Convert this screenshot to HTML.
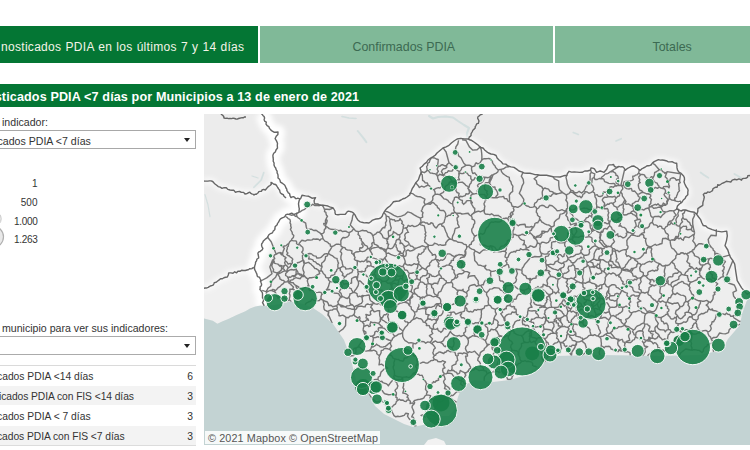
<!DOCTYPE html>
<html><head><meta charset="utf-8">
<style>
*{margin:0;padding:0;box-sizing:border-box}
html,body{width:750px;height:450px;overflow:hidden;background:#fff;font-family:"Liberation Sans",sans-serif}
.abs{position:absolute}
.t{position:absolute;white-space:pre;line-height:1}
.lb{font-size:10.6px;color:#333}
.row{position:absolute;left:0;width:196px;height:20px}
.rt{position:absolute;left:-3px;top:7px;font-size:10.3px;color:#333;white-space:pre;line-height:1}
.rn{position:absolute;right:3px;top:7px;font-size:10.3px;color:#333;line-height:1}
</style></head><body>
<div class="abs" style="left:0;top:26px;width:258px;height:37px;background:#047634"></div>
<div class="abs" style="left:260px;top:26px;width:293px;height:37px;background:#80b998"></div>
<div class="abs" style="left:555px;top:26px;width:195px;height:37px;background:#80b998"></div>
<div class="t" style="left:1px;top:40.7px;font-size:12px;letter-spacing:.3px;word-spacing:.5px;color:#f4f4e8">nosticados PDIA en los últimos 7 y 14 días</div>
<div class="t" style="left:352.5px;top:41px;font-size:12.4px;color:#3c6a52">Confirmados PDIA</div>
<div class="t" style="left:652.5px;top:41px;font-size:12.4px;color:#3c6a52">Totales</div>

<div class="abs" style="left:0;top:84px;width:750px;height:23px;background:#047634"></div>
<div class="t" style="left:-5.3px;top:90.7px;font-size:12.6px;letter-spacing:.12px;font-weight:bold;color:#fff">sticados PDIA &lt;7 días por Municipios a 13 de enero de 2021</div>

<div class="t lb" style="left:2px;top:117px">indicador:</div>
<div class="abs" style="left:-2px;top:130px;width:198px;height:19px;border:1px solid #a8a8a8;background:#fff"></div>
<div class="t lb" style="left:-2.5px;top:136px">cados PDIA &lt;7 días</div>
<svg class="abs" style="left:184px;top:138.2px" width="6" height="5"><path d="M0 0H6L3 4Z" fill="#222"/></svg>

<svg class="abs" style="left:0;top:170px" width="40" height="90">
<circle cx="-6.1" cy="48.8" r="7.3" fill="#efefef" stroke="#c8c8c8" stroke-width="1"/>
<circle cx="-7.4" cy="66.8" r="10.9" fill="#e9e9e9" stroke="#b0b0b0" stroke-width="1.2"/>
</svg>
<div class="t lb" style="right:712.5px;top:179px;font-size:10px">1</div>
<div class="t lb" style="right:712.5px;top:198px;font-size:10px">500</div>
<div class="t lb" style="right:712.5px;top:216.5px;font-size:10px;letter-spacing:-.3px">1.000</div>
<div class="t lb" style="right:712.5px;top:235px;font-size:10px;letter-spacing:-.3px">1.263</div>

<div class="t lb" style="left:2px;top:323px">municipio para ver sus indicadores:</div>
<div class="abs" style="left:-2px;top:336px;width:198px;height:19px;border:1px solid #ababab;background:#fff"></div>
<svg class="abs" style="left:184.2px;top:343.7px" width="6" height="5"><path d="M0 0H6L3 4Z" fill="#222"/></svg>

<div class="row" style="top:365px;background:#fff"><div class="rt">cados PDIA &lt;14 días</div><div class="rn">6</div></div>
<div class="row" style="top:386px;height:19px;background:#f3f3f3"><div class="rt" style="left:-1px;top:6px;letter-spacing:-.08px">icados PDIA con FIS &lt;14 días</div><div class="rn" style="top:6px">3</div></div>
<div class="row" style="top:405px;background:#fff"><div class="rt">cados PDIA &lt; 7 días</div><div class="rn">3</div></div>
<div class="row" style="top:426px;height:19px;background:#f3f3f3"><div class="rt" style="top:6px;letter-spacing:-.06px">cados PDIA con FIS &lt;7 días</div><div class="rn" style="top:6px">3</div></div>
<div class="abs" style="left:0;top:364.6px;width:196px;height:1px;background:#dadada"></div>
<div class="abs" style="left:0;top:445px;width:196px;height:1px;background:#dcdcdc"></div>

<svg class="abs" style="left:204px;top:114px" width="546" height="331" viewBox="204 114 546 331">
<defs><filter id="blur" x="-5%" y="-5%" width="110%" height="110%"><feGaussianBlur stdDeviation="2.8"/></filter></defs>
<rect x="204" y="114" width="546" height="331" fill="#eaeaea"/>
<path d="M203.0 113.0 L261.0 113.0 L266.0 124.0 L278.0 132.0 L276.0 150.0 L274.0 165.0 L278.0 178.0 L286.0 188.0 L291.0 197.6 L300.0 199.0 L299.0 212.0 L289.0 214.4 L279.6 220.0 L274.8 229.6 L268.7 235.0 L261.6 245.7 L258.1 254.5 L254.5 267.0 L257.2 275.9 L261.6 284.7 L262.5 293.6 L263.5 299.0 L264.2 305.9 L260.7 305.5 L255.3 306.4 L250.0 308.6 L245.4 311.3 L236.1 315.2 L228.3 319.1 L222.1 321.4 L217.4 323.8 L212.8 320.7 L203.0 318.3Z" fill="#ececec"/>
<path d="M203.0 289.0 L211.2 285.7 L214.3 282.6 L220.6 278.7 L233.0 273.2 L247.0 270.0 L254.5 267.0 L257.2 275.9 L261.6 284.7 L262.5 293.6 L263.5 299.0 L264.2 305.9 L260.7 305.5 L255.3 306.4 L250.0 308.6 L245.4 311.3 L236.1 315.2 L228.3 319.1 L222.1 321.4 L217.4 323.8 L212.8 320.7 L203.0 318.3Z" fill="#f0f0f0"/>
<path d="M300.0 199.0 L302.0 195.2 L315.6 197.6 L314.8 204.0 L326.0 205.6 L333.2 208.0 L335.6 214.4 L345.2 214.4 L348.4 211.2 L353.2 212.8 L359.6 221.6 L369.0 223.0 L376.0 219.0 L383.0 214.0 L390.0 206.0 L399.0 201.0 L407.0 197.0 L414.0 186.0 L421.0 173.0 L420.0 168.0 L428.0 160.0 L437.0 153.0 L443.0 148.0 L454.0 141.0 L468.0 139.0 L474.0 142.0 L483.0 148.0 L491.0 154.0 L499.0 160.0 L508.0 166.0 L519.0 171.0 L530.0 173.3 L540.0 175.2 L553.0 176.7 L567.0 175.2 L569.0 171.3 L579.5 172.4 L590.0 170.3 L591.0 168.0 L594.4 168.8 L596.5 172.4 L604.0 172.4 L608.3 165.4 L613.6 164.5 L615.7 167.1 L622.0 166.6 L625.3 170.3 L634.0 166.0 L640.3 170.3 L646.7 166.0 L651.0 165.0 L658.4 159.6 L666.0 160.7 L674.4 162.8 L676.7 163.3 L678.9 172.2 L684.4 177.8 L685.6 185.6 L687.8 192.2 L683.3 200.0 L676.7 208.9 L685.6 210.0 L696.7 214.4 L703.3 225.6 L707.8 227.8 L726.7 231.1 L727.8 250.0 L734.7 264.0 L747.2 294.3 L751.0 292.0 L751.0 289.0 L742.0 314.0 L740.0 325.0 L728.0 339.0 L722.0 350.0 L700.0 355.0 L660.0 356.0 L600.0 355.0 L555.0 356.0 L547.0 361.0 L523.0 376.0 L510.0 380.0 L493.0 382.0 L474.0 380.0 L462.0 387.0 L458.0 397.0 L455.0 409.0 L449.0 416.0 L436.0 416.0 L423.0 425.0 L413.0 427.0 L404.0 424.0 L384.0 414.0 L375.0 406.0 L368.0 393.0 L357.0 384.0 L352.0 364.0 L350.0 356.0 L344.0 340.0 L333.0 324.0 L322.0 314.0 L313.0 308.0 L303.0 304.0 L294.5 302.3 L290.0 301.5 L285.6 302.8 L275.0 305.0 L264.2 305.9 L263.5 299.0 L262.5 293.6 L261.6 284.7 L257.2 275.9 L254.5 267.0 L258.1 254.5 L261.6 245.7 L268.7 235.0 L274.8 229.6 L279.6 220.0 L289.0 214.4 L299.0 212.0Z" fill="#eeeeee"/>
<path d="M429.0 116.0 L433.0 118.5 L438.0 117.0 L446.0 116.5 L453.0 117.5 L458.0 121.0 L464.0 125.0 L469.0 128.0 L467.0 133.0 L467.0 137.0" fill="none" stroke="#c6d8d8" stroke-opacity=".65" stroke-width="2.08" stroke-linecap="round" stroke-linejoin="round"/><path d="M342.0 116.5 L349.0 118.0 L356.0 118.5" fill="none" stroke="#c6d8d8" stroke-opacity=".65" stroke-width="1.60" stroke-linecap="round" stroke-linejoin="round"/><path d="M357.8 131.0 L362.7 137.2 L366.4 142.1" fill="none" stroke="#c6d8d8" stroke-opacity=".65" stroke-width="2.00" stroke-linecap="round" stroke-linejoin="round"/><path d="M263.7 172.7 L261.2 180.0 L253.9 187.3" fill="none" stroke="#c6d8d8" stroke-opacity=".65" stroke-width="1.76" stroke-linecap="round" stroke-linejoin="round"/><path d="M258.0 178.0 L252.0 176.0" fill="none" stroke="#c6d8d8" stroke-opacity=".65" stroke-width="1.20" stroke-linecap="round" stroke-linejoin="round"/><path d="M205.0 194.7 L208.0 205.0 L210.0 216.7" fill="none" stroke="#c6d8d8" stroke-opacity=".65" stroke-width="1.20" stroke-linecap="round" stroke-linejoin="round"/><path d="M573.2 132.5 L578.4 134.5" fill="none" stroke="#c6d8d8" stroke-opacity=".65" stroke-width="1.60" stroke-linecap="round" stroke-linejoin="round"/><path d="M616.0 141.0 L621.3 138.7" fill="none" stroke="#c6d8d8" stroke-opacity=".65" stroke-width="1.60" stroke-linecap="round" stroke-linejoin="round"/><path d="M700.6 172.5 L704.0 175.0 L708.4 177.7" fill="none" stroke="#c6d8d8" stroke-opacity=".65" stroke-width="1.76" stroke-linecap="round" stroke-linejoin="round"/><path d="M734.4 174.0 L738.0 176.0 L740.9 177.7" fill="none" stroke="#c6d8d8" stroke-opacity=".65" stroke-width="1.76" stroke-linecap="round" stroke-linejoin="round"/>
<g filter="url(#blur)"><path d="M300.0 199.0 L298.9 198.6 L297.8 198.2 L296.7 198.6 L295.5 198.5 L294.7 197.3 L293.5 196.7 L292.2 196.9 L291.0 197.6 L290.3 196.4 L289.8 195.1 L289.6 193.6 L288.3 192.9 L287.6 191.7 L286.9 190.6 L286.8 189.2 L286.0 188.0 L285.4 186.4 L284.6 185.0 L283.3 184.0 L282.0 183.0 L280.4 182.2 L280.1 180.5 L279.3 179.0 L278.0 178.0 L278.1 176.3 L277.9 174.5 L277.1 172.9 L277.1 171.2 L276.1 169.7 L275.7 168.0 L274.6 166.6 L274.0 165.0 L274.1 163.0 L273.2 161.2 L273.3 159.2 L273.0 157.2 L272.9 155.2 L273.7 153.3 L275.3 152.0 L276.0 150.0 L277.5 148.0 L277.3 145.5 L277.5 143.2 L276.5 140.9 L275.1 138.7 L276.2 136.3 L277.9 134.5 L278.0 132.0 L276.0 132.3 L274.0 132.2 L272.3 131.2 L270.7 129.9 L269.5 128.4 L268.8 126.6 L267.1 125.6 L266.0 124.0 L266.3 122.1 L264.6 121.1 L264.1 119.6 L264.6 118.0 L264.1 116.5 L262.9 115.4 L262.0 114.2 L261.0 113.0 M264.2 305.9 L263.4 304.2 L262.5 302.6 L263.5 300.9 L263.5 299.0 L262.5 297.9 L262.5 296.4 L262.5 295.0 L262.5 293.6 L262.2 292.4 L261.4 291.3 L260.6 290.3 L259.8 289.4 L260.3 288.1 L260.1 286.8 L261.2 286.0 L261.6 284.7 L261.4 283.4 L260.9 282.2 L260.6 281.0 L260.7 279.7 L260.0 278.5 L259.5 277.2 L258.2 276.9 L257.2 275.9 L257.0 274.7 L256.7 273.6 L256.2 272.6 L255.7 271.5 L255.1 270.4 L254.6 269.4 L254.5 268.2 L254.5 267.0 L254.9 265.4 L255.4 263.9 L255.6 262.2 L256.5 260.8 L257.0 259.0 L258.7 258.0 L258.5 256.2 L258.1 254.5 L257.9 253.1 L258.8 251.9 L260.1 251.5 L261.1 250.6 L262.3 249.7 L262.9 248.3 L262.1 247.1 L261.6 245.7 L261.6 244.0 L262.6 242.6 L263.3 241.1 L264.5 239.9 L265.7 238.8 L267.1 237.9 L268.0 236.5 L268.7 235.0 L269.5 234.3 L270.3 233.7 L271.3 233.3 L272.3 232.9 L272.8 232.0 L273.2 231.0 L274.1 230.4 L274.8 229.6 L275.0 228.2 L275.1 226.7 L276.1 225.7 L277.2 224.8 L277.5 223.4 L278.4 222.4 L279.0 221.2 L279.6 220.0 L280.5 218.9 L281.7 218.2 L282.9 217.6 L284.2 217.1 L285.2 215.9 L286.0 214.6 L287.5 214.3 L289.0 214.4 L290.3 213.7 L291.7 213.2 L292.9 213.9 L294.3 214.4 L295.4 213.8 L296.7 213.4 L298.0 212.9 L299.0 212.0 L299.1 210.4 L299.3 208.7 L298.9 207.1 L298.7 205.4 L298.5 203.8 L298.8 202.1 L299.2 200.5 L300.0 199.0" fill="none" stroke="#fff" stroke-width="14" stroke-linejoin="round"/>
<path d="M203.0 289.0 L203.9 288.3 L205.0 288.0 L206.1 288.0 L207.2 287.7 L208.3 287.3 L209.2 286.7 L210.2 286.2 L211.2 285.7 L212.4 285.4 L213.4 284.8 L213.9 283.7 L214.3 282.6 L216.2 282.2 L217.7 281.0 L219.2 279.9 L220.6 278.7 L222.4 278.8 L223.9 277.7 L225.6 277.3 L227.3 277.0 L228.3 275.0 L228.7 272.9 L230.8 272.9 L233.0 273.2 L234.7 271.8 L236.6 272.8 L237.9 271.3 L239.9 271.3 L241.6 270.3 L243.4 270.5 L245.3 270.5 L247.0 270.0 L248.0 269.8 L248.9 269.3 L249.8 268.6 L250.9 268.9 L251.9 268.6 L252.7 267.9 L253.7 267.8 L254.5 267.0 M203.0 181.0 L204.6 181.1 L206.2 181.1 L207.8 181.1 L209.4 180.9 L211.1 180.9 L212.7 181.5 L213.8 182.8 L215.0 184.0 L216.7 185.2 L218.2 186.6 L220.2 187.2 L222.0 188.3 L224.1 187.7 L226.3 187.7 L227.8 189.4 L230.0 190.0 L231.9 190.3 L233.9 190.3 L235.3 192.2 L237.6 191.6 L239.6 191.5 L241.4 192.4 L243.6 192.4 L245.0 194.0 L246.3 193.8 L247.5 193.4 L248.5 192.6 L249.8 192.2 L250.6 193.2 L251.7 193.8 L253.0 194.2 L254.0 195.0 L255.0 194.2 L256.3 194.3 L257.2 193.5 L258.2 192.8 L258.8 191.6 L260.1 191.4 L261.5 191.3 L262.0 190.0 L263.7 189.4 L265.3 190.0 L266.4 188.7 L267.5 187.4 L268.6 186.3 L270.0 185.5 L271.3 184.3 L271.0 182.5 L272.5 183.2 L273.9 184.2 L275.7 184.5 L276.8 186.0 L277.7 187.5 L278.6 188.9 L279.7 190.3 L280.0 192.0 L280.5 193.0 L281.4 193.7 L282.3 194.3 L283.4 194.6 L283.6 195.8 L284.4 196.6 L285.2 197.2 L286.0 198.0 M300.0 199.0 L300.8 198.2 L301.2 197.2 L301.6 196.2 L302.0 195.2 L305.4 195.9 L308.8 196.3 L312.0 198.2 L315.6 197.6 L314.7 199.1 L314.1 200.7 L314.3 202.4 L314.8 204.0 L317.7 204.0 L320.3 205.3 L323.2 205.2 L326.0 205.6 L327.9 206.0 L329.6 206.9 L331.4 207.4 L333.2 208.0 L334.1 209.5 L335.0 211.0 L335.0 212.7 L335.6 214.4 L338.0 214.7 L340.4 214.4 L342.8 214.4 L345.2 214.4 L345.9 213.5 L346.6 212.6 L347.3 211.6 L348.4 211.2 L349.7 211.4 L350.9 211.7 L352.1 212.1 L353.2 212.8 L355.0 214.9 L356.2 217.4 L357.6 219.7 L359.6 221.6 L361.9 222.3 L364.2 222.9 L366.6 222.7 L369.0 223.0 L370.7 221.8 L372.1 220.4 L374.0 219.6 L376.0 219.0 L378.3 218.8 L380.6 218.0 L382.2 216.3 L383.0 214.0 L384.4 211.7 L385.9 209.5 L387.8 207.6 L390.0 206.0 L391.8 203.9 L393.5 201.8 L396.2 201.2 L399.0 201.0 L401.0 200.0 L402.9 198.8 L405.1 198.2 L407.0 197.0 L409.7 194.9 L411.0 191.8 L412.2 188.7 L414.0 186.0 L415.8 182.7 L418.3 179.9 L419.5 176.4 L421.0 173.0 L421.1 171.7 L420.9 170.4 L420.5 169.2 L420.0 168.0 L422.3 166.3 L424.1 164.1 L426.5 162.4 L428.0 160.0 L430.3 158.3 L432.8 156.9 L435.2 155.2 L437.0 153.0 L438.5 151.8 L440.0 150.5 L441.5 149.3 L443.0 148.0 L446.1 146.8 L449.0 145.3 L451.4 143.0 L454.0 141.0 L457.1 139.0 L460.8 138.4 L464.4 138.9 L468.0 139.0 L469.5 139.8 L471.2 140.2 L472.6 141.1 L474.0 142.0 L476.2 143.6 L478.4 145.2 L480.1 147.5 L483.0 148.0 L484.6 149.9 L486.5 151.6 L488.6 153.0 L491.0 154.0 L493.7 154.4 L496.1 155.5 L497.1 158.0 L499.0 160.0 L501.2 161.7 L502.9 163.9 L505.8 164.1 L508.0 166.0 L511.0 166.9 L514.0 167.4 L516.6 169.1 L519.0 171.0 L521.7 171.9 L524.3 173.1 L527.1 173.3 L530.0 173.3 L532.5 173.9 L534.9 174.6 L537.5 174.7 L540.0 175.2 L543.3 175.1 L546.6 175.3 L549.8 176.0 L553.0 176.7 L556.6 176.9 L560.1 177.0 L563.5 175.8 L567.0 175.2 L567.2 174.1 L567.7 173.1 L568.4 172.2 L569.0 171.3 L571.6 172.1 L574.2 171.9 L576.9 172.1 L579.5 172.4 L582.2 172.3 L584.7 171.0 L587.4 171.0 L590.0 170.3 L590.7 169.2 L591.0 168.0 L592.8 168.1 L594.4 168.8 L594.9 169.7 L595.5 170.6 L596.0 171.5 L596.5 172.4 L598.4 171.7 L600.2 171.0 L602.1 171.7 L604.0 172.4 L605.3 170.8 L606.7 169.3 L607.5 167.3 L608.3 165.4 L609.6 164.9 L610.9 164.9 L612.3 164.8 L613.6 164.5 L614.3 166.1 L615.7 167.1 L617.3 167.1 L618.8 166.4 L620.4 166.9 L622.0 166.6 L623.2 167.1 L624.1 168.1 L624.8 169.1 L625.3 170.3 L627.1 168.7 L629.3 167.5 L631.5 166.3 L634.0 166.0 L635.6 167.1 L637.3 168.0 L638.6 169.3 L640.3 170.3 L641.7 168.9 L643.4 168.0 L645.1 167.2 L646.7 166.0 L647.8 165.7 L648.9 165.7 L650.0 165.4 L651.0 165.0 L652.4 163.1 L654.2 161.6 L656.3 160.6 L658.4 159.6 L660.3 160.1 L662.2 160.0 L664.1 160.3 L666.0 160.7 L668.0 161.7 L670.2 161.9 L672.4 161.8 L674.4 162.8 L675.5 163.2 L676.7 163.3 L676.9 165.6 L677.0 167.9 L677.6 170.2 L678.9 172.2 L680.7 173.1 L682.2 174.5 L683.6 175.9 L684.4 177.8 L684.5 179.9 L684.0 181.8 L684.7 183.8 L685.6 185.6 L686.4 187.2 L687.6 188.6 L688.1 190.4 L687.8 192.2 L687.8 194.7 L686.0 196.4 L685.1 198.5 L683.3 200.0 L681.8 202.4 L679.4 204.0 L677.4 206.1 L676.7 208.9 L678.9 209.9 L681.0 211.0 L683.2 210.0 L685.6 210.0 L688.4 211.0 L691.3 211.8 L694.4 212.2 L696.7 214.4 L698.6 217.0 L700.6 219.6 L701.8 222.7 L703.3 225.6 L704.6 225.8 L705.9 226.0 L706.8 226.9 L707.8 227.8 L712.3 229.6 L717.0 231.1 L721.8 231.9 L726.7 231.1 L727.3 235.9 L726.5 240.6 L725.0 245.6 L727.8 250.0 L729.0 253.7 L730.5 257.4 L732.8 260.5 L734.7 264.0 L735.9 272.4 L737.2 280.7 L741.6 287.9 L747.2 294.3 L748.2 293.7 L749.1 293.2 L749.9 292.4 L751.0 292.0" fill="none" stroke="#fff" stroke-width="6" stroke-opacity=".7" stroke-linejoin="round"/></g>
<path d="M713.6 351.9 L712.2 343.7 M712.2 343.7 L712.6 341.3 L711.3 339.2 M711.3 339.2 L713.6 337.4 L716.5 337.5 L718.1 335.3 L719.6 333.0 L722.5 333.6 L725.4 333.9 L728.5 332.7 L729.3 329.5 L731.4 327.9 L733.5 326.5 L735.9 325.3 L738.5 325.0 L740.2 324.0 M722.2 257.2 L720.8 255.5 L719.0 254.3 L716.9 253.5 L714.7 253.5 M714.7 253.5 L714.9 251.5 L713.3 250.3 L712.9 248.5 L711.4 247.5 M730.2 254.9 L722.2 257.2 M716.3 229.3 L716.4 232.1 L716.2 235.7 L711.1 235.2 L708.2 239.3 L708.9 243.8 L711.4 247.5 M732.9 260.4 L725.9 277.6 M740.7 321.3 L739.7 321.5 L737.9 320.3 L736.0 319.2 L734.1 318.0 L732.9 316.0 M725.9 277.6 L726.1 280.9 L728.5 283.1 L731.4 284.0 L734.3 285.0 L735.6 287.8 L736.5 290.7 L733.0 292.3 L733.6 296.1 L735.3 298.3 L736.4 300.8 L736.2 303.7 L737.7 306.2 L737.2 309.2 L737.4 312.2 L735.7 314.7 L732.9 316.0 M722.2 257.2 L723.0 258.4 L723.3 259.8 L724.5 260.6 L725.4 261.7 L724.4 262.8 L723.7 264.2 L722.8 266.0 L724.4 267.1 L724.0 268.4 L723.8 269.6 L722.4 270.8 L723.6 272.2 L723.3 273.6 L722.8 275.0 L723.5 276.2 L724.6 277.2 M725.9 277.6 L724.6 277.2 M711.3 339.2 L710.6 337.1 L709.0 335.7 L708.1 333.8 L707.8 331.7 M707.8 331.7 L709.4 331.4 L710.5 330.2 L711.2 328.7 L710.9 327.2 L710.1 325.5 L711.6 324.5 L711.8 323.2 L712.1 321.8 L713.7 321.7 L714.3 320.2 L715.3 319.1 L715.6 317.7 L716.0 316.2 L716.3 314.7 L717.9 314.2 L719.4 314.0 M732.9 316.0 L730.8 316.4 L729.7 314.5 L727.8 314.3 L726.4 313.1 L725.0 314.7 L723.0 313.8 L721.2 313.9 L719.4 314.0 M431.5 419.1 L428.2 417.8 L421.0 415.4 L428.4 413.2 L435.1 416.6 M435.2 416.6 L434.7 409.3 L438.0 402.7 M416.6 426.3 L414.4 425.8 L412.9 421.5 M412.9 421.5 L413.8 420.3 L413.9 418.8 L413.3 417.2 L411.7 416.9 L412.6 414.7 L414.0 412.8 L413.5 410.6 L412.5 408.5 L412.0 407.2 L412.3 405.9 L413.0 404.8 L414.2 404.1 M414.2 404.1 L414.6 402.6 L413.5 401.5 L414.6 400.5 L415.9 400.1 L418.0 399.5 L420.2 399.2 L422.2 398.8 L423.9 397.8 L424.9 396.0 L426.6 394.9 M438.0 402.7 L437.7 400.5 L435.7 399.3 L433.6 398.9 L431.7 399.6 L429.8 398.0 L430.6 395.7 L428.6 395.1 L426.6 394.9 M715.0 310.7 L716.4 311.2 L717.7 311.7 L718.9 312.5 L719.4 314.0 M708.6 301.7 L708.0 303.8 L706.2 305.1 L708.0 306.4 L708.8 308.4 L710.1 309.5 L711.8 309.8 L713.3 310.5 L715.0 310.7 M708.6 301.7 L710.4 302.5 L711.7 301.1 L712.6 299.7 L713.1 298.2 L713.2 296.8 L713.2 295.3 L714.9 294.3 L714.1 292.5 L715.7 291.9 L716.0 290.2 L716.8 288.8 L716.1 287.2 L716.5 285.2 L717.7 283.7 L716.1 282.5 L714.2 281.9 M724.6 277.2 L722.8 276.6 L721.0 277.3 L719.7 278.5 L718.2 279.5 M714.2 281.9 L714.8 280.7 L715.5 279.6 L716.8 279.2 L718.2 279.5 M689.4 285.1 L689.0 286.2 M692.9 298.2 L693.7 296.6 L693.4 294.8 L691.7 293.9 L691.1 292.2 L690.4 290.7 L689.4 289.4 L690.0 287.7 L689.0 286.2 M700.2 300.6 L702.2 301.2 L704.3 301.2 L706.6 300.4 L708.6 301.7 M700.2 300.6 L698.2 300.7 L696.4 299.9 L694.7 298.9 L692.9 298.2 M689.4 285.1 L689.9 283.1 L691.5 282.0 L693.4 281.4 L695.1 280.5 L697.0 279.8 L697.7 277.9 L699.5 277.4 L701.2 276.5 M714.2 281.9 L712.3 281.3 L711.3 279.5 L709.4 278.9 L707.6 279.7 L705.9 278.7 L704.0 278.9 L702.4 278.0 L701.2 276.5 M684.0 275.1 L685.8 275.4 L687.6 275.7 L687.6 277.5 L688.4 279.2 L688.4 281.2 L690.4 281.9 L689.8 283.5 L689.4 285.1 M691.6 266.9 L692.8 267.9 L693.7 269.1 L695.5 269.2 L696.5 267.7 L698.1 269.5 L700.1 268.3 L699.6 270.0 L699.5 271.8 M691.6 266.9 L690.9 268.2 L689.4 268.6 L688.2 269.5 L687.7 270.9 L686.5 271.6 L685.5 272.7 L685.0 274.0 L684.0 275.1 M701.2 276.5 L700.4 275.4 L699.4 274.6 L699.8 273.2 L699.5 271.8 M680.4 173.7 L666.9 171.6 M680.6 174.0 L679.7 179.8 M679.7 179.8 L677.9 179.8 L676.2 180.2 L675.3 178.6 L673.7 177.8 L671.9 178.0 L670.4 178.8 L669.8 180.4 L668.6 181.6 M666.9 171.6 L666.7 173.0 L666.1 174.3 L665.6 175.6 L665.2 177.0 L666.5 177.8 L667.3 179.1 L667.9 180.4 L668.6 181.6 M693.9 213.3 L694.6 215.4 L692.7 219.4 L692.7 224.0 L693.5 228.3 L694.6 232.6 M711.4 247.5 L709.7 245.8 L707.4 246.1 L705.5 245.3 L703.6 244.4 L701.3 243.8 L698.9 243.7 L697.2 245.2 L695.5 246.9 M695.5 246.9 L695.5 245.2 L694.9 243.6 L693.9 242.2 L692.7 240.9 L693.5 239.5 L694.0 237.9 L693.6 236.2 L694.2 234.5 M694.6 232.6 L694.2 234.5 M712.2 343.7 L710.5 343.4 L709.4 344.7 L707.5 344.5 L706.8 346.3 L705.3 346.9 L704.2 348.1 L703.4 349.5 L703.3 351.1 L702.0 352.6 L700.4 351.3 L699.2 350.4 L697.6 350.3 L696.2 349.9 L694.7 349.6 L693.2 349.8 L691.8 350.3 M707.8 331.7 L705.9 330.4 L703.6 330.6 L701.7 331.5 L699.9 332.7 M691.8 350.3 L692.0 347.9 L691.0 345.8 L691.6 343.4 L690.7 341.2 M699.9 332.7 L697.7 333.0 L695.9 334.1 L693.6 334.2 L691.7 333.0 L690.9 334.2 L689.9 335.1 L690.8 336.1 L691.8 337.2 L691.6 339.3 L690.7 341.2 M267.4 237.0 L271.2 241.7 L276.2 254.3 M260.2 281.9 L260.7 281.0 L266.7 277.9 L272.0 273.7 L269.8 266.9 L272.5 260.3 M276.2 254.3 L274.4 254.9 L273.8 256.6 L274.7 258.6 L272.9 259.8 M272.5 260.3 L272.9 259.8 M698.9 257.8 L699.8 260.1 L699.3 262.5 L699.7 263.7 L700.5 264.9 L701.8 265.0 L703.2 264.9 M698.9 257.8 L699.9 259.7 L702.0 259.2 L703.7 259.7 L704.8 261.1 L705.7 259.5 L707.5 259.0 L709.2 258.9 L710.8 258.1 M703.2 264.9 L704.7 264.7 L705.8 263.7 L707.3 263.6 L708.4 262.5 M710.8 258.1 L709.4 258.6 L708.9 259.9 L708.1 261.1 L708.4 262.5 M686.7 254.3 L687.7 253.2 L689.2 252.8 L690.2 251.7 L691.7 251.4 M691.7 251.4 L692.9 252.0 L693.4 253.3 L694.3 254.3 L694.4 255.6 L695.5 256.2 L696.7 256.6 L697.9 257.1 L698.9 257.8 M691.6 266.9 L689.4 266.0 L689.7 263.7 L688.1 262.8 L686.8 261.5 L687.6 259.8 L688.1 257.9 L688.2 255.8 L686.7 254.3 M699.5 271.8 L700.8 270.3 L701.4 268.4 L702.3 266.7 L703.2 264.9 M695.5 246.9 L694.6 248.1 L694.0 249.5 L692.5 250.0 L691.7 251.4 M714.7 253.5 L715.1 255.4 L714.4 257.2 L712.9 259.1 L710.8 258.1 M718.2 279.5 L716.7 279.6 L715.2 279.3 L714.1 278.2 L712.6 278.0 L712.0 276.5 L712.5 274.9 L711.2 274.0 L710.2 272.7 L709.7 271.4 L709.6 270.1 L709.0 268.5 L710.4 267.4 L710.3 266.1 L710.0 264.7 L708.7 263.9 L708.4 262.5 M695.9 320.2 L696.4 321.7 L695.5 322.9 M695.9 320.2 L694.6 319.6 L693.3 319.4 L692.4 318.4 L692.0 317.0 M695.5 322.9 L694.1 323.4 L693.5 324.7 L692.6 325.8 L692.8 327.3 L691.8 328.0 L690.9 328.9 L689.9 329.7 L689.1 330.6 L687.7 330.5 L686.7 329.6 L685.4 329.9 L684.1 329.5 L682.8 329.6 L681.7 330.4 L680.4 330.8 L679.1 330.6 M692.0 317.0 L691.9 317.0 M691.9 317.0 L689.5 316.7 L687.9 318.6 L687.5 320.8 L685.9 322.3 L683.7 321.9 L681.9 323.2 L680.0 323.7 L677.9 323.6 M677.9 323.6 L678.2 325.4 L676.8 326.7 L677.5 328.3 L677.8 329.9 M679.1 330.6 L677.8 329.9 M715.0 310.7 L713.1 310.6 L712.3 308.9 L710.7 309.9 L709.0 309.1 L707.8 310.3 L707.4 311.9 L705.7 312.2 L704.4 313.3 L702.9 313.7 L701.4 313.5 L700.2 314.5 L698.8 315.1 L698.1 316.5 L698.2 318.2 L697.5 319.7 L695.9 320.2 M699.9 332.7 L700.0 331.2 L699.0 330.1 L698.0 329.2 L697.7 327.8 L696.8 326.7 L696.9 325.2 L696.6 323.8 L695.5 322.9 M700.2 300.6 L700.5 303.0 L699.3 305.2 L698.8 307.5 L697.3 309.4 L696.9 311.8 L695.6 313.9 L694.5 314.7 L693.1 314.7 L692.4 315.8 L692.0 317.0 M690.7 341.2 L689.3 341.0 L687.9 341.3 L686.6 340.2 L687.1 338.6 L686.1 336.5 L686.5 334.2 L684.7 333.2 L682.7 332.6 L680.8 331.8 L679.1 330.6 M691.8 350.3 L685.6 349.0 L680.6 353.0 L679.5 355.5 M571.6 355.6 L570.4 353.9 L567.9 348.5 M571.5 355.6 L571.9 352.0 L574.9 347.5 L576.5 342.3 M567.9 348.5 L568.7 347.3 L569.6 346.2 L571.2 346.7 L572.2 345.2 L573.9 345.3 L575.7 345.7 L576.5 344.1 L576.5 342.3 M567.9 348.5 L566.2 347.7 L566.9 345.9 L565.5 346.3 L564.3 345.5 L564.2 344.0 L563.1 342.9 L561.7 342.9 L560.3 343.1 M560.3 343.1 L560.8 344.8 L561.1 346.6 L561.5 348.5 L560.7 350.2 L558.7 349.5 L556.7 350.2 L555.6 352.0 L554.2 353.4 L552.8 354.0 L551.4 354.9 L550.1 355.8 L548.6 356.2 L547.0 358.0 L544.7 357.7 L545.3 359.7 L545.6 361.7 M545.5 361.9 L545.6 361.7 M523.4 202.9 L523.8 199.3 L521.8 196.3 L519.3 193.2 L521.0 189.6 L522.0 186.2 L523.7 183.0 L523.2 179.4 L521.3 176.2 L523.2 171.9 M509.1 166.5 L508.6 166.8 L505.9 167.1 L503.7 168.8 L501.0 169.4 M523.4 202.9 L522.3 203.7 L521.6 204.8 L520.6 205.8 L519.4 206.4 L518.2 207.3 L516.8 207.2 L515.5 206.7 L514.1 206.7 M514.1 206.7 L512.2 206.3 L511.6 204.5 L511.1 202.9 L509.6 202.0 M509.6 202.0 L509.5 199.7 L509.5 197.4 L509.3 195.0 L510.6 193.0 L512.7 191.4 L512.6 188.7 L512.9 186.2 L511.5 184.1 L510.9 181.8 L509.5 180.0 L509.3 177.3 L506.9 176.3 L504.9 175.0 L503.0 173.7 L501.5 171.7 L501.0 169.4 M291.3 240.4 L293.6 240.9 L296.0 240.9 L296.7 242.1 L296.5 243.4 L297.3 244.4 L298.7 244.8 M291.3 240.4 L292.0 238.7 L293.4 237.4 L293.8 235.4 L292.3 234.0 L292.2 232.4 L291.4 231.0 L290.4 229.4 L291.3 227.7 L290.7 226.1 L290.8 224.4 L290.0 222.9 L290.4 221.1 L289.8 219.3 L288.1 218.6 L287.0 217.3 L285.5 216.5 M298.7 244.8 L299.4 243.1 L300.5 241.8 L301.9 240.3 L303.9 240.8 L305.7 241.0 L307.1 240.0 L308.8 240.0 L310.4 240.1 L312.1 239.9 L313.4 238.9 L315.0 239.3 L316.7 239.0 L318.5 239.3 L319.9 240.4 L321.1 238.9 L323.0 238.6 M285.5 216.5 L285.7 216.3 M288.7 214.6 L289.7 214.6 L291.2 215.2 L292.7 215.0 L294.3 215.0 L295.3 216.2 L296.9 216.5 M296.9 216.5 L298.4 218.0 L300.2 219.2 L301.6 220.9 L303.6 221.8 L305.7 223.1 L306.0 225.5 L306.4 227.6 L307.2 229.6 L309.5 229.2 L311.7 229.3 L313.7 230.5 L316.1 230.3 L317.9 231.6 L319.9 232.8 L321.3 234.5 L322.5 236.4 M323.0 238.6 L322.5 236.4 M288.8 243.6 L289.7 241.7 L291.3 240.4 M288.8 243.6 L287.3 244.4 L286.2 245.6 L284.5 246.0 L283.0 246.7 L284.4 248.5 L283.4 250.6 L282.9 252.1 L282.7 253.6 L281.3 252.9 L279.9 252.5 M285.5 216.5 L285.5 216.5 M276.2 254.3 L277.9 253.2 L279.9 252.5 M333.2 208.1 L329.4 209.5 L324.3 209.0 M324.3 209.0 L323.3 206.7 L321.8 205.0 M321.4 204.9 L319.3 205.7 L316.9 205.3 L314.6 205.5 L312.7 204.2 L310.9 205.6 L308.7 206.0 L306.7 206.7 L305.6 208.5 L304.0 209.7 L302.1 210.4 L300.0 212.0 L299.0 211.9 M297.2 212.4 L296.6 214.1 L296.9 216.5 M326.2 218.9 L325.5 220.1 L325.4 221.4 L325.7 223.4 L323.7 223.4 L324.0 224.9 L325.4 225.4 L325.5 226.7 L325.9 228.0 L324.3 229.8 L324.1 232.2 L323.0 233.4 L321.4 233.6 L322.0 235.0 L322.5 236.4 M324.3 209.0 L324.7 210.2 L324.5 211.6 L325.9 212.3 L326.0 213.8 L326.5 215.2 L327.5 216.3 L326.7 217.6 L326.2 218.9 M349.2 232.7 L349.1 235.1 L347.6 236.9 L345.4 237.7 L343.1 237.5 L341.7 239.0 L340.8 240.9 L340.9 242.9 L340.8 244.9 M332.0 246.7 L334.1 245.6 L336.1 244.2 L338.5 244.2 L340.8 244.9 M326.2 218.9 L327.2 220.9 L326.6 223.1 L325.3 225.5 L327.5 227.2 L329.2 228.6 L331.2 229.3 L333.4 229.5 L335.5 229.5 L337.1 230.3 L338.8 230.7 L340.8 230.2 L342.3 231.6 L344.1 231.3 L345.9 231.2 L347.5 232.1 L349.2 232.7 M332.0 246.7 L330.3 246.0 L330.2 244.2 L328.7 243.7 L327.8 242.3 L326.4 241.6 L325.0 241.1 L323.9 239.9 L323.0 238.6 M263.3 297.8 L263.6 298.0 L266.4 295.5 L266.4 291.7 L267.8 288.4 L270.7 286.3 L271.2 282.8 L272.9 279.7 L275.6 277.3 L277.0 274.1 M262.2 290.4 L264.5 291.1 L267.3 291.8 L269.8 290.5 M269.8 290.5 L271.4 290.6 L272.5 289.4 L274.3 289.6 L274.7 291.3 L276.5 289.6 L278.1 287.7 L280.0 286.6 L281.4 284.9 L283.3 283.7 L284.5 281.8 M277.0 274.1 L278.3 274.9 L279.0 276.2 L279.8 277.4 L279.8 278.9 L281.0 279.5 L282.1 280.4 L283.7 280.4 L284.5 281.8 M269.8 290.5 L271.4 290.4 L272.9 291.1 L274.4 291.6 L275.6 292.8 L276.2 294.3 L276.2 295.9 L277.7 296.7 L278.0 298.5 L278.9 297.0 L280.7 297.0 L282.2 297.9 L283.8 297.8 L285.5 298.2 L286.2 299.9 L287.8 300.7 L289.3 299.8 M289.3 299.8 L289.4 298.2 L289.8 296.7 L290.0 295.1 L289.3 293.6 L290.0 291.4 L289.8 289.1 L292.0 289.2 L294.2 289.9 L292.6 288.8 L293.5 287.1 L292.4 286.1 L291.3 285.1 L290.5 284.0 L289.2 283.3 L288.5 282.0 L287.1 281.6 M284.5 281.8 L285.8 282.0 L287.1 281.6 M637.4 194.2 L639.4 193.9 L641.1 192.7 L643.1 192.4 L645.0 193.2 M645.0 193.2 L646.0 193.7 M633.1 206.7 L633.1 208.3 L634.0 209.7 M649.2 207.8 L647.3 208.2 L645.4 208.7 L643.7 210.1 L641.6 209.2 L639.9 210.4 L637.9 209.9 L636.0 209.1 L634.0 209.7 M649.2 207.8 L649.3 207.3 M633.1 206.7 L632.7 205.4 L632.1 204.3 L633.0 203.3 L634.2 202.8 L635.9 201.4 L638.1 201.4 L639.1 199.3 L640.7 197.5 L639.5 197.1 L638.4 196.5 L638.0 195.3 L637.4 194.2 M649.3 207.3 L649.2 205.1 L650.8 203.5 L650.8 201.5 L651.5 199.6 L650.6 198.5 L649.6 197.5 L650.7 196.4 L650.7 194.8 L648.4 194.1 L646.0 193.7 M634.0 209.7 L633.3 210.9 M652.8 223.0 L652.4 221.6 L652.8 220.1 L653.2 218.7 L653.3 217.3 M649.2 207.8 L648.9 209.1 L649.5 210.4 L649.8 211.7 L650.3 212.9 L650.5 214.4 L650.8 215.8 L651.8 217.0 L653.3 217.3 M652.8 223.0 L651.4 222.6 L650.2 223.4 L649.5 224.6 L649.4 226.0 L647.7 227.7 L645.3 228.1 M645.3 228.1 L643.4 227.8 L641.5 227.7 L639.5 227.6 L637.9 226.4 L638.9 224.8 L639.1 222.8 L640.7 221.2 L639.9 219.1 L638.0 219.7 L637.1 217.9 L636.8 216.4 L636.6 214.9 L636.7 213.5 L635.6 212.4 L634.5 211.6 L633.3 210.9 M692.3 231.2 L693.6 231.6 L694.6 232.6 M694.2 234.5 L692.6 234.9 L691.4 236.0 L690.1 236.7 L688.9 237.6 L687.0 237.1 L685.1 236.8 L683.9 238.3 L683.3 240.2 L681.7 239.3 L680.7 237.9 L678.9 238.8 L677.2 237.7 L675.8 238.9 L674.7 240.3 L672.9 239.8 L671.1 240.0 M692.3 231.2 L691.4 229.7 L689.6 229.4 L688.0 229.8 L686.3 229.3 L686.7 227.8 L686.3 226.3 L684.8 226.4 L683.3 226.3 L681.6 227.5 L680.1 229.1 M680.1 229.1 L680.1 231.1 L679.1 232.9 L678.7 234.8 L678.3 236.8 L675.8 236.5 L674.8 238.8 L673.1 240.0 L671.1 240.0 M541.9 186.8 L542.3 188.1 L543.5 188.9 L544.7 188.0 L546.2 188.5 L548.5 189.2 L549.8 191.2 L552.1 191.6 L554.1 192.9 L556.3 193.7 L558.6 193.6 M541.9 186.8 L542.7 188.2 L543.2 189.7 L542.4 191.1 L542.2 192.7 L542.3 194.2 L542.6 195.7 L542.5 197.2 L542.9 198.6 M558.6 193.6 L557.3 193.8 L556.2 194.4 L555.0 193.9 L554.0 193.1 L552.2 194.5 L550.8 196.4 L548.7 195.8 L546.5 196.3 L544.4 197.0 L542.9 198.6 M523.4 202.9 L524.5 203.9 L525.5 205.1 L526.8 206.0 L528.4 206.2 L529.7 207.3 L531.4 207.4 L533.0 207.1 L534.5 206.4 M541.9 186.8 L539.3 185.5 L536.9 183.9 L536.4 180.8 L534.1 178.8 L536.6 176.9 L538.7 174.9 M542.9 198.6 L541.1 197.9 L540.0 199.4 L538.2 199.4 L537.3 200.9 L536.3 202.3 L534.8 203.1 L534.3 204.7 L534.5 206.4 M567.9 207.7 L566.5 209.8 L564.4 211.0 L562.0 209.7 L559.5 210.6 L557.0 210.7 L555.5 208.7 L553.9 207.2 L552.1 205.8 L549.5 205.2 L548.1 207.5 L545.8 207.2 L544.0 205.7 L541.8 205.3 L539.7 206.1 L538.6 208.0 L536.7 209.2 M567.9 207.7 L567.4 206.2 L567.4 204.6 L567.6 203.0 L566.9 201.5 L565.8 200.0 L566.7 198.4 L566.6 196.8 L566.4 195.3 M534.5 206.4 L536.2 207.3 L536.7 209.2 M558.6 193.6 L560.6 193.0 L562.7 192.6 M566.4 195.3 L564.6 193.8 L562.7 192.6 M562.7 192.6 L559.5 189.8 L558.8 185.6 L558.7 180.8 L554.4 178.9 L553.1 176.7 M676.3 318.2 L676.5 319.9 L675.6 321.3 L676.0 323.2 L677.9 323.6 M676.3 318.2 L676.5 316.7 L677.7 315.8 M691.9 317.0 L692.3 315.3 L691.4 313.7 L690.0 312.8 L688.4 312.4 M688.4 312.4 L686.6 312.1 L684.9 312.9 L685.3 314.9 L683.7 316.2 L682.4 317.8 L680.5 318.8 L678.6 317.7 L677.7 315.8 M692.9 298.2 L690.8 298.9 L689.3 300.6 M688.4 312.4 L688.5 310.8 L689.1 309.5 L689.6 308.0 L689.1 306.5 L688.0 305.1 L688.6 303.5 L687.6 301.7 L689.3 300.6 M601.2 345.8 L602.8 346.6 L604.1 347.9 L605.4 346.4 L607.4 346.5 L609.1 346.3 L610.5 347.4 L611.1 349.0 L612.8 349.5 L614.2 350.8 L615.9 351.4 L618.2 351.6 L619.1 349.5 L620.2 350.7 L621.9 351.0 L623.8 350.7 L624.6 352.4 M601.2 345.8 L600.2 349.1 L599.1 352.4 L599.8 355.0 M630.4 355.5 L630.3 355.3 L629.9 352.7 L627.3 351.7 L624.6 352.4 M538.5 317.4 L540.5 317.9 L542.4 318.2 L543.6 317.1 L545.2 317.7 L545.6 319.0 L545.8 320.4 M530.5 321.6 L531.3 320.5 L531.4 319.1 L532.8 319.2 L534.1 318.8 L536.1 317.5 L538.5 317.4 M530.5 321.6 L531.9 322.4 L533.5 322.4 L533.8 324.0 L533.7 325.5 M533.7 325.5 L534.9 326.2 L535.9 327.2 L537.2 326.8 L538.5 326.6 L539.8 326.4 L541.1 326.4 L541.5 324.9 L543.1 324.8 M543.1 324.8 L544.2 324.0 L545.0 322.9 L545.2 321.6 L545.8 320.4 M349.2 232.7 L350.5 231.8 L351.9 231.2 L352.7 229.9 L353.8 228.8 M353.8 228.8 L350.2 225.1 L352.0 220.3 L352.7 215.9 L353.8 213.7 M405.2 228.0 L403.3 228.1 M390.0 219.0 L391.4 219.2 L392.7 219.9 L394.3 219.7 L395.1 221.2 L396.6 220.9 L398.0 220.8 L399.4 220.1 L400.1 218.6 L400.6 219.8 L401.6 220.7 L402.4 222.0 L401.7 223.4 L402.8 224.3 L403.8 225.3 L403.2 226.6 L403.3 228.1 M390.0 219.0 L389.3 217.8 L388.7 216.7 L387.5 216.4 L386.2 215.9 M386.2 215.9 L385.7 214.5 L384.6 213.4 L384.3 212.6 M385.2 211.4 L387.3 211.7 L390.7 213.3 L393.9 215.3 L397.5 216.9 L401.4 216.1 L405.0 214.6 L407.7 211.9 L411.1 212.9 L414.1 214.9 L417.2 216.7 L420.4 218.2 M419.5 223.9 L419.9 223.2 M419.5 223.9 L418.0 225.3 L416.2 226.2 L414.0 226.6 L412.2 225.4 L410.1 226.3 L408.2 225.3 L407.3 227.3 L405.2 228.0 M420.4 218.2 L420.6 219.5 L421.0 220.8 L420.8 222.2 L419.9 223.2 M420.4 218.2 L422.7 217.2 L422.4 214.7 L423.0 212.5 L421.3 210.9 L422.2 209.3 L422.7 207.5 L423.8 206.0 L425.2 204.8 M409.2 193.6 L410.8 193.1 L413.2 193.9 L415.1 195.6 L417.4 196.5 L419.9 196.7 L422.5 197.8 L424.9 199.2 L424.0 202.1 L425.2 204.8 M442.1 223.7 L440.2 224.0 L438.4 224.8 L437.4 226.5 L436.1 228.0 L434.7 226.9 L433.6 225.4 L432.9 223.5 L431.0 222.7 L430.0 224.0 L428.3 224.4 L427.3 222.9 L425.5 223.0 L424.2 222.1 L422.6 221.9 L421.4 223.0 L419.9 223.2 M442.1 223.7 L444.0 222.5 L444.5 220.4 L445.1 218.4 L445.5 216.4 M445.5 216.4 L445.8 214.7 L445.5 213.0 L444.6 211.5 L443.3 210.4 L441.6 210.5 L439.9 210.3 L439.1 208.7 L437.6 207.7 L437.1 205.9 L435.6 204.9 L434.4 203.6 L433.1 202.4 L431.5 203.2 L430.1 204.4 L428.3 203.9 L426.4 204.1 M425.2 204.8 L426.4 204.1 M466.0 165.3 L463.8 163.2 L462.4 160.5 L461.0 157.8 L458.6 155.9 L457.9 152.5 L455.4 150.1 L455.9 146.8 L457.8 144.0 L458.5 140.6 L458.4 140.4 M462.1 139.8 L465.8 140.2 L467.5 143.4 L469.5 147.1 L472.6 150.1 L477.1 149.8 L480.4 146.8 L481.3 150.0 L481.7 153.4 L481.9 156.7 L481.7 160.1 M466.0 165.3 L467.6 165.1 L469.1 165.2 L470.8 165.6 L471.7 167.0 M471.7 167.0 L473.3 166.4 L474.8 165.8 L475.1 164.2 L476.2 162.8 L477.9 163.9 L479.8 163.2 L480.8 161.6 L481.7 160.1 M414.2 404.1 L412.3 402.9 L410.1 403.6 L410.4 401.3 L408.7 399.7 M426.6 394.9 L426.6 393.2 L427.5 391.8 L426.4 390.7 L425.5 389.4 L425.7 387.9 L425.7 386.5 L426.1 385.2 L426.7 383.9 M426.7 383.9 L425.6 381.6 L423.9 379.8 L423.1 377.5 L422.1 375.3 L420.8 375.4 L419.6 375.4 L418.7 374.3 L417.3 374.2 L415.9 374.4 L414.9 373.5 L413.7 374.0 L412.4 374.2 M412.4 374.2 L411.8 375.5 L410.7 376.4 L409.6 377.5 L408.1 377.5 L406.8 376.8 L405.4 377.0 L404.0 377.1 L402.6 377.4 M408.7 399.7 L408.3 398.1 L407.0 397.2 L408.1 395.6 L406.6 394.2 L404.8 393.3 L402.8 393.0 L403.4 391.0 L403.9 389.0 L402.9 387.7 L403.5 386.1 L403.6 384.6 L403.7 383.2 L403.2 381.8 L402.8 380.4 L402.7 378.9 L402.6 377.4 M412.9 421.5 L410.7 420.3 L408.9 418.5 L407.5 416.2 L408.4 413.6 L405.8 413.2 L404.2 415.3 L402.0 416.0 L399.8 416.6 L397.8 416.3 L395.8 416.8 L394.0 415.6 L393.1 413.7 L392.0 412.1 L391.8 410.2 L390.2 409.2 L389.1 407.6 M408.7 399.7 L407.0 400.1 L406.2 401.5 L404.4 401.4 L403.3 400.2 L401.9 400.0 L400.6 400.2 L399.1 399.2 L397.8 400.5 M389.1 407.6 L390.5 407.1 L392.0 407.0 L393.0 405.9 L394.1 404.8 L395.4 404.1 L396.0 402.7 L396.5 401.3 L397.8 400.5 M402.6 377.4 L402.3 377.4 M402.3 377.4 L401.5 379.4 L399.3 379.5 L397.4 379.8 L395.6 379.4 L395.3 381.4 L396.9 382.6 L397.1 384.4 L397.9 385.9 L397.4 387.2 L397.0 388.5 L395.9 389.3 L395.0 390.4 L395.6 391.6 L396.4 392.7 L396.4 394.1 L396.2 395.5 M397.8 400.5 L396.9 399.4 L397.2 397.9 L395.8 397.1 L396.2 395.5 M412.4 374.2 L413.3 373.3 L414.3 372.5 L416.1 372.4 L416.1 370.7 L416.7 369.4 L416.8 368.0 L415.9 367.0 L415.6 365.6 M394.4 375.0 L396.2 376.1 L398.2 376.8 L400.2 376.9 L402.3 377.4 M415.6 365.6 L416.9 364.1 L417.5 362.1 L416.8 360.1 L417.2 358.0 L416.0 356.2 L413.9 355.9 L413.0 354.0 L411.8 352.5 M394.4 375.0 L394.4 372.9 L394.3 370.8 L393.5 368.9 L393.1 366.8 L394.1 364.9 L393.8 362.8 L394.6 360.8 L394.8 358.8 M411.8 352.5 L410.0 354.1 L408.7 356.2 L407.6 356.9 L406.8 357.9 L405.5 358.0 L404.2 358.0 L404.0 359.8 L402.9 361.2 L401.3 360.8 L399.6 360.5 L398.6 359.5 L397.2 359.6 L396.0 359.1 L394.8 358.8 M438.0 402.7 L438.2 402.6 M438.2 402.6 L442.5 401.2 L445.6 398.0 L450.2 398.1 L454.0 400.6 L456.7 402.3 M426.7 383.9 L427.9 384.5 L429.2 384.0 L430.4 383.6 L431.6 383.4 L432.9 382.8 L433.5 381.6 L435.0 382.3 L436.0 381.0 L437.3 380.5 L438.7 380.1 L438.3 378.6 L439.4 377.4 L439.9 376.2 L441.0 375.4 L442.4 375.6 L443.5 374.7 M443.5 374.7 L444.4 373.6 M415.6 365.6 L417.0 365.6 L417.8 364.5 L418.9 363.8 L420.0 363.2 L421.3 362.9 L422.4 362.3 L423.8 362.1 L425.0 362.7 L426.3 363.0 L427.6 363.1 L428.7 362.2 L429.9 361.7 L430.7 360.6 L432.1 360.5 L433.5 360.4 L434.2 359.1 M444.4 373.6 L443.1 372.3 L442.6 370.5 L443.1 368.5 L445.0 367.8 L444.1 366.3 L443.3 364.7 L444.3 363.3 L445.5 362.0 L444.0 361.3 L442.5 360.7 L441.2 361.8 L439.5 361.8 L437.9 361.5 L437.0 360.1 L435.5 359.8 L434.2 359.1 M403.3 228.1 L402.7 230.0 L402.5 232.0 L401.3 233.5 L399.7 234.7 M390.0 219.0 L389.7 221.3 L390.2 223.5 L390.5 225.8 L391.3 228.0 L390.7 229.2 L390.5 230.5 L388.9 230.5 L388.2 231.9 L388.5 234.3 L388.7 236.8 M388.7 236.8 L390.3 235.7 L392.0 234.9 L393.1 233.3 L393.4 231.4 L394.7 232.7 L396.4 233.4 L397.8 234.8 L399.7 234.7 M468.8 246.3 L469.6 244.7 L471.3 244.3 L471.4 242.6 L472.4 241.3 L473.9 240.3 L473.8 238.5 L474.3 236.9 L475.5 235.9 M475.4 251.0 L473.8 249.6 L471.8 249.1 L470.0 248.0 L468.8 246.3 M505.8 243.9 L504.0 245.9 L501.3 246.1 L499.7 248.1 L498.7 250.4 L496.2 249.5 L494.9 247.3 L492.7 246.2 L490.2 245.8 L487.7 246.6 L485.2 245.5 L482.8 245.0 L480.3 244.8 L480.3 242.3 L479.9 239.9 L479.9 237.3 L478.8 235.0 M505.8 243.9 L507.0 245.7 L506.2 247.6 L506.3 249.7 L504.8 251.2 M504.8 251.2 L502.7 251.2 L500.7 251.8 L498.6 251.7 L496.5 251.3 L493.8 252.1 L492.3 249.7 L491.9 247.4 L490.1 245.8 L489.5 248.1 L487.9 249.9 L485.6 249.9 L483.3 250.0 L481.4 251.5 L479.7 253.3 L477.5 252.1 L475.4 251.0 M478.8 235.0 L477.1 235.2 L475.5 235.9 M524.0 290.1 L524.2 291.5 L524.2 292.9 L523.1 293.9 L521.7 294.4 L520.3 294.4 L519.0 294.1 L517.9 295.0 L517.2 296.2 L516.5 297.4 L516.4 298.8 L515.1 299.3 L513.7 299.3 L513.1 300.4 L512.9 301.7 L511.5 301.5 L510.4 302.4 M524.0 290.1 L522.1 290.2 L520.3 289.5 L518.5 289.1 L516.9 288.2 L515.4 286.8 L513.9 285.5 L511.9 285.3 L509.9 285.6 M510.4 302.4 L509.3 301.6 L508.0 301.3 L506.8 300.8 L505.6 300.5 L505.1 299.1 L505.4 297.6 L506.8 297.0 L507.8 295.8 L506.9 294.3 L505.7 293.0 L503.8 292.5 L502.9 290.8 M509.9 285.6 L507.5 285.7 L505.1 286.3 M502.9 290.8 L504.0 289.9 L505.1 289.1 L505.8 287.7 L505.1 286.3 M499.2 269.7 L499.2 272.1 L498.1 274.3 L499.4 276.4 L499.6 278.8 L499.7 280.2 L500.8 281.1 L502.2 281.0 L503.3 281.9 L504.2 282.8 L505.2 283.6 L504.5 284.9 L505.1 286.3 M491.0 271.2 L493.1 271.4 L495.2 270.8 L497.3 270.6 L499.2 269.7 M480.9 285.5 L482.1 287.6 L483.1 289.7 L484.6 291.5 L486.7 292.7 M480.9 285.5 L482.0 284.7 L483.4 284.9 L483.6 283.6 L484.1 282.4 L485.4 280.4 L487.6 279.6 L488.6 278.7 L489.9 278.4 L490.4 277.2 L490.9 276.0 L490.5 273.6 L491.0 271.2 M486.7 292.7 L488.4 291.1 L489.8 289.1 L492.2 288.9 L494.3 287.7 L496.6 287.9 L499.0 288.1 L500.5 290.0 L502.9 290.8 M509.6 202.0 L507.7 200.8 L506.9 198.8 L504.5 198.6 L503.5 196.4 L501.5 196.9 L499.4 196.9 L497.5 197.7 L495.4 197.6 M498.4 170.2 L497.7 171.9 L496.4 173.1 L494.7 173.8 L493.2 174.7 M501.0 169.4 L499.6 169.5 L498.4 170.2 M495.4 197.6 L496.4 195.9 L497.8 194.4 L497.5 192.4 L496.7 190.6 L495.2 189.1 L494.9 186.9 L492.8 187.2 L490.8 186.5 L490.6 184.8 L489.6 183.4 L490.0 181.8 L490.7 180.3 L491.4 179.0 L492.0 177.6 L492.5 176.1 L493.2 174.7 M272.5 260.3 L272.9 262.1 L272.4 263.9 L271.8 265.7 L272.4 267.5 L273.6 269.5 L273.1 271.7 L275.1 272.3 L277.1 272.9 M277.0 274.1 L277.2 273.4 M277.1 272.9 L277.2 273.4 M302.0 275.2 L301.1 274.2 L299.7 274.0 L298.5 273.4 L297.2 273.9 L296.0 274.8 L295.4 276.2 L293.7 276.7 L292.5 275.6 M302.0 275.2 L299.8 275.0 L298.2 273.4 L297.6 271.4 L296.3 269.7 M296.3 269.7 L296.1 271.7 L296.1 273.8 L294.8 275.6 L292.5 275.6 M302.0 275.2 L303.7 276.2 M287.4 281.3 L288.8 280.1 L288.1 278.3 M287.4 281.3 L289.6 281.9 M289.6 281.9 L290.8 280.1 L292.8 279.7 L294.3 278.4 L296.1 277.7 L298.1 278.3 L300.3 278.7 L301.5 276.7 L303.7 276.2 M292.5 275.6 L291.6 276.5 L290.6 277.3 L289.0 277.0 L288.1 278.3 M673.0 293.5 L671.4 295.5 L670.5 297.8 L668.8 297.6 L668.3 299.2 L667.6 300.4 L667.6 301.7 M673.0 293.5 L675.3 294.5 L677.2 292.9 L678.9 294.2 L680.8 295.1 L683.3 295.4 L685.4 296.6 L685.9 299.0 L685.6 301.4 M667.6 301.7 L668.9 302.8 L670.6 303.2 L672.3 304.0 L673.9 303.3 L675.9 303.2 L677.9 302.8 L678.9 304.5 L679.7 306.3 M685.6 301.4 L684.1 302.9 L683.6 305.0 L682.0 306.6 L679.7 306.3 M689.3 300.6 L687.6 301.9 L685.6 301.4 M689.0 286.2 L687.5 284.3 L685.1 283.6 L683.8 283.1 L683.2 281.8 L681.9 281.4 L680.7 282.2 L678.5 283.0 L676.8 284.6 L674.5 285.5 L673.0 287.4 M673.0 287.4 L672.9 289.0 L672.3 290.5 L672.7 292.0 L673.0 293.5 M666.0 302.6 L667.6 301.7 M668.1 314.1 L667.2 312.3 L668.8 311.0 L668.8 309.3 L667.4 308.3 L667.6 306.3 L665.7 305.7 L666.1 304.1 L666.0 302.6 M668.1 314.1 L668.2 315.7 L669.7 316.3 L670.1 317.6 L670.9 318.7 L672.2 319.0 L673.6 318.9 L674.7 317.3 L676.3 318.2 M677.7 315.8 L676.6 314.6 L675.4 313.6 L675.7 312.0 L676.2 310.5 L677.5 309.9 L678.6 308.9 L679.8 307.9 L679.7 306.3 M621.7 214.8 L622.7 214.5 M630.3 213.2 L628.3 213.7 L626.6 214.8 L624.6 215.0 L622.7 214.5 M630.3 213.2 L632.0 213.4 L633.3 214.7 L634.9 215.2 L636.2 216.4 L637.3 217.9 L637.1 219.8 L634.8 220.7 L635.7 223.1 L636.1 224.6 L636.2 226.2 L635.1 227.3 L634.1 228.5 L633.8 230.2 L634.8 231.6 L634.0 233.1 L632.5 233.9 M617.5 219.9 L619.5 221.1 L620.4 223.1 L620.0 224.8 L618.9 226.1 L620.8 225.7 L622.1 227.1 L624.4 227.4 L626.0 229.1 L626.8 231.3 L628.9 232.4 M617.5 219.9 L618.3 218.2 L620.0 217.6 L621.7 216.8 L621.7 214.8 M628.9 232.4 L630.8 233.0 L632.5 233.9 M645.3 228.1 L644.1 230.1 L644.5 232.5 L642.3 233.1 L640.5 234.5 M640.5 234.5 L639.4 236.0 L637.5 236.2 L635.8 235.9 L634.2 235.4 M630.3 213.2 L631.5 211.6 L633.3 210.9 M632.5 233.9 L634.2 235.4 M502.0 219.3 L501.1 221.3 L499.2 222.0 L497.2 222.0 L495.3 221.6 L493.3 222.3 L491.3 221.9 L489.8 223.3 L489.0 225.1 L488.1 226.8 L486.6 227.9 L485.6 229.5 L485.1 231.3 L484.3 233.2 L482.6 234.3 L480.4 233.4 L478.8 235.0 M505.8 243.9 L507.2 242.6 L507.4 240.6 L509.1 240.0 L510.9 239.8 L511.4 237.8 L513.3 237.1 L512.9 235.3 L512.8 233.5 M502.0 219.3 L503.3 218.5 L504.8 218.5 L506.3 218.0 L507.7 218.8 M512.8 233.5 L513.0 231.1 L513.9 228.9 L514.1 227.4 L513.2 226.2 L514.6 225.7 L515.3 224.4 L514.0 224.0 L512.6 224.2 L511.9 223.0 L511.3 221.9 L510.2 220.6 L508.6 221.3 L508.5 219.9 L507.7 218.8 M481.7 160.1 L482.9 159.2 L484.3 158.7 L485.8 158.7 L487.3 158.6 L488.8 158.5 L490.3 159.0 L491.4 160.1 L492.4 161.3 L492.5 162.7 L493.3 163.9 L494.1 165.0 L495.1 165.9 L495.5 167.3 L496.4 168.3 L497.4 169.3 L498.4 170.2 M639.3 169.6 L638.7 173.1 M653.0 163.6 L654.5 164.3 L659.0 169.5 M659.0 169.5 L658.3 170.7 L657.0 171.2 L656.0 172.0 L654.7 172.4 L654.5 173.7 L654.4 175.0 L653.8 176.2 L653.4 177.4 M653.4 177.4 L651.3 176.7 L650.0 178.4 L648.3 178.4 L646.6 178.0 L645.2 176.6 L644.4 174.9 L642.6 174.5 L640.7 174.5 M640.7 174.5 L638.7 173.1 M666.9 171.6 L666.0 172.6 L664.8 173.2 L663.9 172.1 L662.7 171.6 L661.3 169.7 L659.0 169.5 M668.6 181.6 L668.6 183.2 L668.7 184.7 L669.5 186.2 L669.0 187.8 L667.7 186.5 L665.8 186.5 L663.7 186.6 L662.9 188.5 M662.9 188.5 L661.0 188.0 L659.2 187.2 M659.2 187.2 L658.8 185.8 L657.7 184.8 L657.2 183.2 L655.7 182.7 L654.5 181.7 L653.5 180.5 L652.3 179.0 L653.4 177.4 M646.0 193.7 L648.0 193.6 L649.8 192.7 L651.1 192.7 L652.3 192.2 L652.0 190.9 L652.2 189.7 L653.9 188.7 L655.4 187.4 L657.4 188.4 L659.2 187.2 M645.0 193.2 L643.7 192.7 L642.6 191.8 L641.6 190.7 L640.1 190.3 L639.4 189.1 L638.7 187.8 L638.5 186.4 L638.3 184.9 L638.8 183.3 L640.3 182.7 L639.1 181.4 L639.8 179.8 L639.1 178.4 L638.7 176.9 L639.7 175.8 L640.7 174.5 M637.4 194.2 L636.0 192.6 L634.6 191.0 L633.3 191.3 L632.0 190.9 L631.8 189.6 L631.3 188.4 L629.0 189.0 L626.6 188.6 L624.8 187.1 L623.5 185.1 M623.5 185.1 L623.6 183.5 L624.0 182.0 L625.5 181.4 L627.0 181.2 L628.4 181.0 L629.7 181.5 L630.8 180.7 L632.1 180.3 L633.4 179.4 L632.9 177.9 L632.8 176.1 L634.6 176.0 L635.6 175.1 L636.9 174.9 L637.8 174.0 L638.7 173.1 M669.3 196.9 L669.2 198.8 L668.1 200.3 L667.3 202.1 L667.3 203.9 L665.1 204.4 L663.3 203.1 L662.5 205.3 L660.1 205.6 M669.3 196.9 L669.6 194.9 L668.0 193.9 L666.5 193.3 L665.0 192.7 M665.0 192.7 L664.0 194.7 L665.3 196.6 L666.7 197.9 L667.9 199.5 L666.7 201.4 L667.1 203.6 L665.6 205.4 L663.3 205.3 L662.1 206.6 L660.5 207.3 L658.8 207.2 L657.1 207.7 L655.4 208.0 L653.6 208.4 L652.4 206.9 L650.6 206.6 M660.1 205.6 L658.9 204.9 L658.0 203.8 L656.7 205.0 L655.2 204.3 L654.0 204.8 L652.8 205.4 L651.6 205.9 L650.6 206.6 M679.7 179.8 L679.6 181.3 L680.3 182.7 L678.7 183.5 L678.8 185.3 L678.9 186.6 L679.1 188.0 L679.0 189.4 L679.5 190.8 L678.5 191.8 L677.7 192.9 L677.4 194.3 L676.7 195.6 L676.3 197.3 L674.8 198.1 L674.7 199.8 L675.9 201.1 M675.9 201.1 L673.9 200.3 L671.9 200.1 L670.0 199.0 L669.3 196.9 M662.9 188.5 L664.3 188.7 L665.2 189.9 L665.6 191.3 L665.0 192.7 M649.3 207.3 L650.6 206.6 M653.3 217.3 L655.0 216.4 L657.0 216.5 L659.0 216.3 L660.6 217.5 L661.7 216.0 L662.9 214.6 L664.4 213.5 L665.4 212.0 M665.4 212.0 L663.1 211.5 L661.9 209.5 L660.9 207.6 L660.1 205.6 M692.3 231.2 L691.3 229.0 L692.1 226.6 L690.5 224.9 L689.7 222.7 L687.8 221.4 L686.6 219.5 L685.4 219.2 L684.1 219.2 L683.3 218.1 L682.9 216.9 M680.1 229.1 L680.0 227.4 L679.7 225.8 M679.7 225.8 L680.8 223.5 L682.6 221.8 L681.8 220.7 L681.7 219.3 L682.6 218.3 L682.9 216.9 M682.9 216.9 L683.0 215.3 L682.5 213.8 L684.1 213.0 L684.7 211.4 L685.4 210.0 M675.9 201.1 L678.2 201.6 L680.5 201.1 L681.0 203.1 M621.1 289.6 L621.8 291.0 L620.8 292.3 L620.3 293.7 L618.8 294.1 M621.7 289.3 L621.1 289.6 M628.8 308.7 L629.8 307.7 L629.8 306.3 L629.6 305.0 L628.9 303.9 L629.6 302.8 L630.7 301.9 L630.1 300.7 L630.4 299.3 M628.8 308.7 L627.6 307.2 L626.1 306.0 L624.5 307.0 L622.6 307.5 M630.4 299.3 L630.0 297.3 L628.0 296.7 L626.8 295.1 L627.4 293.2 L625.7 292.7 L624.1 291.9 L622.8 290.7 L621.7 289.3 M622.6 307.5 L620.8 306.8 L618.9 307.2 L618.2 305.5 L616.9 304.2 M616.9 304.2 L616.9 302.2 L616.9 300.2 M616.9 300.2 L617.4 298.7 L618.5 297.4 L619.2 295.8 L618.8 294.1 M622.6 307.5 L622.7 309.2 L622.5 310.8 L621.5 312.0 L620.2 313.0 L618.8 313.6 L617.8 314.7 L616.1 315.2 L615.8 316.9 M616.9 304.2 L616.6 306.5 L614.4 307.4 L612.3 307.2 L610.3 307.4 M610.3 307.4 L608.8 309.4 L609.3 311.8 M615.8 316.9 L614.6 316.3 L613.6 315.5 L612.3 315.8 L611.0 315.9 M611.0 315.9 L609.9 313.9 L609.3 311.8 M578.5 311.7 L578.3 313.3 L578.5 314.9 L578.9 316.6 L578.0 318.1 L579.1 319.3 L580.2 320.6 L581.9 320.7 L583.5 321.2 M578.5 311.7 L579.7 310.5 L580.9 309.3 L583.3 309.9 L583.9 307.5 M587.2 317.3 L588.3 315.6 L588.6 313.6 L587.9 311.7 L588.2 309.7 M583.5 321.2 L582.8 319.4 L584.4 318.3 L585.7 317.5 L587.2 317.3 M583.9 307.5 L585.3 307.5 M588.2 309.7 L586.9 308.5 L585.3 307.5 M599.3 308.7 L597.9 309.4 L596.5 308.6 L595.0 308.5 L593.7 309.1 M599.3 308.7 L599.8 310.0 L601.1 310.6 L601.7 311.7 L602.0 313.0 M601.7 313.3 L602.0 313.0 M601.7 313.3 L600.4 314.0 L598.8 314.0 L597.4 314.7 L595.9 314.8 M595.9 314.8 L595.7 313.2 L594.8 311.9 L594.6 310.3 L593.7 309.1 M604.9 302.6 L606.9 302.7 L608.2 304.3 L609.0 306.0 L610.3 307.4 M604.9 302.6 L603.0 303.7 L600.9 304.2 L600.6 306.3 L599.6 308.2 M609.3 311.8 L607.5 312.2 L605.8 313.0 L603.9 312.3 L602.0 313.0 M599.6 308.2 L599.3 308.7 M588.2 309.7 L590.3 308.4 L592.7 308.5 M592.7 308.5 L593.7 309.1 M594.8 317.8 L595.6 316.4 L595.9 314.8 M594.8 317.8 L593.2 316.2 L591.1 315.5 L589.4 316.9 L587.2 317.3 M546.3 341.6 L545.8 343.1 L546.2 344.7 L546.8 346.4 L548.6 346.8 L549.4 348.0 L550.2 349.1 L551.0 350.4 L551.2 351.8 L550.6 353.2 L549.4 354.1 L548.5 355.3 L547.3 356.2 L546.2 357.2 L545.9 358.8 L545.3 360.2 L545.6 361.7 M560.3 343.1 L560.1 342.4 M546.3 341.6 L548.1 342.9 L548.8 345.1 L550.4 346.7 L552.7 346.7 L553.2 344.5 L555.0 343.1 L557.2 342.6 L558.8 341.1 M558.8 341.1 L560.1 342.4 M531.1 293.8 L531.4 296.0 L531.0 298.1 L531.2 300.2 L531.2 302.3 L530.4 303.5 L530.8 304.9 L531.5 306.0 L532.1 307.2 L530.6 307.1 L529.4 307.8 L528.2 308.8 L528.2 310.3 M531.1 293.8 L531.7 295.2 L532.3 296.6 L533.3 297.8 L534.8 298.1 L533.7 299.6 L534.8 301.0 L533.7 302.3 L534.4 303.8 L535.6 304.5 L536.9 305.0 L538.2 305.2 L539.5 305.1 L541.0 305.5 L541.9 306.6 L543.2 305.7 L544.7 306.1 M544.7 306.1 L545.4 307.4 M545.4 307.4 L544.0 307.3 L542.7 306.8 L541.3 307.3 L539.9 307.1 L539.5 308.6 L538.9 310.0 L537.7 311.4 L536.0 311.0 M528.2 310.3 L530.1 310.9 L532.1 311.0 L534.0 310.6 L536.0 311.0 M545.8 320.4 L545.9 320.3 M547.3 308.4 L546.0 309.5 L544.9 310.8 L545.0 312.5 L544.3 314.1 L545.5 315.3 L545.8 317.0 L547.0 318.6 L545.9 320.3 M538.5 317.4 L538.4 315.6 L537.3 314.1 L535.8 312.9 L536.0 311.0 M547.3 308.4 L545.4 307.4 M563.6 298.8 L564.4 300.1 L565.3 301.4 L565.6 303.0 L566.7 304.3 L567.8 305.6 L568.2 307.3 L569.5 308.4 L571.2 308.7 M563.6 298.8 L562.8 301.0 L561.5 302.9 M561.5 302.9 L562.9 304.6 L564.5 306.2 L566.4 305.1 L568.5 304.3 L567.2 305.8 L566.4 307.7 L567.4 309.5 L567.7 311.5 M567.7 311.5 L569.0 311.0 L570.1 310.4 M570.1 310.4 L571.2 308.7 M575.8 312.6 L574.4 312.0 L573.1 311.2 L571.3 312.0 L570.1 310.4 M571.5 322.1 L571.2 320.7 L571.9 319.4 L572.9 318.5 L573.9 317.5 L575.0 316.0 L576.8 315.8 L576.4 314.1 L575.8 312.6 M571.5 322.1 L570.2 322.4 L568.8 322.4 L568.4 321.0 L567.3 320.1 L567.2 317.8 L566.6 315.5 M566.6 315.5 L567.4 313.5 L567.7 311.5 M554.2 307.4 L555.1 309.2 M554.2 307.4 L556.5 307.5 L558.8 306.8 L559.7 304.6 L561.5 302.9 M566.6 315.5 L564.2 315.8 M555.1 309.2 L556.6 309.7 L558.0 309.7 L559.5 310.2 L560.8 310.9 L562.0 311.9 L562.7 313.2 L563.8 314.3 L564.2 315.8 M583.5 321.2 L582.8 323.3 M578.4 311.7 L577.3 312.7 L575.8 312.6 M571.5 322.1 L572.0 323.6 M578.5 311.7 L578.4 311.7 M572.0 323.6 L573.7 323.9 M582.8 323.3 L581.6 322.4 L580.1 322.6 L578.6 323.3 L578.3 324.9 L576.0 324.3 L573.7 323.9 M533.3 328.3 L534.3 329.6 L534.9 331.1 L536.0 332.4 L537.8 332.6 L538.3 334.1 L539.7 335.0 L541.0 335.9 L541.8 337.3 M533.3 328.3 L532.1 330.0 M532.1 330.0 L531.3 331.5 L531.3 333.2 L531.6 334.9 L531.0 336.6 L532.5 337.5 L534.3 337.7 L536.2 338.2 L536.6 340.2 M541.8 337.3 L540.2 337.8 L538.5 337.6 L537.1 338.5 L536.6 340.2 M533.7 325.5 L533.9 326.9 L533.3 328.3 M543.1 324.8 L543.6 327.1 L544.1 329.3 M544.1 329.3 L542.8 331.1 L542.9 333.3 L543.0 335.4 L541.9 337.2 M541.9 337.2 L541.8 337.3 M544.0 362.9 L543.8 362.2 L543.3 360.4 L542.3 359.0 L541.7 357.2 L542.4 355.5 L541.8 353.6 L540.9 351.8 L540.1 350.0 L540.5 348.0 L541.0 346.1 L539.0 345.7 L537.2 344.8 L535.5 343.6 L535.0 341.5 M546.3 341.6 L545.2 339.5 L543.4 338.1 M543.4 338.1 L541.9 337.2 M535.0 341.5 L536.6 340.2 M535.0 341.5 L533.6 341.2 L532.5 342.1 L531.0 342.5 L530.2 341.2 M532.1 330.0 L530.5 331.3 M530.5 331.3 L530.2 332.6 L529.4 333.7 L530.1 335.0 L529.3 336.2 L530.0 337.4 L529.6 338.7 L529.4 340.1 L530.2 341.2 M536.9 367.3 L536.6 367.1 L535.4 366.3 L533.9 366.2 L532.6 365.5 L532.7 363.6 L531.6 362.1 L529.8 361.6 L528.1 361.2 L526.4 361.5 L525.0 360.5 L523.6 361.3 L521.9 361.2 M521.9 361.2 L520.6 360.4 L519.8 359.1 L519.9 357.5 L519.2 356.1 M519.2 356.1 L517.9 354.2 L518.9 352.0 L519.2 349.9 L520.5 348.2 L521.6 346.1 L521.4 343.7 L523.6 342.9 L525.9 342.4 M525.9 342.4 L528.2 342.5 L530.2 341.2 M471.7 167.0 L471.5 168.7 L471.7 170.3 L472.2 171.9 L472.8 173.5 L474.8 172.8 L476.0 174.6 L477.2 175.7 L478.6 176.7 M490.7 176.0 L491.8 175.0 L493.2 174.7 M490.7 176.0 L489.6 177.1 L488.1 177.7 L486.5 177.5 L485.0 177.3 M485.0 177.3 L483.2 177.3 L481.9 176.2 L480.3 177.2 L478.6 176.7 M389.1 407.6 L385.1 404.6 L381.8 400.7 L376.4 402.1 L372.0 398.5 L368.7 393.8 L368.4 393.7 M396.2 395.5 L394.4 394.8 L392.5 394.2 L390.6 394.6 L388.7 394.7 L386.7 394.2 L384.8 393.8 L383.4 392.4 L382.3 390.6 L380.5 389.8 L378.5 389.9 L377.1 388.5 L375.9 386.9 L374.0 385.7 L372.9 383.6 L370.2 382.9 L368.7 385.2 M366.8 392.0 L367.2 390.7 L368.7 385.2 M291.2 301.7 L291.1 301.5 L289.3 299.8 M394.4 375.0 L393.7 376.7 L394.5 378.4 L392.9 379.2 L392.2 380.8 L391.1 382.0 L390.2 383.2 L389.2 384.5 L388.4 385.8 L387.4 384.5 L386.1 383.6 L384.5 383.2 L383.0 382.7 L381.8 381.3 L380.0 381.7 L378.7 380.6 L377.9 379.3 M377.9 379.3 L376.0 379.5 L374.2 379.8 L374.2 381.6 L374.1 383.4 L373.3 384.9 L371.8 385.6 L370.4 384.6 L368.7 385.2 M441.9 399.1 L443.4 398.5 L445.0 399.1 L446.4 398.3 L447.1 396.8 L448.5 396.4 L449.9 396.4 L451.1 395.2 L452.7 395.7 M441.9 399.1 L443.3 397.5 L444.7 395.9 L446.5 394.5 L447.1 392.3 L447.3 391.0 L446.8 389.8 L445.8 388.9 L444.5 388.6 L445.2 386.3 L444.7 384.1 M444.7 384.1 L445.8 385.5 L447.3 386.5 L448.8 387.6 L449.8 389.1 L449.0 391.0 L449.5 393.1 L450.4 395.2 L452.7 395.7 M438.2 402.6 L439.5 401.6 L439.2 400.0 L440.5 399.4 L441.9 399.1 M443.5 374.7 L444.5 376.9 L445.2 379.3 L444.2 380.2 L443.6 381.5 L443.9 382.9 L444.7 384.1 M444.4 373.6 L446.0 373.9 L447.3 373.1 M463.5 386.1 L462.9 385.8 L460.5 383.9 L461.6 381.0 L459.6 380.3 L458.2 378.8 L456.2 378.2 L454.5 377.0 L452.9 375.4 L451.7 373.6 L449.5 373.3 L447.3 373.1 M460.1 391.7 L459.6 391.6 L457.4 391.3 L455.7 392.8 L454.2 394.3 L452.7 395.7 M440.0 342.3 L441.6 343.0 L442.9 344.1 L443.8 345.7 L445.2 346.7 L446.8 345.0 L448.7 346.4 L450.4 346.9 L452.0 347.5 M440.0 342.3 L437.5 342.4 L435.5 341.0 L433.3 342.0 L431.7 343.8 M431.7 343.8 L433.1 344.8 L434.2 346.1 L435.4 348.0 L433.7 349.5 L433.5 351.2 L432.8 352.7 L433.4 354.3 L434.4 355.6 M434.4 355.6 L435.8 355.0 L436.3 353.6 L437.6 353.2 L438.6 352.1 L440.0 352.0 L441.3 352.5 L442.6 353.0 L443.8 353.6 L444.5 352.2 L446.0 352.2 L446.8 351.0 L448.0 350.4 L449.2 351.1 L450.4 351.8 L451.8 351.3 L453.2 351.6 M452.0 347.5 L452.5 349.6 L453.2 351.6 M413.2 343.1 L412.9 345.5 L413.0 347.9 L412.3 348.9 L411.5 349.9 L412.4 351.1 L411.8 352.5 M430.1 342.4 L431.7 343.8 M430.1 342.4 L427.8 341.9 L425.7 343.2 L424.0 341.7 L421.6 341.5 L419.4 341.6 L417.4 342.4 L415.5 343.9 L413.2 343.1 M434.2 359.1 L433.2 357.3 L434.4 355.6 M414.5 312.3 L413.1 310.6 L411.4 309.2 L411.1 306.8 L409.1 305.5 M414.5 312.3 L415.0 314.7 L414.0 316.9 L413.3 319.3 L411.4 320.8 M408.3 322.9 L407.1 321.9 L405.5 321.8 L404.4 320.5 L404.7 318.8 L404.3 317.1 L404.1 315.4 L402.3 315.2 L400.6 315.2 L398.7 314.7 L398.5 312.8 L397.5 311.5 L396.0 310.8 L396.2 309.2 L396.1 307.6 L397.1 306.3 L397.6 304.7 M408.3 322.9 L410.2 322.3 L411.4 320.8 M409.1 305.5 L408.2 303.4 L406.2 302.5 L404.1 302.2 L402.1 302.9 M397.6 304.7 L399.7 303.3 L402.1 302.9 M495.3 309.4 L495.3 311.9 L496.4 314.1 L495.0 316.0 L494.0 318.2 M495.3 309.4 L493.4 308.6 L491.6 307.8 L490.6 305.8 L488.7 304.8 M488.7 304.8 L486.8 305.8 L484.8 305.9 L484.2 308.1 L482.2 309.0 M494.0 318.2 L493.8 319.9 L493.3 321.6 L493.1 323.5 L491.5 324.5 L490.2 322.7 L488.1 323.2 L486.5 324.4 L484.6 324.5 M484.6 324.5 L483.5 323.6 L482.4 322.7 L481.0 322.1 L479.5 322.1 M479.5 322.1 L480.4 320.6 L480.3 318.9 L481.2 317.4 L481.2 315.7 L481.5 314.0 L481.3 312.3 L481.4 310.6 L482.2 309.0 M386.9 273.6 L388.6 273.7 L390.2 273.1 L391.9 273.2 L393.5 272.7 M386.9 273.6 L385.5 271.9 L383.5 270.8 L382.9 268.5 L384.1 266.4 M384.1 266.4 L385.8 267.5 L387.7 267.6 L389.8 267.0 L391.5 268.3 M391.5 268.3 L393.5 269.5 L394.2 271.6 M394.2 271.6 L393.5 272.7 M374.0 274.4 L375.8 275.1 L375.6 277.0 L376.2 278.5 L377.7 279.3 L379.3 278.9 L380.8 279.8 L382.0 280.8 L383.4 281.5 M375.5 268.7 L375.5 270.2 L375.4 271.7 L374.6 273.0 L374.0 274.4 M383.4 281.5 L384.2 281.2 M384.2 281.2 L385.6 281.1 L386.9 280.7 L387.9 279.7 L388.8 278.6 L388.7 277.3 L388.2 276.0 L387.3 275.0 L386.9 273.6 M375.5 268.7 L377.2 267.3 L379.4 266.9 L380.5 265.0 L382.3 263.7 M382.3 263.7 L383.2 265.0 L384.1 266.4 M370.9 265.6 L371.0 263.5 L369.9 261.7 L368.4 261.3 L367.0 262.2 L366.9 260.7 L366.7 259.2 M370.9 265.6 L369.2 266.1 L367.4 265.7 L367.0 267.5 L365.5 268.5 L365.5 270.5 L364.1 272.0 L362.3 271.3 L360.4 271.8 M366.7 259.2 L365.5 260.0 L364.6 261.1 L363.3 261.7 L361.9 261.2 L360.6 261.8 L359.2 261.5 L358.0 260.8 L356.7 260.4 M356.7 260.4 L357.4 262.5 L357.2 264.7 L356.6 266.8 L355.6 268.7 M355.6 268.7 L357.7 269.3 L358.0 271.4 M360.4 271.8 L358.0 271.4 M371.0 275.9 L369.6 277.2 L367.7 276.9 L366.4 275.9 L365.5 274.4 L364.2 273.8 L363.0 273.0 L361.9 271.9 L360.4 271.8 M374.0 274.4 L372.5 275.1 L371.0 275.9 M375.5 268.7 L374.3 267.9 L373.5 266.7 L372.0 266.5 L370.9 265.6 M354.3 256.2 L355.1 257.6 L354.3 259.0 L355.2 260.2 L356.7 260.4 M342.8 247.2 L344.9 247.6 L345.9 249.4 L347.8 250.1 L349.8 250.1 L352.0 251.0 L351.7 253.3 L353.3 254.5 L354.3 256.2 M342.8 247.2 L342.2 248.4 L341.3 249.3 L340.8 250.5 L340.2 251.6 L341.4 252.5 L341.7 254.0 L341.2 255.3 L340.9 256.7 L340.9 259.1 L342.0 261.3 L342.4 263.7 L343.0 266.1 M343.0 266.1 L344.1 266.9 L345.4 267.3 L345.8 269.0 L347.5 268.9 L348.9 268.7 L350.3 268.4 L351.7 268.9 L352.8 269.8 M352.8 269.8 L354.3 269.5 L355.6 268.7 M303.2 259.9 L303.6 262.1 L304.2 264.2 L303.4 266.2 L302.8 268.3 L303.2 270.4 L304.1 272.4 L303.5 274.6 L305.0 276.5 M303.2 259.9 L303.2 259.9 M305.0 276.5 L306.3 278.0 L308.1 278.9 M303.2 259.9 L304.0 261.2 L304.2 262.7 L305.7 263.3 L307.2 262.7 L308.6 262.3 L309.6 263.3 L310.8 263.8 L311.6 264.9 L313.4 266.5 L314.9 268.5 L316.2 268.6 L317.2 269.4 L318.4 270.1 L318.9 271.3 M318.9 271.3 L319.7 273.6 L317.6 274.7 L316.1 275.7 L314.9 277.2 L313.2 277.4 L311.4 277.7 L309.5 277.8 L308.1 278.9 M371.0 275.9 L372.2 277.5 L370.7 278.8 L370.5 280.3 L370.4 281.7 L369.6 283.0 L369.4 284.5 L368.1 285.4 L367.5 286.8 M358.1 281.3 L357.5 280.0 L356.8 278.9 L357.6 277.8 L357.7 276.3 L357.9 275.0 L358.6 273.9 L357.9 272.8 L358.0 271.4 M358.1 281.3 L358.4 281.8 M358.4 281.8 L359.8 280.8 L361.2 281.9 L362.1 283.0 L363.2 283.8 L364.0 284.9 L365.2 285.6 L366.5 285.8 L367.5 286.8 M379.1 289.5 L379.3 287.0 L381.2 285.4 L381.4 284.2 L381.2 282.9 L381.9 281.5 L383.4 281.5 M379.1 289.5 L377.6 288.7 L376.0 289.3 L375.2 290.7 L375.1 292.3 L373.9 292.6 L372.6 292.7 L371.7 293.6 L370.5 294.0 M367.5 286.8 L367.2 289.2 L366.5 291.4 L368.8 292.3 L370.5 294.0 M445.5 216.4 L446.9 216.6 L448.0 215.7 L449.2 215.2 L450.5 215.2 L451.1 214.0 L452.0 213.0 L453.6 213.2 L454.6 212.0 M426.4 204.1 L428.0 203.4 L429.6 202.6 L431.1 201.8 L432.4 200.6 L432.9 198.8 L432.7 197.0 L433.7 195.5 L435.2 194.4 M439.6 194.6 L437.4 194.3 L435.2 194.4 M439.6 194.6 L441.3 195.7 L442.6 197.3 L444.0 198.9 L446.1 199.3 L447.9 200.3 L449.0 202.0 L450.7 203.3 L452.6 203.9 M452.6 203.9 L453.1 206.0 L454.1 207.9 L453.7 210.0 L454.6 212.0 M296.7 302.7 L296.4 301.3 L295.9 299.1 L295.4 296.8 L294.9 294.6 L295.6 293.2 L297.1 292.7 L297.9 291.6 L298.7 290.4 L298.7 288.5 L296.8 288.2 L296.1 286.9 L295.9 285.5 M297.0 302.8 L297.1 302.0 L297.7 300.6 L298.5 299.2 L299.5 298.0 L298.8 296.6 L298.5 295.0 L297.6 293.3 L299.0 291.9 L300.8 292.2 L301.7 290.6 L302.7 289.4 L303.6 288.2 L304.9 287.3 L306.5 287.2 L308.1 286.4 L308.4 284.7 M295.9 285.5 L297.7 286.3 L299.3 287.6 L301.1 288.2 L303.0 288.8 L304.7 287.0 L307.1 287.0 L308.5 285.0 L307.8 282.6 M308.4 284.7 L307.8 282.6 M287.1 281.6 L287.4 281.3 M289.6 281.9 L291.4 282.5 L293.3 282.8 L294.3 284.4 L295.9 285.5 M308.1 278.9 L307.3 280.7 L307.8 282.6 M305.0 276.5 L303.7 276.2 M272.9 259.8 L274.2 261.2 L274.2 263.1 L275.9 263.6 L277.7 263.9 M277.1 272.9 L278.7 272.2 L280.1 271.1 L281.5 269.9 L281.6 268.1 M277.7 263.9 L278.7 264.9 L279.6 266.0 L281.4 266.3 L281.6 268.1 M288.1 278.3 L287.3 276.5 L285.6 275.5 L285.7 273.5 L287.2 272.1 M277.2 273.4 L279.2 273.5 L281.1 272.6 L282.8 271.7 L284.6 270.9 M287.2 272.1 L286.1 271.0 L284.6 270.9 M279.9 252.5 L280.6 253.5 L281.3 254.7 L282.8 254.8 L283.5 256.1 L284.9 256.9 L286.1 257.8 L284.8 259.1 L285.4 260.9 M285.4 260.9 L284.6 262.8 L285.5 264.7 M277.7 263.9 L279.0 265.1 L280.8 265.4 L282.5 266.1 L284.3 265.7 M285.5 264.7 L284.3 265.7 M281.6 268.1 L282.7 268.6 M284.3 265.7 L283.6 267.2 L282.7 268.6 M284.6 270.9 L284.2 269.3 L282.7 268.6 M617.5 219.9 L615.7 220.5 L613.7 220.5 L612.5 219.2 L610.9 218.7 L610.5 220.3 L610.0 221.9 M610.0 221.9 L610.0 222.1 M610.0 222.1 L609.4 223.9 L609.8 225.8 M628.9 232.4 L627.4 232.5 L626.2 233.3 L626.7 234.7 L626.1 236.1 L625.1 237.0 L624.0 237.8 L622.6 237.8 L621.5 236.8 L620.1 236.1 L618.6 236.6 L617.7 235.3 L617.8 233.8 L616.7 234.5 L615.7 235.3 L614.3 235.6 L613.1 234.8 M609.8 225.8 L611.5 227.6 L612.4 229.9 L614.1 230.5 L614.9 232.0 L613.8 233.3 L613.1 234.8 M563.0 262.9 L564.3 264.2 L564.1 265.9 L563.2 267.3 L561.6 267.8 M557.7 260.8 L558.5 262.2 L560.0 262.8 L561.5 263.7 L563.0 262.9 M557.7 260.8 L556.2 261.3 L554.9 262.1 L554.6 263.7 L553.2 264.6 L551.7 264.4 L550.2 264.2 L548.9 264.8 L547.3 264.8 M561.6 267.8 L559.6 268.9 L558.1 270.7 L556.1 269.6 L553.9 269.1 L552.0 268.5 L550.4 267.3 L548.6 266.4 L547.3 264.8 M592.5 209.7 L591.7 211.2 L591.0 212.8 L592.3 214.5 L591.3 216.3 M592.5 209.7 L591.1 209.9 L589.6 209.6 L588.2 209.3 L587.0 208.3 L585.5 208.4 L584.1 208.0 L582.7 208.4 L581.3 208.9 L579.4 208.8 L578.5 207.2 L576.5 206.7 L575.6 208.6 L574.3 209.4 L572.8 209.9 L571.2 209.7 L570.0 208.6 M591.3 216.3 L589.3 215.5 L588.1 217.3 L586.3 217.9 L585.5 219.5 L584.2 220.6 L583.2 222.0 L581.5 222.5 L580.0 223.1 M580.0 223.1 L578.8 221.1 L577.2 219.4 L575.0 218.5 L573.2 217.1 L572.4 214.8 L570.5 213.3 L570.2 211.0 L570.0 208.6 M557.7 260.8 L558.6 259.7 L558.7 258.2 L557.5 257.3 L557.5 255.8 M547.3 264.8 L546.2 264.9 M546.2 264.7 L546.2 264.9 M546.2 264.7 L545.6 262.6 L546.0 260.5 L545.1 258.5 L545.7 256.4 L548.1 256.1 L549.3 254.0 L551.4 253.7 L553.5 253.7 M557.5 255.8 L557.2 254.4 L556.2 253.4 L555.0 254.4 L553.5 253.7 M552.8 249.1 L552.8 251.5 L553.5 253.7 M557.5 255.8 L558.7 254.5 L560.4 254.6 L561.5 255.7 L562.6 256.8 L564.0 256.2 L564.0 254.6 L564.9 253.6 L566.2 253.2 M557.3 238.2 L556.9 240.2 L555.5 241.6 L553.6 241.7 L551.7 242.3 L551.6 244.0 L551.6 245.8 L551.3 247.7 L552.8 249.1 M557.3 238.2 L557.6 240.1 L557.8 242.0 L559.6 242.9 L561.5 242.7 L563.3 242.8 L564.4 241.4 L565.5 239.7 L567.4 240.6 M566.2 253.2 L565.6 251.6 L565.6 250.0 L566.4 248.3 L565.4 246.7 L564.6 245.0 L564.8 243.2 L565.5 241.3 L567.4 240.6 M600.7 259.9 L602.9 259.7 L604.7 260.9 L606.6 262.1 L608.7 261.9 M600.7 259.9 L598.7 258.5 L599.6 256.1 L601.6 255.6 L602.9 254.0 L601.8 252.6 L602.5 250.9 L601.9 249.4 L601.3 248.0 M606.3 246.8 L604.9 247.3 L604.0 248.5 L602.5 248.9 L601.3 248.0 M606.3 246.8 L608.0 246.3 L609.7 246.6 M608.7 261.9 L609.5 260.9 L610.2 259.8 L611.0 258.8 L610.9 257.4 M610.9 257.4 L610.6 255.4 L612.1 254.1 L612.4 252.3 L612.3 250.5 M609.7 246.6 L610.0 246.6 M610.0 246.6 L611.6 247.0 L612.5 248.5 M612.5 248.5 L612.3 250.5 M603.2 231.4 L601.3 231.2 L600.7 233.0 L600.0 234.3 L600.1 235.9 L599.5 237.4 L600.0 238.9 L600.9 240.2 L602.5 240.7 L603.6 242.9 L605.2 244.8 L606.5 245.7 L606.9 247.2 L608.1 246.1 L609.7 246.6 M603.2 231.4 L602.0 232.4 L600.5 232.7 M600.5 232.7 L601.0 234.9 L600.3 237.1 L600.4 239.4 L599.3 241.4 L600.8 243.0 L602.3 244.7 L603.9 246.6 L606.3 246.8 M608.8 264.4 L608.6 263.1 L608.7 261.9 M608.8 264.4 L610.1 265.1 L611.7 265.3 L611.3 267.5 L613.6 267.6 L615.0 267.4 L616.5 267.3 L618.0 267.8 L619.4 267.3 M619.4 267.3 L617.7 267.0 L616.1 266.1 L614.9 264.8 L613.4 263.9 L612.7 261.8 L610.6 261.3 L610.8 259.4 L610.9 257.4 M620.6 268.0 L619.4 267.3 M620.6 268.0 L619.6 265.8 L618.6 263.5 L617.7 262.1 L616.0 261.9 L616.1 260.2 L617.1 258.9 L616.7 257.7 L616.4 256.5 L616.4 255.2 L616.0 254.0 L615.6 252.6 L615.2 251.1 L613.7 251.1 L612.3 250.5 M603.2 231.4 L603.2 229.9 L604.1 228.6 L605.7 228.4 L607.0 229.2 L608.2 227.3 L609.8 225.8 M613.1 234.8 L613.2 236.6 L612.8 238.3 L613.5 239.9 L614.5 241.5 L613.5 242.9 L612.2 244.0 L611.4 245.6 L610.0 246.6 M634.2 235.4 L632.9 235.2 L631.5 234.9 L630.5 235.8 L629.7 236.9 L628.0 238.6 L626.8 240.7 L627.0 242.9 L627.0 245.2 L628.0 246.2 L627.9 247.7 L627.4 248.9 L626.2 249.7 M626.2 249.7 L624.3 249.7 L622.5 250.2 L620.7 250.8 L619.1 251.9 L617.6 250.5 L615.7 250.5 L614.4 248.9 L612.5 248.5 M652.8 223.0 L653.7 224.7 L655.6 224.9 L657.2 225.6 L657.8 227.3 L659.5 226.0 L661.5 226.4 L662.2 228.4 L664.1 229.2 M640.5 234.5 L641.9 234.4 L643.2 234.6 L643.9 235.8 L643.7 237.2 L644.6 238.2 L646.0 238.4 L645.7 239.6 L645.5 240.9 L646.1 243.1 L646.8 245.2 L648.7 246.5 L651.0 246.8 M664.1 229.2 L664.9 230.5 L665.4 232.0 L666.3 233.3 L667.7 234.0 L668.5 235.4 L668.0 237.0 L668.4 238.5 L668.8 239.9 M651.0 246.8 L653.0 245.5 L655.2 244.3 L656.3 245.2 L657.7 244.9 L658.9 244.5 L660.1 244.0 L662.0 243.5 L662.2 241.6 L662.4 240.0 L662.8 238.4 L664.4 238.5 L666.0 238.3 L667.3 239.2 L668.8 239.9 M671.1 240.0 L670.2 240.7 M686.7 254.3 L685.5 253.4 L684.2 254.0 L683.3 253.0 L682.0 252.7 L680.7 253.0 L679.9 254.2 L678.6 254.2 L677.3 254.1 M670.2 240.7 L670.3 242.6 L670.6 244.6 L671.1 246.5 L672.0 248.3 L673.8 249.1 L675.0 250.8 L676.3 252.3 L677.3 254.1 M681.8 274.3 L680.3 275.4 L678.9 276.8 L678.8 279.1 L676.8 280.1 L675.0 280.9 L673.1 281.6 L671.4 282.9 L670.8 284.9 M681.8 274.3 L680.8 272.4 L679.0 271.3 M679.0 271.3 L677.6 273.2 L675.3 273.2 L673.1 274.2 L672.7 276.6 L671.5 276.9 L670.2 276.7 L668.9 277.1 L667.9 278.1 L667.3 279.4 L668.1 280.6 L668.1 281.8 L667.8 283.1 M670.8 284.9 L668.9 284.6 L667.8 283.1 M684.0 275.1 L681.8 274.3 M673.0 287.4 L671.6 286.5 L670.8 284.9 M677.3 254.1 L675.9 255.9 L675.7 258.2 L674.0 259.7 L672.3 261.1 M672.3 261.1 L672.5 262.8 L674.0 263.7 L674.5 265.1 L675.1 266.6 L675.2 268.3 L676.8 269.1 L677.8 270.3 L679.0 271.3 M640.1 293.6 L641.4 292.5 M639.5 295.2 L640.1 293.6 M656.2 301.7 L655.3 300.2 L653.7 299.8 L652.7 298.5 L651.4 297.5 L650.7 295.9 L649.1 295.2 L647.8 293.8 L648.2 292.0 M656.2 301.7 L657.3 302.5 L658.2 303.4 L657.8 304.7 L657.3 306.0 L656.6 308.1 L655.6 310.0 L653.9 311.6 L651.6 311.7 L649.5 310.9 L647.4 311.7 M647.4 311.7 L646.4 310.6 L645.5 309.4 L644.6 308.3 L643.3 307.6 L641.6 307.4 L640.1 308.4 L639.1 307.1 L637.7 306.2 L637.8 304.3 L637.4 302.5 L639.1 301.7 L640.9 301.1 L639.2 300.0 L637.8 298.7 L638.7 297.0 L639.5 295.2 M648.2 292.0 L646.4 292.4 L644.9 293.2 L643.2 292.5 L641.4 292.5 M640.1 293.6 L638.4 292.3 L636.3 292.1 L634.2 291.6 L633.0 289.8 L632.6 287.6 L630.6 286.4 L628.9 285.3 L627.2 284.1 M621.7 289.3 L622.7 288.2 L623.6 287.1 L624.6 286.0 L624.8 284.5 M630.4 299.3 L630.1 297.6 L630.8 296.1 L632.2 295.1 L633.9 294.9 L635.0 296.1 L636.6 296.0 L638.2 295.9 L639.5 295.2 M624.8 284.5 L627.2 284.1 M621.1 289.6 L619.5 289.0 L618.1 287.9 L616.3 287.3 L615.7 285.4 L614.0 284.7 L612.1 284.7 L610.6 285.7 L609.1 286.7 M609.1 286.7 L607.5 287.0 L606.1 286.1 L605.6 284.7 L604.6 283.4 M606.3 275.9 L605.1 277.6 L605.4 279.6 L604.9 281.5 L604.6 283.4 M606.3 275.9 L607.6 274.4 L609.0 273.0 L611.0 274.1 L612.9 272.9 L615.0 273.9 L616.4 275.7 L618.5 274.9 L620.2 273.4 M624.8 284.5 L622.6 283.9 L623.2 281.8 L621.9 280.9 L621.1 279.5 L620.6 277.5 L618.7 276.7 L619.2 274.9 L620.2 273.4 M651.0 246.8 L650.9 247.6 M650.9 247.6 L651.8 249.0 L651.2 250.7 L651.1 252.2 L651.7 253.7 L651.7 255.3 L652.0 257.0 L653.0 258.3 L654.4 259.2 M665.0 265.3 L667.3 265.5 L669.5 264.7 L670.8 262.9 L672.3 261.1 M665.0 265.3 L663.9 266.0 L662.5 266.0 L661.4 265.3 L660.7 264.2 M670.2 240.7 L668.8 239.9 M654.4 259.2 L654.8 261.5 L656.9 262.6 L658.8 263.4 L660.7 264.2 M604.0 272.0 L604.5 270.5 L604.6 268.9 L606.2 268.3 L607.8 269.1 L608.9 268.3 L609.1 266.9 L609.4 265.6 L608.8 264.4 M620.2 273.4 L621.4 271.8 L621.6 269.8 M621.6 269.8 L621.6 269.1 M606.3 275.9 L606.0 273.5 L604.0 272.0 M620.6 268.0 L621.6 268.6 M621.6 268.6 L621.6 269.1 M626.2 249.7 L626.3 251.9 L625.7 254.1 L626.5 255.2 L627.0 256.4 L628.3 255.7 L629.6 256.3 M621.6 268.6 L623.5 268.0 L625.1 266.9 L625.7 264.9 L627.1 263.4 L628.1 261.8 L629.2 260.2 L630.4 259.5 L631.2 258.4 L630.6 257.2 L629.6 256.3 M650.9 247.6 L649.3 247.8 L647.8 247.4 L647.2 248.8 L646.3 250.0 L646.3 251.5 L646.2 253.1 L644.5 252.8 L643.4 254.2 L642.8 255.5 L641.7 256.4 L640.8 257.3 L639.6 258.1 L638.4 258.6 L637.0 258.9 L635.5 259.1 L634.3 258.3 M629.6 256.3 L630.5 257.3 L631.9 257.5 L633.0 258.2 L634.3 258.3 M667.6 225.0 L670.0 224.5 L671.1 222.4 L672.6 224.0 L674.8 224.6 M667.6 225.0 L668.3 222.9 L669.7 221.2 L671.9 220.7 L673.5 219.1 L674.0 217.9 L674.2 216.6 L675.3 216.0 L676.2 215.0 L674.6 213.1 L673.5 210.9 M674.8 224.6 L675.0 223.1 L676.4 222.5 L676.3 221.2 L675.8 220.0 L676.7 217.7 L678.3 215.9 L677.8 213.5 L678.8 211.3 L678.4 209.4 L677.4 209.0 M676.8 208.8 L676.6 208.7 L677.0 208.5 M673.5 210.9 L675.1 210.1 L676.7 209.2 L677.1 208.9 M664.1 229.2 L665.0 228.1 L665.7 226.9 L667.2 226.4 L667.6 225.0 M679.7 225.8 L678.4 226.1 L677.1 225.7 L676.3 224.3 L674.8 224.6 M665.4 212.0 L667.4 211.6 L669.4 210.8 L671.4 210.8 L673.5 210.9 M536.7 209.2 L536.4 210.8 L536.3 212.3 L537.4 213.6 L537.5 215.2 L538.7 216.3 L540.0 217.2 L539.4 219.1 L540.9 220.3 M567.9 207.7 L567.9 207.9 M566.6 210.5 L566.5 208.8 L567.9 207.9 M566.6 210.5 L565.5 211.5 L564.6 212.6 L563.3 213.3 L562.0 213.9 L560.2 214.1 L559.7 215.8 L559.4 217.3 L558.8 218.7 L557.5 219.2 L556.3 220.0 L555.3 221.0 L554.3 222.1 L554.2 223.9 L554.2 225.7 L552.7 226.7 L550.8 226.6 M550.8 226.6 L549.7 225.5 L548.3 224.9 L546.8 224.7 L545.4 224.1 L544.1 223.4 L542.9 222.5 L541.5 221.8 L540.9 220.3 M511.6 212.0 L510.1 214.2 L511.3 216.5 L510.3 218.6 L510.5 221.0 L512.7 222.3 L515.2 221.9 L516.2 224.2 L518.2 225.8 L520.1 224.7 L522.2 224.5 L525.0 224.3 L525.7 227.0 L527.6 226.9 L529.5 227.1 L531.5 226.5 L533.4 227.3 M514.1 206.7 L513.3 208.3 L514.0 209.9 L513.4 211.6 L511.6 212.0 M540.9 220.3 L539.4 220.3 L538.5 221.4 L537.7 222.8 L536.2 222.8 L534.9 223.5 L534.7 225.0 L534.1 226.2 L533.4 227.3 M511.6 212.0 L512.6 213.0 L513.0 214.3 L511.8 215.0 L511.3 216.3 L508.9 216.5 L507.7 218.8 M512.8 233.5 L514.0 234.5 L515.6 234.5 L516.8 235.5 L518.4 235.4 M518.4 235.4 L520.0 235.3 L521.4 234.5 L523.0 234.3 L524.4 235.2 L525.9 235.0 L527.1 234.0 L528.7 233.8 L529.7 232.5 M533.4 227.3 L531.9 228.3 L531.6 230.0 L530.0 230.7 L529.7 232.5 M566.9 175.2 L566.0 177.3 L566.8 180.7 L567.4 184.1 L568.8 187.3 L570.9 190.1 M590.3 169.7 L590.5 169.8 L591.4 172.3 M591.4 172.3 L590.1 174.0 L590.2 176.1 L590.1 178.1 L590.1 180.1 L588.5 181.4 L586.9 182.8 L587.6 185.0 L586.0 186.8 L585.1 189.0 L583.9 191.1 L581.6 193.0 L579.1 191.3 L577.1 192.7 L574.7 192.8 L573.2 190.8 L570.9 190.1 M566.4 195.3 L567.3 194.2 L568.7 193.9 M568.7 193.9 L570.2 192.2 L570.9 190.1 M618.4 166.9 L610.6 171.5 M601.1 178.7 L601.6 177.2 L602.9 176.2 L604.1 175.2 L605.1 174.1 L606.6 173.8 L608.1 173.3 L609.4 172.4 L610.6 171.5 M594.1 177.4 L594.4 175.6 L594.8 173.8 L593.1 173.1 L591.4 172.3 M594.1 177.4 L595.0 179.5 L597.3 179.5 L599.1 178.5 L601.1 178.7 M592.6 191.6 L593.8 189.7 L593.4 187.5 L592.5 185.5 L590.7 184.2 L591.8 182.6 L592.0 180.6 L592.2 178.5 L594.1 177.4 M592.6 191.6 L590.8 192.6 L588.9 193.3 L587.2 192.0 L585.2 191.6 L584.6 193.5 L582.9 194.4 L582.4 196.3 L581.1 197.7 L579.8 196.3 L578.0 196.6 L576.6 195.7 L575.3 194.6 L573.7 193.4 L572.2 192.2 L570.1 192.3 L568.7 193.9 M603.9 300.3 L605.3 299.8 L606.7 299.3 L607.5 297.8 L609.2 297.5 M603.9 300.3 L603.8 300.3 M603.8 300.3 L604.8 299.2 L605.5 297.9 L606.1 296.5 L607.2 295.5 L606.6 294.0 L607.0 292.4 L607.8 291.1 L608.7 289.9 M609.2 297.5 L610.0 295.7 M608.7 289.9 L608.8 291.4 L608.5 293.0 L609.8 294.1 L610.0 295.7 M616.9 300.2 L614.8 301.1 L612.6 300.1 L611.4 300.2 L610.1 299.9 L609.3 298.8 L609.2 297.5 M604.9 302.6 L603.9 300.3 M618.8 294.1 L617.6 293.4 L616.2 293.5 L614.9 294.2 L614.5 295.6 L612.3 295.7 L610.0 295.7 M609.1 286.7 L608.8 288.3 L608.7 289.9 M597.8 322.0 L597.6 320.4 L599.0 319.7 L599.9 318.4 L601.4 318.4 M597.8 322.0 L596.5 323.9 L597.9 325.6 L598.5 327.3 L599.0 329.0 L600.1 330.8 L600.6 332.8 L599.1 334.3 L598.1 336.1 M601.4 318.4 L603.4 317.5 L605.5 317.5 L607.1 318.9 L609.0 319.8 M609.0 319.8 L608.6 321.4 L608.2 323.0 L608.2 324.7 L608.2 326.4 L606.9 327.7 L606.4 329.6 L607.0 331.3 L607.7 333.0 M598.1 336.1 L599.8 337.1 M599.8 337.1 L601.4 336.5 L603.0 336.1 L604.3 335.1 L605.7 334.1 M605.7 334.1 L607.7 333.0 M594.8 317.8 L595.3 319.0 L596.0 320.1 L596.0 321.8 L597.8 322.0 M601.7 313.3 L601.4 314.6 L601.4 315.9 L600.4 317.2 L601.4 318.4 M582.8 323.3 L583.7 325.1 L585.7 325.6 L587.2 326.8 L588.8 327.8 L589.9 329.4 L590.0 331.4 L590.5 333.2 L591.1 335.0 M591.1 335.0 L593.0 335.5 L594.7 334.7 L596.3 335.7 L598.1 336.1 M611.0 315.9 L610.2 317.9 L609.0 319.8 M624.6 352.4 L624.6 352.1 M624.6 352.1 L623.2 350.7 L621.2 350.1 L620.5 348.3 L619.5 346.7 L618.1 345.1 L617.7 343.1 L618.1 341.1 L618.8 339.2 L617.1 338.9 L615.3 338.4 L613.5 338.0 L611.7 338.1 L610.3 337.0 L608.7 336.2 L607.0 335.4 L605.7 334.1 M601.2 345.8 L601.4 343.5 L601.1 341.3 L601.0 339.0 L599.8 337.1 M642.6 355.7 L644.0 354.0 L645.2 351.8 L644.8 348.5 L647.7 346.7 L644.4 346.0 L643.5 342.8 M624.6 352.1 L625.3 350.0 L625.6 347.9 L624.5 345.8 L624.9 343.6 M643.5 342.8 L642.6 341.8 L642.2 340.6 L641.3 339.6 L640.6 338.6 L639.3 338.2 L638.0 338.1 L636.7 337.7 L635.7 336.7 M635.7 336.7 L634.9 338.1 L634.4 339.6 L632.8 340.1 L631.8 341.5 L630.6 342.6 L628.9 342.6 L627.3 342.3 L625.7 342.3 M624.9 343.6 L625.7 342.3 M607.7 333.0 L609.1 333.4 L610.3 332.8 M624.9 343.6 L624.3 342.2 L622.9 341.8 L622.8 340.5 L622.1 339.3 L620.6 339.8 L619.4 340.8 L618.1 340.1 L616.9 339.2 L614.8 338.1 L613.4 336.2 L611.9 334.5 L610.3 332.8 M615.8 316.9 L616.8 318.1 L618.4 318.4 L619.4 319.7 L621.1 319.7 L621.0 321.4 L621.9 322.8 L623.1 323.8 L624.6 324.5 M610.3 332.8 L612.2 331.4 L612.9 329.2 L615.0 328.5 L617.2 328.4 L618.7 326.7 L621.0 326.9 L622.9 326.2 L624.6 325.0 M624.6 324.5 L624.6 325.0 M628.8 308.7 L629.1 310.1 L629.3 311.5 L630.4 312.5 L631.8 312.8 M624.6 324.5 L625.3 322.9 L626.4 321.6 L625.7 319.3 L627.9 318.5 L629.3 317.3 L630.2 315.9 L631.3 314.5 L631.8 312.8 M625.7 342.3 L626.6 341.3 L627.9 340.8 L629.7 340.5 L629.4 338.6 L628.8 337.3 L628.6 335.8 L629.2 334.5 L630.3 333.5 L630.4 332.1 L630.0 330.8 L628.7 329.8 L629.0 328.3 L628.0 327.3 L626.6 327.1 L625.5 326.3 L624.7 325.2 M624.6 325.0 L624.7 325.2 M647.4 311.7 L646.9 313.2 M646.9 313.2 L645.7 313.9 M631.8 312.8 L633.5 311.9 L635.5 311.8 L637.2 311.1 L639.0 310.3 L640.9 310.9 L642.1 312.5 L643.9 313.2 L645.7 313.9 M581.7 305.8 L581.2 304.6 L580.9 303.4 L579.7 303.0 L578.6 302.5 M581.7 305.8 L580.4 306.3 L579.1 307.2 L577.6 307.1 L576.2 307.5 M578.6 302.5 L578.2 303.8 L578.0 305.2 L576.4 305.6 L576.0 307.2 M576.2 307.5 L576.0 307.2 M585.3 307.5 L585.4 305.0 L583.9 303.1 L585.9 301.9 L586.8 299.7 M586.8 299.7 L584.6 299.5 L583.6 297.6 L583.2 295.7 L583.5 293.8 M576.9 296.8 L577.0 298.4 L576.3 300.0 L577.4 301.3 L578.6 302.5 M576.9 296.8 L578.2 295.7 L579.5 294.7 L581.5 294.5 L581.9 292.5 M581.9 292.5 L583.5 293.8 M583.9 307.5 L582.9 306.5 L581.7 305.8 M578.4 311.7 L577.5 310.8 L576.4 310.1 L576.6 308.8 L576.2 307.5 M570.7 298.1 L572.2 297.3 L573.6 296.3 L575.3 296.2 L576.9 296.8 M572.5 306.6 L571.7 305.6 L570.5 305.1 L570.0 304.0 L569.7 302.7 L569.6 301.3 L568.9 300.1 L569.7 299.0 L570.7 298.1 M572.5 306.6 L574.6 305.1 L576.0 307.2 M572.5 306.6 L571.2 308.7 M553.6 322.1 L554.8 321.1 L556.4 320.7 L556.2 322.8 L558.3 323.1 L558.2 324.5 L558.4 326.0 L559.9 326.0 L561.2 326.9 M553.6 322.1 L552.6 322.3 M552.6 322.3 L553.9 324.3 L554.0 326.7 L552.8 328.6 L552.0 330.8 M561.2 326.9 L561.2 326.9 M561.2 326.9 L559.2 328.2 L557.3 329.6 L556.6 330.7 L555.9 331.8 L557.1 332.8 L556.6 334.3 M552.0 330.8 L552.7 332.1 L553.8 333.1 M556.6 334.3 L555.4 333.2 L553.8 333.1 M551.9 307.2 L549.5 307.4 L547.3 308.4 M545.9 320.3 L547.8 321.0 L548.9 322.6 L550.7 322.3 L552.6 322.3 M551.9 307.2 L554.2 307.4 M556.4 318.2 L556.4 315.9 L555.8 313.7 L555.9 311.3 L555.1 309.2 M556.4 318.2 L555.5 319.1 L554.3 319.7 L554.4 321.0 L553.6 322.1 M544.1 329.3 L546.1 329.3 L548.2 329.5 L550.2 329.8 L552.0 330.8 M558.8 341.1 L558.2 339.3 L556.6 338.1 L557.2 336.2 L556.6 334.3 M560.1 342.4 L561.7 342.4 L563.2 341.9 L564.3 340.7 L565.7 339.8 L566.3 338.4 L566.7 336.9 L566.7 335.0 L568.4 334.3 M567.8 327.2 L569.0 329.0 L567.8 330.8 L567.0 332.7 L568.4 334.3 M567.8 327.2 L566.1 327.1 L564.6 326.3 L562.9 326.6 L561.2 326.9 M543.4 338.1 L545.1 338.6 L546.7 337.7 L547.5 336.2 L548.2 334.7 L549.6 334.4 L550.8 333.4 L552.3 333.4 L553.8 333.1 M561.4 322.8 L560.3 321.8 L559.7 320.4 L558.3 319.7 L558.1 318.1 M561.4 322.8 L560.6 321.4 L560.6 319.8 L560.8 318.0 L562.4 317.2 M562.4 317.2 L560.4 318.3 L558.1 318.1 M561.2 326.9 L562.6 324.9 L561.4 322.8 M556.4 318.2 L558.1 318.1 M572.0 323.6 L570.7 324.2 L569.9 325.3 L569.1 326.5 L567.8 327.2 M564.2 315.8 L562.4 317.2 M570.2 335.3 L571.9 335.4 L573.7 335.3 L575.1 334.2 L575.8 332.5 M570.2 335.3 L569.6 336.8 L570.8 337.8 L571.8 338.7 L572.2 340.0 L573.3 340.6 L574.6 340.7 L575.8 341.3 L576.9 342.0 M575.8 332.5 L575.9 334.2 L575.6 335.8 L577.1 336.4 L578.7 336.8 L580.0 337.0 L581.0 337.9 L582.5 338.3 L582.8 339.8 M576.9 342.0 L579.4 341.9 L581.7 340.9 M581.7 340.9 L582.8 339.8 M568.4 334.3 L570.2 335.3 M573.7 323.9 L573.1 326.3 L572.6 328.7 L573.6 329.9 L573.4 331.3 L574.6 331.9 L575.8 332.5 M576.5 342.3 L576.9 342.0 M591.1 335.0 L588.7 335.7 L587.0 337.6 L584.9 338.6 L582.8 339.8 M582.6 355.4 L581.7 355.1 L585.7 352.6 L586.4 348.0 L585.1 343.7 L581.7 340.9 M417.5 309.1 L418.1 307.6 L418.9 306.3 L419.0 304.4 L420.9 303.8 L421.2 302.2 L421.7 300.6 L420.1 299.5 L420.5 297.6 M417.5 309.1 L419.7 309.2 L421.8 308.6 L423.0 308.3 L424.3 308.5 L425.8 309.0 L425.6 310.6 M425.6 310.6 L426.5 308.8 L427.8 307.5 M427.8 307.5 L425.8 307.5 L424.0 306.4 L424.5 304.5 L424.5 302.6 L424.1 300.9 L422.6 300.2 L422.4 298.6 L421.4 297.4 M420.5 297.6 L421.4 297.4 M421.4 297.4 L423.0 296.9 L424.4 297.7 L425.3 296.4 L426.7 295.9 M427.8 307.5 L429.5 307.1 L431.2 307.4 L432.7 306.7 L434.3 306.2 L435.4 304.7 L436.9 303.7 L438.6 303.8 L440.4 303.4 M440.4 303.4 L440.8 301.6 L440.5 299.6 L439.4 298.0 L437.5 297.2 M437.5 297.2 L436.4 296.4 L434.9 296.4 L433.5 296.8 L432.1 296.4 L431.0 295.6 L429.5 295.2 L428.0 295.1 L426.7 295.9 M415.4 293.9 L416.8 294.8 L417.7 296.1 L419.2 296.6 L420.5 297.6 M415.4 293.9 L414.2 292.0 L414.2 289.7 L416.0 288.4 L418.2 288.0 L418.0 286.2 L418.9 284.7 L419.3 283.0 L420.8 282.0 M420.8 282.0 L422.4 282.1 L423.8 283.0 L424.8 284.3 L426.5 284.5 M426.7 295.9 L427.0 294.4 L426.5 293.0 L426.5 291.6 L426.5 290.2 L427.1 288.8 L426.4 287.3 L426.9 285.9 L426.5 284.5 M419.5 223.9 L420.9 224.9 L422.5 225.3 L424.3 225.9 L424.7 227.8 L425.0 229.4 L425.2 231.0 L425.9 232.6 L425.0 234.2 L425.9 235.7 L425.0 237.3 L425.3 239.0 L424.5 240.4 L424.8 242.2 L426.3 243.1 L427.4 244.3 L428.7 245.2 M442.1 223.7 L441.6 225.0 L442.1 226.3 L443.6 226.3 L444.3 227.6 L445.1 229.7 L445.9 231.7 L446.9 233.8 L447.5 236.0 L448.8 237.8 L450.6 239.2 M428.7 245.2 L430.3 245.4 L432.0 245.4 L433.6 244.7 L434.4 243.1 L435.9 243.6 L437.3 244.2 L438.7 245.2 L440.3 244.7 L441.9 245.3 L443.6 245.2 L445.7 244.8 L445.8 242.7 L446.8 241.5 L447.7 240.3 L449.0 239.4 L450.6 239.2 M454.6 212.0 L456.1 213.1 M456.1 213.1 L457.4 214.7 L458.5 216.4 L457.0 218.0 L457.2 220.2 L457.8 222.0 L457.6 223.8 L458.6 225.4 L459.3 227.1 L457.4 227.9 L455.3 228.4 L454.7 230.4 L454.3 232.5 L453.6 234.2 L452.7 235.9 L452.3 237.7 L452.3 239.6 M450.6 239.2 L452.3 239.6 M468.8 246.3 L466.8 247.1 M471.4 216.1 L469.5 215.0 L468.2 213.3 L466.0 213.5 L463.9 213.9 L461.9 214.0 L460.1 213.1 L458.1 213.3 L456.1 213.1 M475.5 235.9 L474.1 235.4 L473.3 234.0 L472.4 232.9 L471.9 231.5 L471.7 230.0 L472.0 228.6 L473.0 227.5 L473.4 226.0 L473.7 224.5 L474.7 223.5 L474.8 222.0 L474.5 220.6 L473.4 219.6 L472.0 219.0 L472.1 217.5 L471.4 216.1 M452.3 239.6 L454.1 240.8 L456.2 241.0 L457.9 242.2 L460.0 242.4 L462.1 242.8 L463.8 244.1 L466.2 244.7 L466.8 247.1 M449.0 162.8 L446.1 152.0 L443.1 147.9 M449.0 162.8 L447.6 164.0 M431.5 157.3 L432.8 157.9 L434.7 158.0 L436.3 159.0 L438.2 159.5 L438.1 161.4 L437.9 163.3 L437.5 165.2 L437.9 167.1 M447.6 164.0 L446.7 165.3 L445.3 166.0 L443.9 165.3 L442.5 164.7 L441.2 165.0 L440.2 166.0 L438.9 166.2 L437.9 167.1 M428.1 185.1 L429.7 186.1 L430.9 187.5 L431.8 189.4 L433.9 189.6 M428.1 185.1 L427.4 183.0 L425.2 182.9 L424.2 181.4 L422.6 180.4 L422.5 178.5 L422.4 176.7 L422.2 174.7 L420.8 173.4 M433.9 189.6 L436.0 188.4 L438.4 187.6 L439.9 188.1 L440.9 187.0 L441.8 185.9 L442.4 184.8 L441.3 184.0 L440.7 182.8 L440.0 181.7 L438.7 181.2 L438.5 179.9 L437.9 178.8 L437.7 177.5 L437.5 176.3 M420.9 173.2 L422.3 171.8 L424.3 172.7 L425.9 171.7 L427.1 170.3 M427.1 170.3 L428.6 170.6 L429.3 171.9 L430.3 173.1 L431.9 173.1 L433.2 173.5 L434.6 173.6 L435.9 174.2 L436.9 175.2 M437.5 176.3 L436.9 175.2 M415.5 183.2 L416.3 183.6 L418.0 185.4 L419.4 187.5 L421.6 186.2 L424.0 187.1 L426.0 186.0 L428.1 185.1 M435.2 194.4 L435.0 191.9 L433.9 189.6 M430.9 157.7 L430.8 158.9 L429.8 160.5 L429.3 162.4 L427.5 163.3 L427.7 165.2 L426.6 166.7 L427.0 168.5 L427.1 170.3 M437.9 167.1 L437.2 169.3 L438.4 171.3 L437.0 173.0 L436.9 175.2 M455.5 181.2 L457.4 179.9 L459.6 179.7 L458.5 177.6 L459.0 175.4 M455.5 181.2 L453.5 181.3 L451.5 180.8 L450.8 178.9 L449.3 177.6 L447.8 176.4 L445.9 176.3 L444.1 176.2 L442.5 175.2 M442.7 175.0 L442.5 175.2 M442.7 175.0 L444.3 174.3 L445.4 172.8 L447.2 172.4 L448.2 170.8 L450.1 171.1 L452.0 171.1 L453.1 169.5 L454.8 168.6 M459.0 175.4 L458.8 173.7 L459.1 171.9 M454.8 168.6 L456.3 168.9 L456.9 170.3 L458.3 170.8 L459.1 171.9 M437.5 176.3 L438.7 175.4 L439.7 174.2 L441.0 174.8 L442.5 175.2 M439.6 194.6 L440.6 193.8 L441.8 193.1 L443.0 192.6 L443.9 191.5 L444.0 190.1 L445.0 189.1 L444.9 187.7 L445.4 186.4 L446.6 185.6 L447.8 184.8 L449.0 183.9 L449.3 182.4 L450.7 181.7 L452.2 182.1 L453.4 183.1 L454.9 183.1 M454.9 183.1 L455.3 182.5 M455.3 182.5 L455.5 181.2 M447.6 164.0 L446.5 165.5 L446.8 167.4 L445.3 168.5 L443.5 168.7 L442.2 170.0 L441.4 171.6 L442.4 173.2 L442.7 175.0 M449.0 162.8 L450.6 164.0 L452.1 165.5 L453.6 165.9 L455.1 165.7 L455.1 167.2 L454.8 168.6 M478.6 176.7 L477.6 177.7 L477.3 179.0 L476.1 178.3 L474.9 177.7 L474.1 179.6 L472.2 180.5 M472.2 180.5 L470.8 178.6 L470.8 176.2 L468.7 175.3 L467.3 173.4 L466.3 172.5 L465.1 172.1 L464.1 173.0 L462.9 173.5 L461.6 173.6 L460.4 173.2 L459.2 174.0 L459.0 175.4 M466.0 165.3 L463.9 166.6 L461.7 167.8 L461.5 169.0 L460.8 170.1 L460.0 171.0 L459.1 171.9 M389.4 349.3 L390.5 347.7 L391.6 346.1 L390.5 344.4 L390.5 342.4 M389.4 349.3 L387.8 348.8 L386.1 348.5 L384.2 348.6 L383.0 350.1 L381.2 350.7 L381.1 352.7 L380.4 354.1 L379.6 355.5 M390.5 342.4 L389.4 343.1 L388.4 343.8 L387.5 344.8 L386.4 345.4 L385.5 346.5 L384.1 346.6 L382.9 347.1 L381.6 347.0 L380.1 346.8 L379.0 345.7 L377.6 345.2 L376.6 344.1 L375.6 345.2 L374.4 346.2 L373.1 347.0 L371.5 346.9 M379.6 355.5 L378.1 354.8 L376.8 353.8 L376.8 352.0 L375.4 350.9 L373.8 350.1 L372.3 350.7 L370.7 350.7 L369.1 350.5 M369.1 350.5 L370.8 349.1 L371.5 346.9 M377.9 379.3 L378.3 377.2 L380.1 376.0 L380.5 374.0 L381.0 372.1 L382.5 370.8 L383.9 369.3 L385.6 367.9 L387.7 368.1 L385.8 366.7 L383.7 365.6 L381.5 364.1 L379.0 364.8 L379.4 362.5 L379.6 360.2 L378.9 357.9 L379.6 355.5 M394.8 358.8 L393.2 358.3 L392.4 356.9 L391.5 355.5 L389.8 355.3 L390.7 353.9 L391.1 352.2 L390.9 350.4 L389.4 349.3 M349.3 354.0 L350.9 353.1 L353.0 351.2 L354.0 348.5 L356.6 347.7 L359.3 346.8 L361.4 348.7 L363.5 350.6 L366.3 351.1 L369.1 350.5 M371.5 346.9 L372.5 344.8 L372.6 342.4 L373.2 340.1 L373.3 337.8 M390.5 342.4 L391.2 340.7 M391.2 340.7 L388.8 340.0 L386.5 339.0 L385.4 338.4 L384.3 337.8 L383.7 336.7 L382.8 335.8 L382.0 337.1 L380.7 337.9 L379.2 337.5 L378.0 336.6 L375.7 337.5 L373.3 337.8 M495.2 369.4 L497.2 368.6 L499.4 368.8 M495.2 369.4 L495.4 370.8 L496.7 371.5 L498.2 371.5 L499.0 372.8 L500.2 371.9 L501.6 372.1 L502.6 373.2 L504.1 373.4 L505.2 374.1 L506.0 375.1 L506.4 376.3 L507.1 377.4 L507.4 379.0 L508.9 379.6 L510.3 379.2 L511.5 379.5 M499.4 368.8 L500.1 371.0 L502.4 371.4 L502.1 372.8 L502.3 374.1 L503.6 374.6 L505.0 374.4 L506.0 373.1 L507.6 373.4 L508.3 372.3 L509.5 371.5 L510.7 372.5 L510.5 374.1 L511.0 375.9 L512.8 375.7 M511.7 379.5 L511.9 377.5 L512.8 375.7 M517.5 365.1 L516.2 365.2 L515.0 364.8 L513.8 365.2 L512.6 365.7 L511.0 365.8 L509.7 367.0 L509.1 365.5 L507.9 364.4 L506.1 366.0 L503.9 367.2 L503.2 368.3 L502.0 368.9 L500.7 368.7 L499.4 368.8 M517.5 365.1 L516.0 365.7 L515.4 367.2 L514.4 368.6 L514.6 370.2 L513.8 371.4 L513.3 372.8 L513.2 374.3 L512.8 375.7 M521.9 361.2 L520.9 362.3 L520.0 363.4 L518.2 363.5 L517.5 365.1 M495.1 369.4 L495.2 369.4 M495.1 369.4 L493.9 371.6 L491.7 372.6 L489.2 372.6 L487.1 373.8 M483.9 381.0 L484.1 380.9 L484.4 376.9 L487.1 373.8 M457.0 356.3 L457.3 358.3 L457.8 360.3 L456.2 361.8 L455.9 364.0 L453.8 364.9 L451.9 366.0 L452.1 368.3 L451.4 370.5 M457.0 356.3 L458.3 355.2 L458.1 353.5 L459.5 353.1 L461.0 353.2 L462.4 353.9 L463.6 352.9 L464.9 353.0 L466.1 353.7 M466.1 353.7 L467.4 354.5 L467.5 356.0 L465.5 356.2 L466.0 358.2 L466.3 360.5 L467.2 362.6 L468.3 363.4 L469.4 364.4 L469.7 365.8 L470.6 366.9 L470.4 368.4 L469.2 369.2 L468.4 370.4 L467.6 371.5 M451.4 370.5 L453.3 370.3 L454.8 371.6 L456.6 372.4 L457.4 374.1 L458.6 373.7 L459.7 373.0 L459.9 371.7 L460.3 370.5 L462.3 371.7 L464.4 372.7 M464.4 372.7 L466.3 372.8 L467.6 371.5 M453.2 351.6 L454.8 352.1 L455.4 353.7 L455.7 355.3 L457.0 356.3 M447.3 373.1 L447.6 371.6 L448.3 370.1 L449.7 370.9 L451.4 370.5 M479.6 356.1 L478.3 355.0 L477.0 353.7 L475.8 352.5 L474.6 351.2 L473.0 351.8 L471.3 352.3 L469.4 351.7 L467.8 352.8 M479.6 356.1 L478.2 358.0 L477.7 360.2 L479.3 361.7 L480.4 363.7 L480.1 366.1 L482.4 366.9 L483.4 368.5 L483.7 370.5 M483.7 370.5 L481.4 370.1 L479.2 370.6 L477.2 369.5 L475.5 368.0 L474.0 369.7 L471.8 370.3 L469.9 371.5 L467.6 371.5 M467.8 352.8 L466.1 353.7 M466.6 384.3 L466.5 384.1 L464.1 383.8 L463.3 381.2 L460.6 380.9 L462.2 379.0 L464.3 377.6 L465.8 375.2 L464.4 372.7 M487.1 373.8 L486.6 372.6 L486.4 371.2 L485.1 370.8 L483.7 370.5 M394.1 274.3 L393.5 272.7 M402.9 275.5 L400.6 276.2 L398.3 276.3 L397.1 275.6 L396.7 274.3 L395.4 273.7 L394.1 274.3 M402.9 275.5 L403.5 274.5 L403.9 273.2 L403.8 271.9 L404.2 270.7 M404.2 270.7 L404.3 268.4 L403.1 266.3 M394.2 271.6 L395.8 270.2 L397.6 269.0 L398.8 266.8 L401.3 266.7 M401.3 266.7 L403.1 266.3 M391.5 268.3 L392.5 266.3 L393.5 264.3 M401.3 266.7 L399.4 265.7 L397.2 266.0 L395.4 265.0 L393.5 264.3 M402.9 275.5 L402.7 277.3 L402.4 279.1 M404.2 281.0 L405.8 280.0 L407.6 279.7 L409.4 279.2 L411.3 279.6 M402.4 279.1 L403.1 280.3 L404.2 281.0 M404.2 270.7 L405.8 269.9 L407.4 270.7 L408.2 272.1 L409.2 273.4 M409.2 273.4 L408.7 275.2 L408.6 277.0 L410.0 278.2 L411.3 279.6 M372.7 304.5 L371.5 305.7 L370.7 307.3 L372.0 308.4 L372.8 310.0 M372.7 304.5 L371.4 304.1 L370.1 304.6 L368.9 304.4 L367.7 304.0 L366.5 304.5 L365.5 305.3 L365.2 306.9 L363.5 306.8 L362.3 306.3 L360.9 306.1 L359.6 306.3 L358.3 306.5 L357.0 307.1 L356.7 308.5 L355.7 309.4 L354.6 310.1 M372.8 310.0 L371.5 310.6 L370.3 311.5 L370.4 312.9 L370.8 314.4 L369.7 315.3 L368.3 315.3 L367.1 314.7 L365.9 314.4 L366.5 316.1 L366.0 317.9 L367.7 318.6 L368.6 320.3 L366.8 319.7 L365.5 321.1 L363.9 321.4 L362.3 321.8 M362.3 321.8 L360.7 321.2 L359.6 319.9 L360.0 318.3 L359.5 316.6 L357.9 318.3 L356.2 316.8 L354.7 315.9 L354.0 314.4 M354.6 310.1 L354.7 312.3 L354.0 314.4 M486.7 292.7 L486.5 294.3 L487.0 295.9 L488.0 297.1 L488.5 298.7 L488.4 300.2 L488.1 301.8 L488.4 303.3 L488.7 304.8 M482.2 309.0 L479.9 309.6 L477.5 309.5 L476.3 310.3 L475.0 309.7 L473.8 310.4 L473.3 311.6 L471.9 312.0 L470.7 311.3 L469.5 311.8 L468.2 311.5 L466.9 310.7 L467.0 309.1 L466.2 308.0 L465.0 307.5 M479.3 285.5 L477.9 285.7 L476.7 286.4 L475.6 285.5 L474.7 284.5 L472.4 285.0 L470.1 285.6 L468.7 287.6 L468.9 290.0 L467.8 290.7 L466.9 291.7 L466.5 293.1 L467.3 294.3 M480.9 285.5 L479.3 285.5 M465.0 307.5 L465.7 305.3 L467.8 304.0 L465.6 303.0 L464.9 300.7 L465.7 299.1 L465.6 297.3 L467.0 296.1 L467.3 294.3 M394.1 274.3 L395.1 275.7 L396.3 276.9 L395.5 278.4 L395.1 280.1 M402.4 279.1 L400.1 278.0 L398.9 280.1 M395.1 280.1 L397.0 279.9 L398.9 280.1 M366.7 259.2 L367.3 257.5 L369.0 257.0 M382.3 263.7 L381.8 262.6 L381.6 261.3 L382.7 260.6 L383.4 259.6 M369.0 257.0 L370.9 256.9 L372.6 257.8 L374.4 258.3 L376.1 258.8 L377.8 260.7 L379.8 259.2 L381.6 259.3 L383.4 259.6 M393.5 264.3 L392.0 264.3 L390.5 264.0 L388.7 264.5 L387.8 262.8 L387.1 261.5 L386.2 260.4 L385.5 259.1 L384.8 257.8 M383.4 259.6 L384.8 257.8 M386.2 215.9 L386.2 218.3 L386.6 220.7 L385.5 222.9 L385.8 225.4 L385.0 226.5 L384.8 227.8 L383.3 227.5 L382.2 228.5 L380.9 230.5 L379.3 232.2 M388.7 236.8 L388.0 237.9 L387.9 239.3 L386.8 238.5 L385.3 238.6 M379.3 232.2 L381.0 233.6 L382.3 235.4 L383.2 237.7 L385.3 238.6 M353.8 228.8 L354.7 229.8 L355.5 230.9 L356.8 231.2 L358.1 231.6 M379.3 232.2 L377.3 232.3 L375.9 233.8 L374.3 234.7 L372.8 235.9 M358.1 231.6 L360.2 231.1 L362.1 230.3 L364.2 230.8 L366.4 230.7 L368.0 232.2 L370.1 232.6 L371.8 233.9 L372.8 235.9 M303.8 254.9 L302.4 255.7 L302.6 257.3 L302.5 258.7 L303.2 259.9 M303.8 254.9 L305.1 255.0 M318.9 271.3 L321.2 270.7 M305.1 255.0 L306.6 256.2 L308.4 255.6 L309.1 257.3 L308.6 259.0 L310.1 258.9 L311.5 259.3 L312.9 259.9 L313.5 261.3 L314.8 261.7 L316.0 262.3 L316.7 263.5 L318.0 264.0 L319.2 264.6 L320.0 265.7 L321.2 266.2 L322.3 267.0 M321.2 270.7 L321.1 268.6 L322.3 267.0 M305.1 255.0 L307.0 255.2 L308.2 253.8 L309.9 253.5 L311.6 253.9 L312.7 255.1 L314.2 255.9 L316.1 256.1 L316.7 258.0 L318.3 258.0 L319.8 257.9 L321.3 257.2 L322.4 256.0 L323.5 254.9 L324.8 253.9 L326.4 253.6 L328.0 253.9 M322.3 267.0 L321.5 265.1 L321.8 263.0 L323.5 261.8 L324.8 260.3 L325.4 258.5 L325.5 256.7 L327.4 255.9 L328.0 253.9 M332.0 246.7 L331.1 248.3 L330.1 250.0 L329.0 251.5 L328.4 253.4 M298.7 244.8 L300.3 244.9 L301.3 246.3 L302.7 247.3 L303.1 248.9 L302.9 250.7 L301.7 252.1 L302.8 253.4 L303.8 254.9 M328.4 253.4 L328.0 253.9 M358.4 281.8 L358.6 283.3 L358.3 284.7 L357.9 286.2 L357.1 287.4 L356.4 288.7 L355.4 289.8 L354.6 291.0 L354.0 292.4 M370.4 294.2 L370.5 294.0 M370.4 294.2 L368.9 295.0 L367.2 295.2 L365.6 295.6 L363.9 295.6 M354.0 292.4 L355.6 292.9 L357.0 293.6 L357.2 295.3 L358.0 296.8 L359.5 296.1 L361.0 296.7 L362.2 295.5 L363.9 295.6 M502.0 219.3 L501.2 218.2 L500.6 216.9 L499.4 216.3 L498.3 215.4 L497.0 215.5 L495.6 215.4 L494.1 215.8 L493.0 214.8 L491.6 213.8 L490.1 214.7 L488.7 214.4 L487.3 214.2 L485.4 214.0 L484.3 212.6 L484.3 210.9 L484.5 209.2 M471.4 216.1 L471.7 214.6 L473.0 213.7 M484.5 209.2 L483.5 210.5 L481.9 211.1 L480.3 211.9 L478.7 211.2 L477.1 211.5 L475.7 212.1 L474.3 212.8 L473.0 213.7 M495.4 197.6 L493.3 197.7 L491.3 197.5 L489.1 197.4 L487.5 198.9 M484.5 209.2 L484.5 207.7 L484.9 206.3 L484.2 204.9 L484.0 203.5 L484.8 202.2 L485.1 200.7 L486.3 199.8 L487.5 198.9 M490.7 176.0 L490.8 177.6 L489.9 178.9 L489.3 180.3 L489.3 181.9 L487.8 182.8 L486.0 182.6 L484.7 183.8 L484.5 185.6 L484.5 187.3 L484.5 189.0 L485.7 190.3 L487.3 191.1 L486.6 192.8 L487.7 194.3 L486.8 195.7 L485.8 197.0 M485.8 197.0 L486.8 197.8 L487.5 198.9 M485.0 177.3 L484.1 179.6 L482.7 181.7 L480.8 183.2 L478.5 184.2 L477.5 185.4 L478.0 186.8 L479.1 187.7 L479.3 189.1 L477.9 189.5 L477.2 190.8 L477.5 192.2 L477.5 193.6 M485.8 197.0 L485.0 195.8 L484.8 194.4 L483.4 194.6 L482.0 194.4 L479.6 194.8 L477.5 193.6 M519.2 356.1 L518.6 354.6 L518.9 353.0 L517.8 351.9 L516.8 350.8 L515.2 350.7 L513.8 350.4 L512.1 350.3 L510.9 351.4 M495.1 369.4 L496.3 368.5 L497.2 367.4 L497.4 365.9 L497.2 364.5 L497.6 363.2 L497.7 361.8 L498.7 360.8 L499.1 359.5 M510.9 351.4 L509.1 353.0 L506.8 352.4 M499.1 359.5 L500.6 359.8 L502.0 359.2 L503.1 358.1 L503.7 356.8 L504.0 355.4 L505.2 354.5 L505.7 353.2 L506.8 352.4 M479.6 356.1 L480.0 354.6 L480.2 353.0 L481.2 351.8 L482.6 350.9 L484.0 350.1 L484.4 348.5 L485.6 347.5 L486.6 346.4 M499.1 359.5 L497.9 358.7 L497.2 357.5 L496.1 356.3 L494.5 356.6 L493.6 355.4 L493.3 353.9 L494.4 352.8 L494.6 351.2 L493.4 350.2 L492.2 349.0 L492.0 347.4 L492.4 345.8 L491.4 343.9 L489.3 344.4 L487.8 345.2 L486.6 346.4 M495.6 329.4 L493.4 329.7 L491.2 329.2 L489.9 331.2 L487.7 331.9 M495.6 329.4 L496.0 330.6 L497.1 331.4 L497.6 332.5 L498.1 333.7 L498.8 334.9 L499.5 336.1 L500.9 336.3 L502.3 336.4 M502.3 336.4 L500.4 335.7 L498.7 336.9 L497.1 337.8 L495.3 338.2 L494.0 339.7 L494.0 341.7 L492.3 342.6 L491.1 344.2 M487.7 331.9 L488.2 334.3 L487.2 336.4 L486.6 338.6 L485.3 340.5 M485.3 340.5 L486.2 342.6 L487.3 344.6 M487.3 344.6 L489.2 344.3 L491.1 344.2 M497.6 324.1 L497.9 325.6 L497.5 327.1 L496.3 328.0 L495.6 329.4 M497.6 324.1 L498.3 322.1 L497.0 320.4 L495.2 319.6 L494.0 318.2 M484.6 324.5 L485.7 326.4 L487.5 327.7 L487.8 329.8 L487.7 331.9 M497.6 324.1 L499.3 325.4 L501.5 325.5 L503.4 324.8 L505.5 324.6 M505.5 324.6 L506.9 324.2 L508.0 325.2 L508.2 326.5 L509.0 327.6 L510.1 328.9 L509.5 330.4 L511.0 330.0 L512.4 330.8 M508.4 336.2 L509.5 334.9 L509.9 333.2 L510.4 331.2 L512.4 330.8 M508.4 336.2 L506.8 335.6 L505.4 336.3 L503.9 337.5 L502.3 336.4 M508.4 336.2 L508.3 338.5 L509.7 340.3 L511.6 341.4 L512.7 343.3 L511.1 344.9 L510.6 347.1 L511.8 349.2 L510.9 351.4 M506.8 352.4 L504.6 352.1 L502.4 351.3 L500.7 349.8 L498.8 348.6 L497.8 349.8 L496.2 349.8 L494.7 349.3 L494.1 347.9 L492.5 346.2 L491.1 344.2 M478.8 322.3 L478.6 324.3 L477.4 325.9 L476.3 327.6 L474.8 328.8 L474.5 330.7 L473.9 332.6 L474.5 334.5 L475.0 336.4 M475.0 336.4 L476.4 336.3 L477.8 336.7 L479.1 337.5 L480.7 337.2 L481.5 338.5 L483.0 338.9 L484.0 339.8 L485.3 340.5 M479.5 322.1 L478.8 322.3 M467.8 352.8 L466.4 350.9 L465.4 348.8 L465.9 346.5 L467.7 344.9 L468.3 342.8 L468.4 340.7 L467.7 338.8 L466.5 337.0 M475.0 336.4 L472.7 335.7 L470.8 337.0 L469.5 337.5 L468.6 338.5 L467.4 338.0 L466.5 337.0 M486.6 346.4 L487.3 344.6 M513.2 330.5 L513.0 328.2 L513.0 325.9 L514.2 323.9 L515.1 321.8 L517.2 320.5 L519.6 320.4 L520.4 318.0 L522.2 316.4 M513.2 330.5 L514.1 331.6 L514.1 333.0 L515.4 333.4 L516.3 334.3 L518.7 335.1 L521.1 335.4 M527.1 331.4 L525.5 332.3 L524.3 333.8 L523.0 335.1 L521.1 335.4 M527.1 331.4 L528.6 330.6 L528.8 328.9 L528.8 327.3 L528.5 325.8 L527.0 325.2 L525.5 325.9 L524.6 324.5 L522.9 324.5 L522.4 322.6 L522.4 320.6 L522.8 318.6 L522.4 316.6 M522.4 316.6 L522.2 316.4 M525.9 342.4 L523.7 341.4 L523.3 339.0 L522.6 337.0 L521.1 335.4 M512.4 330.8 L513.2 330.5 M530.5 331.3 L528.8 330.9 L527.1 331.4 M530.5 321.6 L528.7 321.4 L527.7 319.9 L526.6 321.4 L524.8 321.6 L523.8 320.6 L522.8 319.5 L522.5 318.0 L522.4 316.6 M528.2 310.3 L527.8 311.5 L527.6 312.7 L527.7 314.0 L527.1 315.2 L526.7 316.9 L525.2 317.8 L523.5 317.5 L522.2 316.3 M522.2 316.3 L522.2 316.4 M501.7 308.9 L501.9 310.6 L502.6 312.2 L500.7 313.7 L502.1 315.6 L503.1 317.0 L503.9 318.5 L504.2 320.2 L505.4 321.5 M501.7 308.9 L502.8 309.3 L504.0 309.9 L504.9 308.8 L506.4 308.8 L506.1 307.3 L506.9 306.0 L508.3 305.5 L509.7 305.5 M505.4 321.5 L504.8 319.3 L504.9 316.9 L506.4 315.2 L508.6 314.1 L511.0 314.1 L512.1 312.0 L514.2 312.5 L516.2 311.7 M509.7 305.5 L510.9 306.1 L511.9 306.9 L513.3 306.5 L514.6 307.0 L514.3 308.7 L516.0 309.1 L516.2 310.4 L516.2 311.7 M495.3 309.4 L496.8 308.5 L498.4 308.0 L499.9 308.8 L501.7 308.9 M505.5 324.6 L505.4 323.1 L505.4 321.5 M510.4 302.4 L510.3 304.0 L509.7 305.5 M522.2 316.3 L520.1 316.3 L518.3 315.2 L516.3 314.1 L516.2 311.7 M528.7 288.3 L530.2 289.8 M530.2 289.8 L530.7 291.8 L531.1 293.8 M524.0 290.1 L525.3 289.9 L526.5 289.4 L527.5 288.8 L528.7 288.3 M288.2 267.9 L287.1 269.6 L287.5 271.5 M288.2 267.9 L289.5 267.2 L290.5 266.1 L290.9 264.6 L292.3 263.9 M287.5 271.5 L289.3 270.1 L291.5 269.5 L293.9 270.0 L296.0 269.0 M292.5 263.9 L294.4 264.2 L296.3 264.8 M292.5 263.9 L292.3 263.9 M296.3 264.8 L296.3 266.9 L296.0 269.0 M287.2 272.1 L287.5 271.5 M285.5 264.7 L287.1 266.1 L288.2 267.9 M285.4 260.9 L287.1 262.2 L288.1 264.2 L290.2 263.4 L292.3 263.9 M296.3 269.7 L296.0 269.0 M303.2 259.9 L301.5 261.2 L299.6 262.2 L297.3 262.7 L296.3 264.8 M288.8 243.6 L288.5 244.9 L288.2 246.3 L287.2 247.4 L287.3 248.9 L286.7 250.2 L286.7 251.6 L287.9 253.0 L286.8 254.4 L287.9 255.5 L289.4 256.0 L290.3 257.2 L291.7 257.9 L292.8 259.3 L292.0 260.9 L292.3 262.4 L292.5 263.9 M621.7 214.8 L620.2 215.4 L618.6 214.8 L618.0 213.4 L618.0 211.8 L617.4 209.5 L616.7 207.3 M622.7 214.5 L623.0 213.1 L623.4 211.8 L623.4 210.4 L624.0 209.1 L623.1 208.0 L623.3 206.5 L623.3 205.1 L622.8 203.8 M616.7 207.3 L618.5 206.9 L619.7 205.4 L621.4 204.9 L622.8 203.8 M633.1 206.7 L631.9 206.1 L630.7 205.4 L629.6 204.7 L628.4 203.9 L626.5 204.4 L624.7 203.5 L626.0 201.7 L624.9 199.8 M624.9 199.8 L623.8 201.8 L622.8 203.8 M610.0 221.9 L608.9 221.2 L608.0 220.1 L608.0 218.8 L608.5 217.5 L607.9 215.0 L608.8 212.7 L608.1 211.4 L608.2 210.0 L607.4 208.5 L605.7 208.8 L604.3 208.7 L603.3 207.6 L601.9 207.4 L600.7 208.1 M610.0 222.1 L608.8 222.7 L607.9 223.7 L606.6 223.6 L605.5 222.7 L604.1 222.7 L603.0 221.7 L602.5 223.1 L601.0 223.4 L599.0 224.9 L596.6 224.5 L595.3 225.1 L594.0 224.7 L593.0 225.7 L592.7 226.9 M591.3 216.3 L592.1 217.5 L593.1 218.6 L593.9 219.9 L593.9 221.4 L593.6 222.9 L592.6 224.0 L591.9 225.5 L592.7 226.9 M592.5 209.7 L593.6 208.5 L595.1 208.8 L596.6 208.3 L596.7 206.7 M600.7 208.1 L598.8 207.2 L596.7 206.7 M616.7 207.3 L615.5 206.6 L614.2 206.1 L613.6 205.0 L612.8 203.8 M612.8 203.8 L611.7 202.9 L610.2 203.1 L609.0 204.2 L607.5 204.0 L606.5 205.0 L605.2 205.3 L604.6 206.8 L603.1 207.1 M600.7 208.1 L601.8 207.2 L603.1 207.1 M592.6 191.6 L594.5 193.0 L594.9 195.3 M567.9 207.9 L570.0 208.6 M596.7 206.7 L596.7 205.2 L596.3 203.8 L596.4 202.4 L596.6 200.9 L596.4 199.4 L595.9 198.1 L595.0 196.8 L594.9 195.3 M589.1 266.7 L589.9 268.9 L590.4 271.3 L591.2 273.6 L591.2 276.0 M589.1 266.7 L590.8 267.1 L592.4 266.7 L594.2 267.5 L595.6 266.2 L596.8 267.3 L598.1 268.2 L599.9 268.5 L600.9 269.9 M591.2 276.0 L592.8 277.0 L594.3 275.8 L595.5 274.7 L596.3 273.2 L597.9 274.4 L599.7 273.6 L601.7 272.9 L601.6 270.7 M600.9 269.9 L601.6 270.7 M604.0 272.0 L603.0 271.0 L601.6 270.7 M604.6 283.4 L603.4 284.4 L601.9 284.8 M588.1 282.0 L589.7 280.9 L589.9 279.1 L590.2 277.4 L591.2 276.0 M588.1 282.0 L590.2 282.1 L591.9 283.3 L594.0 283.6 L595.8 284.6 M601.9 284.8 L600.1 284.9 L598.8 286.3 L597.1 285.8 L595.8 284.6 M599.5 264.6 L600.1 262.4 L600.5 260.2 M600.5 260.2 L600.7 259.9 M599.5 264.6 L599.8 266.0 L599.7 267.4 L600.8 268.4 L600.9 269.9 M531.8 289.8 L533.7 289.5 M531.8 289.8 L534.0 289.7 L536.2 289.4 L538.3 290.3 L539.8 292.0 L541.1 293.8 L541.9 295.9 L543.8 297.0 L546.1 297.3 M533.7 289.5 L534.9 289.0 L535.7 287.8 L537.0 287.6 L538.0 286.6 L539.0 287.7 L539.6 289.0 L541.1 289.0 L542.4 289.4 L544.3 290.6 L545.9 292.2 L547.5 293.8 L549.5 294.7 M546.1 297.3 L548.2 296.5 L549.5 294.7 M544.7 306.1 L545.2 303.7 L546.8 301.9 L546.4 300.4 L547.7 299.4 L546.7 298.4 L546.1 297.3 M530.2 289.8 L531.8 289.8 M551.9 307.2 L551.2 305.7 L550.9 304.0 L551.2 302.2 L550.2 300.7 L550.4 298.9 L549.7 297.2 L549.8 295.3 L551.2 294.0 M551.2 294.0 L549.5 294.7 M533.7 289.5 L535.5 289.9 L537.1 289.0 L538.5 287.7 L540.4 287.7 L541.4 286.9 L542.8 286.9 L542.9 285.6 L543.2 284.3 L545.3 285.2 L547.2 286.3 M551.2 294.0 L552.5 293.4 L552.8 291.9 M552.8 291.9 L552.5 289.8 L550.7 288.5 L549.4 286.6 L547.2 286.3 M528.7 288.3 L528.8 285.8 L529.4 283.4 L530.2 282.3 L530.1 280.8 L529.5 279.7 L528.6 278.6 M545.1 270.4 L546.4 270.6 L547.7 270.4 L548.9 270.7 L549.9 271.5 L548.5 272.6 L549.5 274.0 L550.1 275.2 L550.8 276.3 M528.6 278.6 L530.4 278.4 L531.1 280.1 L532.1 279.0 L533.4 278.4 L534.8 278.2 L536.1 278.0 L536.0 276.4 L537.4 275.5 L538.6 274.8 L539.1 273.6 L540.4 274.1 L541.7 273.7 L543.2 271.8 L545.1 270.4 M547.2 286.3 L547.2 284.9 L547.6 283.4 L547.1 282.0 L546.9 280.6 L547.4 279.2 L548.4 278.0 L549.3 276.8 L550.8 276.3 M509.9 285.6 L510.4 284.2 L511.7 283.6 L513.1 283.7 L514.3 283.0 L515.5 282.1 L516.2 280.9 L516.5 279.4 L515.7 278.1 L516.6 275.8 L517.4 273.5 L516.6 271.1 L516.4 268.7 M528.6 278.6 L526.9 278.6 L526.3 277.1 L525.6 275.6 L524.1 275.3 L523.1 274.2 L521.9 273.2 L522.1 271.7 L521.9 270.2 M521.9 270.2 L520.5 269.9 L519.1 269.5 L517.6 269.5 L516.4 268.7 M499.2 269.7 L501.4 268.5 L502.7 266.4 L505.0 265.8 L506.9 264.2 M516.4 268.7 L515.0 269.7 L513.5 268.8 L512.0 268.8 L510.6 268.8 L509.1 268.0 L508.8 266.5 L508.4 264.9 L506.9 264.2 M491.0 271.2 L489.0 269.9 L486.7 269.8 L484.7 267.8 L485.9 265.3 L484.1 266.5 L482.0 265.9 L480.1 265.2 L478.2 265.0 L477.2 263.3 L476.1 261.9 L474.7 260.4 L474.6 258.4 L474.5 256.5 L474.1 254.6 L474.1 252.6 L475.4 251.0 M504.8 251.2 L506.3 252.8 L505.4 254.7 L505.0 256.9 L506.8 258.0 M506.8 258.0 L507.1 259.9 L505.7 261.1 L506.8 262.5 L506.9 264.2 M601.3 248.0 L600.6 247.9 M600.5 260.2 L598.6 260.0 L596.7 260.4 L595.0 259.4 L593.1 259.4 M600.6 247.9 L599.0 249.2 L596.8 248.9 L595.7 250.5 L594.8 252.3 L594.1 254.0 L594.2 255.9 L593.8 257.7 L593.1 259.4 M599.5 264.6 L597.6 264.0 L596.8 265.9 L595.2 266.1 L593.7 266.2 L593.2 264.6 L592.8 263.0 L591.3 262.4 L590.0 261.4 M593.1 259.4 L591.5 260.4 L590.0 261.4 M587.1 264.4 L588.2 265.4 L589.1 266.7 M587.1 264.4 L587.0 262.1 M587.0 262.1 L588.6 262.2 L590.0 261.4 M589.1 236.6 L588.5 235.0 L589.9 233.9 L591.0 233.1 L591.5 231.7 M589.1 236.6 L586.9 237.0 L584.7 237.2 L582.7 236.2 L580.5 236.3 L578.5 237.4 L576.2 237.0 L573.8 237.0 L572.3 238.8 M580.0 223.2 L578.4 223.8 L577.7 225.3 L576.1 224.6 L574.6 225.4 L573.9 227.1 L572.2 227.4 L570.7 228.2 L569.1 227.5 L570.6 228.3 L571.6 229.6 L572.0 231.2 L571.8 232.8 L572.7 234.3 L573.9 235.6 L572.4 236.8 L572.3 238.7 M580.0 223.2 L581.9 222.2 L584.1 222.0 L586.2 221.3 L588.3 221.9 L590.0 223.4 L590.1 225.7 L590.4 227.9 L591.6 229.7 M591.6 229.7 L591.5 231.7 M572.3 238.8 L572.3 238.7 M600.6 247.9 L599.1 248.2 L597.8 247.4 L596.6 246.5 L595.3 245.9 M595.3 245.9 L595.0 244.4 L594.7 242.9 L593.2 242.4 L592.0 241.3 L592.0 239.7 L592.0 238.0 L590.6 237.2 L589.1 236.6 M600.5 232.7 L599.2 232.5 L598.0 232.0 L596.8 231.4 L596.2 230.2 L594.7 230.4 L593.4 229.5 L593.0 231.0 L591.5 231.7 M580.0 223.1 L580.0 223.2 M566.6 210.5 L567.0 213.1 L565.8 215.3 L567.5 217.2 L567.8 219.7 L569.9 221.8 L570.6 224.8 L573.4 223.9 L576.3 223.3 L575.4 226.0 L573.0 227.7 L576.1 228.6 L576.8 231.7 L575.6 233.4 L574.5 235.2 L573.7 237.2 L572.3 238.7 M592.7 226.9 L592.6 228.5 L591.6 229.7 M652.9 284.9 L650.9 284.8 L649.4 283.4 L650.7 281.6 L649.7 279.6 M652.9 284.9 L654.1 286.0 L655.5 285.1 L656.8 284.7 L657.4 283.4 L658.8 285.3 L660.5 286.9 M649.7 279.6 L651.1 279.8 L652.4 279.5 L653.6 280.3 L654.0 281.7 L655.2 280.7 L655.6 279.2 L657.2 279.2 L658.5 280.2 L659.5 277.9 L661.9 277.5 L664.0 276.4 L665.0 274.3 M660.5 286.9 L662.4 286.0 L664.4 285.6 L665.5 283.7 L667.5 282.9 M667.5 282.9 L666.3 281.0 L665.0 279.0 L664.3 276.7 L665.0 274.3 M648.2 292.0 L649.0 289.8 L649.1 287.5 L651.1 286.4 L652.9 284.9 M658.6 300.8 L659.2 298.8 L661.1 297.9 L661.5 296.1 L661.8 294.2 L659.9 293.0 L659.9 290.8 L660.2 288.9 L660.5 286.9 M658.6 300.8 L657.5 301.4 L656.2 301.7 M665.0 265.3 L665.2 267.6 L664.5 269.8 L664.3 272.1 L665.0 274.3 M660.7 264.2 L659.3 264.0 L658.4 265.3 L658.0 266.5 L657.3 267.5 L658.1 269.1 L657.1 270.5 L655.5 270.3 L654.2 271.2 L652.9 270.2 L651.3 270.6 L650.0 271.3 L648.6 271.6 L647.7 272.9 L648.0 274.4 L646.9 275.4 L646.3 276.7 M646.3 276.7 L647.8 278.5 L649.7 279.6 M666.0 302.6 L664.2 301.8 L662.5 300.9 L660.5 302.1 L658.6 300.8 M667.8 283.1 L667.5 282.9 M633.3 268.4 L635.0 267.7 L636.7 266.8 L636.9 264.8 L638.1 263.3 M633.3 268.4 L632.3 270.4 L630.7 271.9 M630.7 271.9 L632.4 273.6 L633.1 276.0 L634.4 276.2 L635.7 276.1 L636.3 277.4 L637.5 278.1 M640.9 265.6 L640.1 266.9 L639.7 268.3 L640.0 269.7 L640.2 271.2 L641.7 271.9 L643.2 272.7 L643.4 274.5 L642.8 276.1 M640.9 265.6 L640.2 263.7 L638.1 263.3 M642.8 276.1 L641.3 277.4 M641.3 277.4 L639.4 278.1 L637.5 278.1 M621.6 269.1 L623.2 269.0 L624.5 270.1 L625.8 269.1 L627.5 269.4 L628.9 270.5 L630.6 270.2 L631.4 268.5 L633.3 268.4 M634.3 258.3 L634.6 260.0 L636.1 260.8 L637.5 261.7 L638.1 263.3 M621.6 269.8 L623.8 270.4 L626.1 270.9 L628.4 271.0 L630.7 271.9 M627.2 284.1 L626.5 281.9 L627.5 279.9 L629.7 279.7 L631.7 280.1 L633.5 280.5 L634.7 279.2 L636.5 279.9 L637.5 278.1 M646.3 276.7 L644.7 275.6 L642.8 276.1 M654.4 259.2 L653.1 260.7 L651.6 262.1 L649.5 261.3 L647.5 262.1 L645.8 263.0 L644.3 264.1 L642.2 264.1 L640.9 265.6 M641.4 292.5 L641.1 290.1 L639.0 289.1 L639.3 287.0 L638.7 284.9 L640.1 283.4 L641.2 281.6 L640.5 279.5 L641.3 277.4 M546.2 264.7 L545.8 263.3 L545.1 262.0 L545.2 260.6 L544.8 259.2 L543.3 258.9 L542.4 257.5 L541.1 256.9 L539.7 256.7 M552.8 249.1 L551.6 250.3 L550.0 251.1 L548.2 251.8 L547.8 253.7 L546.0 254.0 L544.3 254.1 L542.6 253.6 L540.9 252.9 M540.9 252.9 L541.7 255.3 L539.7 256.7 M521.9 270.2 L522.2 268.2 L523.5 266.8 L524.3 265.0 L525.4 263.4 L526.8 262.1 L528.0 260.5 L529.3 259.1 L530.0 257.3 M545.1 270.4 L546.4 269.4 L546.7 267.9 L546.3 266.4 L546.2 264.9 M539.7 256.7 L537.3 256.7 L534.8 256.5 L532.5 257.3 L530.0 257.3 M506.8 258.0 L508.1 257.1 L508.6 255.7 L509.1 254.3 L510.0 253.2 L511.2 252.2 L512.7 252.1 L514.1 251.3 L515.6 252.0 L516.4 250.4 L518.1 250.4 L519.7 250.2 L520.4 248.7 L521.7 249.3 L523.1 249.9 L524.5 249.4 L526.0 249.6 M530.0 257.3 L529.3 255.2 L529.2 252.9 L528.9 251.5 L528.7 250.2 L527.4 249.7 L526.0 249.6 M518.4 235.4 L519.1 237.4 L520.4 239.1 L522.2 240.1 L524.2 240.5 L524.3 242.9 L523.0 244.8 L524.5 244.2 L525.6 245.4 L526.2 246.7 L526.1 248.1 M526.1 248.1 L526.0 249.6 M540.9 252.9 L540.1 250.9 L539.8 248.7 L540.2 246.6 L539.9 244.4 M557.3 238.2 L556.4 236.7 L554.9 236.2 M554.9 236.2 L552.8 237.5 L550.4 237.9 L550.0 239.2 L550.2 240.5 L549.1 241.1 L548.5 242.3 L546.2 243.2 L544.0 242.4 L542.7 242.2 L541.4 242.4 L541.0 243.6 L539.9 244.4 M572.1 238.9 L570.9 239.2 L569.8 239.7 L568.6 240.2 L567.4 240.6 M572.1 238.9 L572.3 238.8 M550.8 226.6 L551.3 228.6 M554.9 236.2 L554.6 233.7 L552.3 232.8 L551.4 230.8 L551.3 228.6 M526.1 248.1 L527.6 247.7 L529.0 247.1 L530.3 245.8 L532.1 246.3 L533.9 247.4 L535.9 246.5 L536.6 244.7 L537.4 243.0 M539.9 244.4 L538.9 243.2 L537.4 243.0 M668.1 314.1 L666.2 314.3 L664.8 315.5 L663.3 316.4 L661.7 317.2 M646.9 313.2 L648.2 312.6 L649.7 312.6 L651.1 312.5 L652.5 313.2 L654.1 313.7 L655.6 314.5 L655.2 316.2 L655.4 318.0 M661.7 317.2 L660.1 317.6 L658.5 317.2 L656.7 316.7 L655.4 318.0 M635.7 336.7 L635.6 335.4 M624.7 325.2 L625.9 325.8 L626.9 326.5 L628.2 326.5 L629.3 327.2 L631.3 328.7 L633.5 330.0 M635.6 335.4 L634.1 334.7 L633.6 333.1 L632.5 331.6 L633.5 330.0 M645.7 313.9 L644.7 316.0 L644.6 318.3 L644.4 320.6 L644.0 322.9 M633.5 330.0 L634.9 329.1 L635.7 327.6 L636.8 326.4 L638.2 325.6 L639.7 325.1 L641.1 324.2 L642.5 323.4 L644.0 322.9 M592.7 308.5 L592.9 307.9 M586.8 299.7 L588.9 300.5 L591.2 300.8 M591.2 300.8 L591.4 302.1 L591.4 303.5 L591.2 305.1 L592.7 305.8 M592.9 307.9 L592.7 305.8 M599.6 308.2 L598.7 307.2 L597.9 306.2 L597.7 304.9 L597.3 303.6 M592.9 307.9 L593.5 306.4 L595.0 305.7 L596.2 304.7 L597.3 303.6 M590.7 294.2 L592.0 293.1 L593.6 293.0 M590.7 294.2 L591.5 295.5 L592.8 296.5 L593.3 298.1 L594.6 299.1 M593.6 293.0 L595.4 293.8 L596.8 295.2 L597.5 297.5 L599.9 297.4 M594.6 299.1 L596.0 299.0 L597.4 299.0 M597.4 299.0 L599.5 298.6 M599.5 298.6 L600.1 298.2 M600.1 298.2 L599.9 297.4 M581.9 292.5 L582.5 291.2 L582.8 289.9 L584.4 289.6 L584.9 288.1 L583.5 287.6 L582.9 286.2 L583.0 284.8 L582.3 283.5 M583.5 293.8 L585.0 295.4 L587.0 296.0 L589.0 295.4 L590.7 294.2 M588.1 282.0 L586.7 282.5 L585.4 283.3 L583.8 282.9 L582.3 283.5 M595.8 284.6 L595.8 286.0 L596.8 287.0 L596.5 288.3 L595.3 289.0 L595.4 291.4 L593.6 293.0 M591.2 300.8 L592.7 299.7 L594.6 299.1 M601.9 284.8 L601.8 286.7 L601.6 288.6 L599.4 288.7 L598.6 290.7 L598.8 292.5 L598.8 294.2 L599.8 295.6 L599.9 297.4 M592.7 305.8 L592.8 304.3 L594.0 303.5 L593.6 302.3 L593.2 301.1 L594.4 300.6 L595.6 300.7 L596.5 299.8 L597.4 299.0 M597.3 303.6 L598.3 302.6 L599.3 301.5 L600.0 300.1 L599.5 298.6 M603.8 300.3 L602.3 298.5 L600.1 298.2 M429.9 274.2 L429.5 275.6 L429.4 277.1 L428.0 277.8 L426.7 278.4 L427.9 279.4 L427.7 280.9 L428.1 282.2 L428.3 283.5 M429.9 274.2 L431.1 274.9 L431.9 276.2 L433.3 276.3 L434.6 276.6 L436.0 276.4 L437.1 275.6 L438.3 274.9 L439.7 274.8 M439.7 274.8 L441.1 276.2 L441.7 278.2 M441.7 278.2 L439.6 278.4 L439.0 280.5 L438.1 282.1 L437.7 283.9 L436.0 283.1 L434.2 283.2 L432.6 284.3 L430.7 284.0 M430.7 284.0 L428.3 283.5 M446.4 282.7 L446.2 280.9 L444.5 280.0 L443.5 278.6 L441.7 278.2 M437.9 296.3 L437.9 294.2 L438.8 292.2 L440.9 291.3 L441.7 289.2 L442.6 287.4 L443.3 285.5 L445.0 284.2 L446.4 282.7 M437.9 296.3 L436.5 295.0 L434.8 294.1 L433.8 292.5 L433.7 290.5 L433.3 288.6 L431.7 287.5 L431.6 285.6 L430.7 284.0 M437.5 297.2 L437.9 296.3 M426.5 284.5 L428.3 283.5 M465.3 250.3 L464.9 251.8 L465.4 253.4 L464.7 254.9 L463.3 255.7 L462.1 254.7 L460.5 254.7 L458.9 254.5 L457.5 255.3 M465.3 250.3 L465.8 252.0 L465.8 253.8 L465.3 255.6 L464.2 257.0 L462.3 257.2 L460.7 257.9 L459.9 259.6 L458.4 260.7 L460.0 261.3 L461.4 262.4 L462.6 263.8 L462.3 265.7 L461.3 267.4 L461.4 269.4 L463.1 270.3 L464.5 271.6 M457.5 255.3 L456.1 256.3 L454.7 257.3 L453.4 258.5 L453.4 260.4 L451.3 260.5 L451.0 262.6 L449.6 263.6 L448.9 265.1 M448.9 265.1 L450.8 265.7 L452.5 266.8 L452.2 269.2 L454.2 270.4 L453.9 272.4 L454.8 274.1 L455.7 276.0 L454.7 277.9 M464.5 271.6 L463.5 272.8 L462.1 273.7 L460.5 273.7 L459.0 273.8 L457.1 274.8 L457.8 276.8 L456.5 278.0 L454.7 277.9 M435.5 258.9 L436.1 256.6 L435.1 254.4 L433.6 254.6 L432.3 255.3 L432.1 253.7 L430.9 252.6 L429.7 251.0 L428.5 249.4 L428.0 247.3 L428.6 245.3 M435.5 258.9 L436.2 259.5 M436.2 259.5 L438.0 259.8 L439.3 261.0 L440.9 259.9 L442.7 260.2 L444.1 259.2 L445.3 257.9 L445.6 256.2 L446.3 254.7 L447.7 253.9 L449.3 253.9 L450.8 254.4 L451.9 255.5 L453.3 256.1 L454.7 256.7 L455.9 255.5 L457.5 255.3 M428.7 245.2 L428.6 245.3 M466.8 247.1 L466.4 248.9 L465.3 250.3 M479.3 285.5 L478.5 284.3 L478.1 283.0 L478.3 281.6 L477.7 280.2 L476.8 279.2 L476.0 278.0 L475.1 277.0 L474.7 275.6 L472.9 275.8 L471.0 276.0 L469.2 276.4 L467.9 277.9 L468.5 275.3 L469.7 272.8 L467.2 271.6 L464.5 271.6 M440.6 268.3 L442.3 266.8 L444.6 266.3 L446.6 265.1 L448.9 265.1 M436.2 259.5 L437.5 261.6 L438.9 263.6 L438.3 265.0 L438.2 266.5 L439.6 267.2 L440.6 268.3 M440.6 268.3 L440.2 270.1 L438.9 271.4 L438.8 273.2 L439.7 274.8 M446.4 282.7 L448.3 282.8 L450.3 282.6 M450.3 282.6 L451.4 281.4 L452.1 279.8 L453.8 279.4 L454.7 277.9 M450.3 282.6 L451.9 282.5 L452.8 284.0 L452.7 285.4 L452.5 286.9 L454.6 288.0 L456.4 289.6 M456.4 289.6 L458.1 290.3 L459.8 290.3 L461.7 290.5 L463.1 289.3 L463.1 291.2 L464.9 292.0 L466.4 292.9 L467.3 294.3 M391.2 340.7 L392.2 339.7 L392.6 338.3 L393.8 337.4 L394.7 336.3 M413.2 343.1 L411.0 342.6 L408.8 343.0 L407.0 341.7 L405.1 340.6 L403.8 338.8 L402.8 336.8 L402.6 334.7 L402.6 332.5 M394.7 336.3 L396.8 335.5 L398.5 334.1 L400.8 333.8 L402.6 332.5 M430.1 342.4 L431.5 340.7 L432.5 338.8 L430.9 337.3 L429.4 335.7 L431.1 334.6 L432.8 333.5 L431.7 331.7 L432.1 329.5 M411.4 320.8 L412.9 319.5 L414.9 318.9 L416.7 317.5 L418.8 318.6 L420.8 318.8 L422.4 320.2 L423.3 322.1 L425.4 322.7 M432.1 329.5 L431.4 328.4 L430.1 328.0 L429.6 326.8 L429.3 325.6 L427.8 325.5 L426.3 325.5 L426.6 323.8 L425.4 322.7 M408.3 322.9 L407.4 325.2 L405.5 326.9 L404.2 328.9 L403.0 331.0 M403.0 331.0 L402.6 332.5 M402.1 290.7 L403.7 289.7 L405.6 289.4 M402.1 290.7 L402.0 292.0 L401.7 293.3 L401.3 294.7 L401.8 296.0 L401.3 297.5 L401.2 299.1 L402.0 300.6 L403.7 301.0 M405.6 289.4 L406.9 290.3 L408.1 291.4 L409.6 291.5 L411.2 291.6 M403.7 301.0 L405.1 301.6 L406.6 301.1 L407.8 299.9 L409.4 300.3 L409.8 298.5 L411.5 298.0 L412.8 296.7 L412.0 295.1 M411.2 291.6 L412.1 292.7 L413.3 293.5 M413.3 293.5 L412.0 295.1 M402.1 302.9 L403.7 301.0 M401.3 290.8 L402.1 290.7 M393.3 303.2 L394.6 301.7 L395.8 300.1 L397.3 298.6 L399.4 298.3 L399.5 296.3 L399.2 294.2 L400.1 292.4 L401.3 290.8 M393.3 303.2 L395.5 303.8 L397.6 304.7 M412.8 280.2 L411.3 279.6 M412.8 280.2 L411.5 281.3 L411.1 282.9 L410.6 284.8 L412.2 285.9 L412.3 287.4 L411.9 288.8 L411.4 290.1 L411.2 291.6 M404.2 281.0 L405.0 283.3 L403.7 285.4 L404.2 287.7 L405.6 289.4 M409.1 305.5 L409.8 304.3 L410.1 302.9 L410.0 301.5 L410.1 300.2 L410.2 298.8 L410.4 297.4 L411.7 296.5 L412.0 295.1 M417.5 309.1 L417.1 310.3 L416.9 311.5 L415.7 311.9 L414.5 312.3 M415.4 293.9 L413.3 293.5 M403.1 266.3 L404.0 264.4 L405.1 262.6 M405.1 262.6 L405.1 261.1 L404.6 259.6 L404.1 258.2 L403.6 256.9 M384.8 257.8 L386.5 256.1 L386.2 253.6 M403.6 256.9 L402.1 255.5 L400.3 256.2 L399.7 254.6 L399.5 252.9 L399.0 254.4 L397.8 255.4 L396.3 255.9 L394.8 255.9 L392.7 255.2 L390.6 254.4 L388.6 253.0 L386.2 253.6 M372.8 235.9 L373.3 237.4 L373.5 238.9 L373.8 240.4 L373.9 241.9 M373.9 241.9 L374.3 244.1 L376.4 244.8 L378.0 245.9 L379.1 247.5 L381.0 247.7 L382.8 248.6 L384.7 249.1 L386.1 250.5 M385.3 238.6 L387.0 239.1 L386.9 240.8 L387.7 242.1 L386.9 243.5 L388.7 244.2 L388.0 246.0 L388.0 247.4 L387.1 248.6 M387.1 248.6 L386.1 250.5 M369.2 248.8 L370.8 247.4 L372.2 245.8 L371.8 243.4 L373.9 241.9 M370.0 250.7 L369.2 248.8 M370.0 250.7 L370.9 249.8 L371.4 248.6 L372.6 248.2 L373.8 247.8 L376.2 247.4 L378.5 246.9 L380.3 248.6 L382.7 249.1 L384.3 250.8 L386.0 252.4 M386.1 250.5 L386.0 252.4 M369.0 257.0 L371.0 256.1 L372.3 254.3 L371.3 252.5 L370.0 250.7 M386.0 252.4 L386.2 253.6 M429.9 274.2 L428.5 273.6 L427.3 272.9 M420.8 282.0 L420.1 280.2 M420.1 280.2 L420.4 278.9 L420.6 277.5 L421.9 276.8 L422.9 275.7 L424.4 275.8 L425.9 275.5 L427.0 274.4 L427.3 272.9 M412.8 280.2 L415.0 279.7 L417.0 278.7 M420.1 280.2 L418.5 279.6 L417.0 278.7 M435.5 258.9 L433.8 259.8 L432.0 260.4 L430.9 262.0 L429.5 263.3 L429.8 265.5 L427.7 266.5 L426.5 267.9 L425.6 269.6 M425.6 269.6 L427.3 270.8 L427.3 272.9 M425.6 310.6 L425.8 312.3 L425.8 314.1 L427.5 314.5 L429.3 314.6 M440.4 303.4 L441.8 304.3 L441.7 305.9 L442.1 307.5 L443.6 308.0 M429.3 314.6 L431.6 315.1 L433.5 313.5 L435.3 312.1 L435.7 309.8 L435.8 308.2 L436.3 306.8 L437.1 305.3 L438.7 304.9 L439.5 306.4 L441.1 306.4 L442.0 307.8 L443.6 308.0 M425.4 322.7 L425.4 321.3 L426.3 320.4 L427.3 319.6 L427.8 318.3 M429.3 314.6 L428.0 316.3 L427.8 318.3 M379.1 289.5 L380.4 290.6 L381.9 290.0 L382.3 291.6 L384.0 291.9 L384.3 293.5 L385.4 294.6 L387.0 294.6 L388.4 295.1 M384.2 281.2 L385.7 281.3 L386.8 282.3 L388.0 283.4 L389.6 282.8 M389.6 282.8 L390.5 284.2 L391.3 285.7 L391.3 287.4 L391.3 289.1 L389.4 289.7 L388.2 291.3 L388.8 293.2 L388.4 295.1 M395.1 280.1 L393.0 281.3 L391.3 282.9 M389.6 282.8 L391.3 282.9 M392.0 303.3 L392.6 301.1 L391.2 299.5 L389.3 298.3 L389.5 296.0 M392.0 303.3 L390.2 304.7 M390.2 304.7 L388.0 305.4 L386.0 306.5 L384.0 305.1 L381.5 305.3 L380.3 304.4 L379.9 303.0 L378.6 303.5 L377.3 304.2 L375.1 303.9 L373.3 302.7 M373.3 302.7 L372.3 301.9 L371.3 301.2 L370.3 300.3 L369.8 299.1 L369.6 297.9 L369.5 296.6 L369.7 295.3 L370.4 294.2 M389.5 296.0 L388.4 295.1 M360.2 251.1 L362.4 251.6 L364.6 251.1 L366.3 249.8 L368.0 248.4 M360.2 251.1 L359.5 249.5 L359.9 247.8 L361.7 248.0 L363.1 246.7 L362.9 245.3 L361.8 244.3 L362.2 243.0 L362.2 241.6 M362.2 241.6 L363.6 243.3 L364.9 245.2 L367.1 246.1 L368.0 248.4 M354.3 256.2 L354.3 254.9 L353.8 253.6 L354.8 252.8 L355.9 252.0 L358.1 251.8 L360.2 251.1 M369.2 248.8 L368.0 248.4 M342.8 247.2 L341.3 246.5 L340.8 244.9 M358.1 231.6 L358.4 233.1 L358.0 234.5 L359.2 235.4 L360.0 236.7 L359.8 238.4 L361.4 239.0 L361.2 240.5 L362.2 241.6 M354.0 292.4 L352.8 292.6 M358.1 281.3 L357.0 279.1 L356.3 276.8 L353.9 277.3 L351.7 278.5 L351.5 280.7 L351.6 283.0 L349.4 283.7 L347.1 283.6 M347.1 283.6 L348.6 284.3 L348.3 286.0 L348.9 287.2 L349.8 288.2 L351.2 288.7 L351.7 290.1 L352.5 291.2 L352.8 292.6 M328.3 278.0 L330.4 277.4 L331.1 275.4 L333.0 275.3 L334.7 274.5 L335.0 272.6 L336.4 271.3 L336.9 269.5 L338.3 268.2 M328.3 278.0 L328.5 280.0 L330.0 281.4 M330.0 281.4 L331.3 281.7 L332.7 281.8 L334.1 282.2 L335.4 281.8 L336.8 282.1 L338.0 282.8 L339.5 282.8 L340.8 282.5 M339.1 268.3 L340.4 269.2 L340.3 270.7 L341.4 271.5 L342.2 272.5 L343.0 273.9 L342.3 275.4 L343.7 276.0 L344.5 277.2 M339.1 268.3 L338.3 268.2 M344.5 277.2 L343.5 279.4 L342.6 281.7 M342.6 281.7 L340.8 282.5 M328.4 253.4 L330.5 254.8 L332.7 255.9 L333.6 256.8 L334.5 257.7 L335.7 258.1 L337.0 258.4 L337.2 259.7 L337.7 260.8 L338.0 262.1 L338.6 263.2 L337.9 264.3 L337.9 265.7 L337.8 267.0 L338.3 268.2 M321.2 270.7 L322.3 271.4 L322.9 272.6 L323.5 273.7 L324.6 274.5 L325.4 275.7 L325.7 277.1 L326.9 277.8 L328.3 278.0 M343.0 266.1 L341.1 267.3 L339.1 268.3 M352.8 269.8 L352.4 271.3 L351.7 272.6 L350.2 273.0 L349.0 273.9 L347.6 274.2 L346.5 275.2 L345.8 276.5 L344.5 277.2 M347.1 283.6 L345.4 283.7 L344.0 284.5 L343.2 283.1 L342.6 281.7 M308.4 284.7 L309.2 286.3 L307.8 287.3 L308.7 288.4 L309.0 289.7 L310.2 290.6 L311.6 290.1 L312.9 290.3 L313.9 291.2 L315.7 292.6 L318.0 292.4 L319.3 292.1 L320.7 292.4 L321.8 293.3 L321.6 294.8 M304.9 304.8 L306.3 303.1 L308.4 302.0 L310.7 301.1 L312.0 299.1 L314.1 300.4 L316.6 300.8 L319.3 300.5 L321.1 298.6 M321.1 298.6 L321.0 296.7 L321.6 294.8 M330.0 281.4 L329.2 283.7 L328.6 286.1 L327.5 288.4 L326.0 290.3 M321.6 294.8 L322.9 293.8 L324.2 293.0 L324.4 291.2 L326.0 290.3 M471.3 204.0 L472.4 202.6 L471.2 201.3 L470.9 199.9 L470.6 198.6 L470.8 197.0 L470.8 195.5 L472.1 194.4 L473.7 194.1 M471.3 204.0 L471.0 202.3 L470.8 200.6 L469.1 200.6 L467.3 200.6 L466.2 201.4 L465.7 202.7 L464.5 203.3 L463.7 204.4 L462.3 202.8 L462.4 200.5 L460.5 199.8 L458.8 198.6 M459.3 197.5 L460.5 196.3 L462.3 196.7 L463.7 196.2 L465.2 195.7 L466.0 193.7 L468.0 194.1 L469.5 192.9 L469.2 191.0 M459.3 197.5 L458.8 198.6 M473.7 194.1 L471.8 192.7 L470.2 191.0 M469.2 191.0 L470.2 191.0 M473.0 213.7 L474.1 212.6 L474.8 211.4 L474.7 209.9 L474.8 208.4 L473.6 207.6 L472.9 206.3 L472.2 205.1 L471.3 204.0 M477.5 193.6 L475.6 193.6 L473.7 194.1 M452.6 203.9 L452.9 201.5 L454.2 199.5 L454.4 197.7 L456.1 197.0 L457.7 197.4 L458.8 198.6 M454.9 183.1 L455.2 185.0 L455.5 186.9 L456.1 188.7 L455.9 190.7 L457.1 192.5 L459.1 193.4 L458.7 195.5 L459.3 197.5 M455.3 182.5 L457.6 182.7 L459.8 182.4 L462.3 182.1 L464.2 183.6 L465.8 185.3 L467.9 186.5 L468.5 188.8 L469.2 191.0 M472.2 180.5 L471.3 181.7 L471.1 183.1 L470.0 184.1 L469.4 185.4 L469.1 187.2 L467.9 188.5 L469.1 189.7 L470.2 191.0 M620.6 192.0 L619.6 193.8 L619.5 195.8 L617.6 196.5 L616.2 198.1 M620.6 192.0 L621.6 190.4 L622.8 188.9 L622.5 187.0 L621.2 185.6 M616.2 198.1 L614.6 196.3 L612.4 197.0 L610.4 196.8 L608.4 196.7 M620.7 185.4 L619.2 185.5 L617.7 185.4 M620.7 185.4 L620.9 185.4 M617.7 185.4 L616.3 186.1 L614.7 186.1 L613.4 187.3 L611.7 186.7 L610.0 187.0 L609.2 188.6 L608.3 189.9 L607.6 191.3 M621.2 185.6 L620.9 185.4 M607.6 191.3 L607.4 192.7 L606.9 194.1 L607.3 195.6 L608.4 196.7 M612.8 203.8 L614.0 202.5 L615.5 201.5 L615.0 199.6 L616.2 198.1 M624.9 199.8 L623.7 197.9 L622.4 196.1 L622.1 193.8 L620.6 192.0 M623.5 185.1 L621.2 185.6 M603.1 207.1 L604.3 205.3 L604.6 203.3 L603.3 201.8 L602.2 200.0 L603.1 198.3 L604.7 197.2 L606.6 197.3 L608.4 196.7 M601.1 178.7 L602.4 178.7 L603.7 179.1 L604.2 180.4 L604.6 181.6 L606.8 182.4 L608.8 183.4 L611.2 183.6 L613.5 183.4 L614.8 184.0 L615.2 185.4 L616.4 186.0 L617.7 185.4 M610.6 171.5 L611.9 171.8 L613.1 171.3 L614.0 172.3 L615.2 172.8 L615.9 174.0 L615.9 175.3 L617.2 175.5 L618.0 176.7 L618.4 178.6 L616.5 179.2 L616.8 180.7 L616.0 182.1 L616.7 183.5 L618.3 183.8 L618.9 185.4 L620.7 185.4 M624.6 169.5 L620.9 185.4 M594.9 195.3 L597.1 194.6 L598.4 196.4 L600.3 196.5 L602.1 195.9 L603.1 194.1 L603.5 192.0 L605.6 192.2 L607.6 191.3 M583.4 269.1 L583.5 270.9 L583.4 272.7 L583.0 274.4 L582.6 276.1 L582.6 278.0 L583.2 279.7 L582.9 281.6 L581.8 283.1 M583.4 269.1 L581.1 270.1 L579.0 271.5 L579.0 269.9 L578.0 268.8 L576.5 268.8 L575.0 268.6 M575.0 268.6 L574.9 270.2 L576.0 271.3 L575.6 272.7 L576.0 274.1 L575.8 275.5 L575.8 277.0 L574.3 277.6 L574.1 279.3 M574.1 279.3 L575.9 280.5 L577.8 281.6 M577.8 281.6 L579.8 282.5 L581.8 283.1 M587.1 264.4 L587.2 266.2 L585.7 267.1 L584.2 267.7 L583.4 269.1 M582.3 283.5 L581.8 283.1 M559.9 278.3 L558.1 279.2 L557.7 281.1 L557.6 282.9 L557.3 284.6 L557.4 286.4 L558.1 288.0 L558.8 289.7 L558.0 291.4 M559.9 278.3 L560.9 276.6 L562.8 277.0 M567.6 278.8 L566.3 278.8 L565.1 278.2 L563.8 277.9 L562.8 277.0 M567.6 278.8 L567.3 280.7 L566.1 282.2 L567.7 283.9 L566.6 285.9 L568.2 287.4 L568.6 289.6 L567.6 291.5 L566.2 293.1 M558.0 291.4 L559.3 293.1 L561.2 294.2 L562.0 295.4 L561.8 296.8 L563.1 297.4 L564.5 296.9 M566.2 293.1 L565.5 295.1 L564.5 296.9 M564.5 296.9 L564.5 296.9 M550.8 276.3 L553.1 276.8 L555.3 277.7 L556.1 278.6 L557.4 278.9 L558.8 279.3 L559.9 278.3 M552.8 291.9 L554.6 292.2 L555.6 293.7 L556.8 292.5 L558.0 291.4 M563.0 274.5 L562.8 277.0 M561.6 267.8 L560.6 269.5 L561.1 271.4 L561.7 273.2 L563.0 274.5 M573.0 264.6 L571.1 266.0 L568.7 266.1 L568.0 268.5 L569.1 270.7 L567.8 271.9 L566.3 273.0 L564.4 273.2 L563.0 274.5 M573.0 264.6 L574.6 266.3 L575.0 268.6 M574.1 279.3 L572.6 278.5 L570.9 278.0 L569.4 278.9 L567.6 278.8 M577.8 281.6 L575.9 282.4 L574.6 284.1 L572.6 285.1 L572.0 287.3 L571.8 289.6 L570.5 291.6 L568.5 292.8 L566.2 293.1 M563.6 298.8 L564.5 296.9 M570.7 298.1 L568.7 297.3 L567.3 299.0 L565.8 298.2 L564.5 296.9 M581.0 252.2 L579.8 253.7 L578.0 254.3 L576.1 254.4 L574.6 255.7 L573.0 256.6 L571.1 256.7 L569.5 257.6 L567.8 258.2 M581.0 252.2 L582.2 253.9 L584.0 255.2 M584.0 255.2 L583.8 256.9 L584.1 258.5 M584.1 258.5 L582.3 258.1 L580.8 257.2 L579.6 258.6 L577.7 258.9 L576.6 260.1 L575.7 261.3 L574.5 262.5 L572.9 263.0 M572.9 263.0 L571.3 262.4 L570.7 260.8 L569.3 260.0 L567.9 259.2 M567.9 259.2 L567.8 258.2 M572.1 238.9 L573.1 240.9 L575.0 242.0 L574.1 244.3 L575.7 246.1 L577.2 245.7 L578.7 245.3 L580.0 246.2 L581.6 246.2 L581.9 247.8 L582.4 249.3 L580.9 250.4 L581.0 252.2 M566.2 253.2 L566.7 254.4 L566.7 255.8 L567.5 256.9 L567.8 258.2 M595.3 245.9 L593.5 246.4 L591.9 247.4 L590.5 248.7 L589.2 250.0 L589.6 252.4 L588.6 254.6 L586.3 255.2 L584.0 255.2 M587.0 262.1 L585.6 260.2 L584.1 258.5 M573.0 264.6 L572.9 263.0 M563.0 262.9 L564.3 261.9 L565.9 261.6 L567.2 260.6 L567.9 259.2 M533.1 235.7 L534.7 236.9 L536.7 237.2 L538.6 236.9 L540.6 237.3 L541.7 235.5 L542.1 233.5 L544.1 232.8 L545.7 231.7 M533.1 235.7 L533.8 237.9 L535.7 239.1 M535.7 239.1 L535.9 237.3 L537.2 236.1 L538.8 235.6 L540.3 234.8 L541.9 233.4 L541.9 231.2 L543.8 231.1 L545.7 231.7 M529.7 232.5 L531.4 234.1 L533.1 235.7 M551.3 228.6 L549.5 228.8 L548.7 230.5 L547.5 231.8 L545.7 231.7 M537.4 243.0 L537.0 240.8 L535.7 239.1 M661.7 317.2 L661.0 319.1 L661.5 321.0 L663.4 321.9 L664.2 323.9 L665.4 323.3 L666.8 323.1 L667.2 324.4 L668.0 325.5 L668.2 327.6 L668.4 329.6 M655.4 318.0 L655.9 319.9 L657.1 321.6 L658.3 323.4 L657.4 325.5 M657.4 325.5 L657.3 327.4 L658.6 328.9 L660.2 329.8 L662.0 329.9 L664.2 330.0 L665.3 331.8 L666.4 330.1 L668.4 329.6 M677.8 329.9 L676.5 330.7 L675.2 331.3 L674.0 332.2 L672.5 332.6 M672.5 332.6 L671.5 331.9 L670.7 330.8 L669.9 329.6 L668.4 329.6 M665.7 350.1 L664.4 351.1 L662.7 351.2 L661.2 352.1 L659.6 351.3 L659.0 349.7 L659.6 348.0 L657.7 347.4 L657.7 345.4 L656.8 344.3 L656.0 343.2 L654.4 342.6 L653.3 343.8 L651.8 341.9 L649.7 340.8 M665.7 350.1 L667.3 349.4 L668.4 348.2 L667.4 347.2 L667.7 345.8 L668.7 344.9 L670.1 345.3 L669.7 343.6 L668.4 342.4 L668.3 340.7 L667.5 339.3 M649.7 340.8 L650.1 339.0 L651.7 338.0 L653.4 338.4 L654.9 339.1 L656.2 338.5 L657.4 337.7 L657.9 336.4 L659.3 335.7 M667.5 339.3 L666.0 339.6 L664.8 338.8 L663.6 339.4 L662.3 339.9 L661.7 338.8 L660.7 337.9 L659.6 337.0 L659.3 335.7 M647.4 355.8 L651.8 352.1 L658.6 350.3 L665.7 350.1 M672.5 332.6 L671.2 331.9 L670.0 332.7 L669.4 333.9 L668.3 334.7 L667.8 336.9 L667.5 339.3 M657.4 325.5 L656.0 326.3 L655.0 327.6 L654.9 329.2 L655.2 330.8 M655.2 330.8 L655.7 332.4 L657.1 333.4 L658.4 334.3 L659.3 335.7 M642.4 331.0 L642.7 329.1 L643.9 327.7 L644.7 326.0 L644.5 324.1 M642.4 331.0 L643.3 332.1 L642.9 333.6 L643.2 334.8 L643.4 336.1 L643.9 337.6 L643.7 339.2 L645.0 340.0 L646.5 340.4 M644.5 324.1 L646.0 324.1 L647.5 324.1 L648.3 325.5 L649.8 326.1 L649.8 327.7 L649.1 329.0 L648.6 330.8 L650.1 331.8 M650.1 331.8 L651.2 333.6 L653.1 334.1 L652.1 335.9 L652.7 337.9 L650.7 338.2 L648.9 337.2 L648.6 339.4 L646.6 340.4 M646.5 340.4 L646.6 340.4 M635.6 335.4 L635.9 334.2 L635.9 333.0 L636.7 332.0 L637.8 331.3 L640.1 330.8 L642.4 331.0 M644.0 322.9 L644.5 324.1 M643.5 342.8 L645.3 341.9 L646.5 340.4 M655.2 330.8 L653.9 331.1 L652.7 331.6 L651.3 331.0 L650.1 331.8 M649.7 340.8 L648.1 341.0 L646.6 340.4 M388.6 311.9 L387.5 312.7 L386.9 313.9 L385.8 314.8 L384.5 314.6 L383.5 315.5 L383.0 316.7 L382.0 318.0 L380.4 317.4 M388.6 311.9 L388.3 314.4 L387.7 316.7 L388.6 319.0 L388.8 321.5 L390.7 323.1 L392.9 324.1 L394.2 323.9 L395.5 323.7 L396.8 324.0 L397.7 325.1 M397.7 325.1 L395.4 324.7 L393.0 324.4 L390.6 324.2 L388.3 323.4 L386.1 322.5 L384.2 321.0 L382.1 319.8 L380.4 318.1 M380.4 317.4 L380.4 318.1 M390.2 304.7 L388.0 305.6 L387.4 307.9 L388.7 309.7 L388.6 311.9 M372.8 310.0 L374.1 311.7 L376.2 311.2 L377.9 310.7 L379.7 310.6 L379.6 312.3 L379.6 314.0 L379.8 315.7 L380.4 317.4 M373.3 302.7 L372.7 304.5 M392.0 303.3 L393.3 303.2 M403.0 331.0 L401.4 329.8 L399.8 328.6 L398.6 326.9 L397.7 325.1 M378.8 323.5 L379.7 324.6 L380.7 325.6 L382.1 326.4 L382.2 327.9 M378.8 323.5 L376.8 322.9 L374.8 322.5 L372.7 322.7 L370.7 321.8 L370.5 323.1 L369.9 324.3 L370.5 325.9 L368.9 326.7 L368.0 325.3 L366.4 325.4 L365.1 326.0 L363.8 326.3 M382.2 327.9 L380.3 327.5 L378.4 328.0 L378.2 329.5 L379.1 330.6 L378.0 331.8 L376.5 331.2 L374.8 332.1 L374.7 334.0 L373.7 335.5 L372.1 336.1 M372.1 336.1 L370.5 336.3 L368.9 336.0 L367.2 337.0 L365.8 335.6 L365.8 333.8 L365.9 332.0 L364.4 331.0 L363.0 329.8 M363.0 329.8 L363.4 328.1 L363.8 326.3 M394.7 336.3 L393.5 334.6 L392.6 332.7 L390.5 332.9 L388.5 332.0 L387.2 330.6 L385.7 329.5 L384.1 328.3 L382.2 327.9 M380.4 318.1 L380.2 319.6 L380.5 321.1 L379.4 322.2 L378.8 323.5 M362.3 321.8 L363.0 323.0 L363.9 323.8 L363.9 325.1 L363.8 326.3 M373.3 337.8 L372.1 336.1 M350.0 356.0 L353.7 355.5 L356.0 352.3 L355.8 349.0 L358.0 346.6 L359.9 344.2 L361.5 341.7 L363.8 339.2 L365.0 336.1 L364.2 332.9 L363.0 329.8 M345.9 317.3 L348.3 317.7 L350.0 316.1 L352.3 315.8 L354.0 314.4 M338.6 332.1 L339.8 331.3 L343.2 328.9 L345.6 325.5 L345.7 321.4 L345.9 317.3 M405.2 228.0 L406.5 228.7 L407.2 229.9 L407.7 231.3 L408.5 232.4 L406.9 232.6 L405.5 233.5 L404.7 235.1 L405.1 236.7 L405.3 238.2 L404.4 239.3 L405.1 240.4 L406.2 241.2 L408.3 242.2 L409.4 244.3 M428.6 245.3 L427.4 246.5 L425.8 247.2 M425.8 247.2 L424.6 246.7 L423.4 246.1 L422.0 245.8 L420.7 246.5 L419.6 247.0 L418.3 247.4 L417.1 247.8 L415.9 248.3 M409.4 244.3 L410.6 246.0 L412.6 246.4 L413.9 248.0 L415.9 248.3 M414.5 272.7 L415.4 273.9 L416.1 275.3 L416.8 276.7 L416.9 278.2 M414.5 272.7 L416.0 270.9 L417.0 268.7 L417.8 266.5 L417.8 264.0 M416.9 278.2 L416.9 276.6 L417.5 275.1 L416.9 273.5 L417.4 271.9 L418.5 270.7 L419.8 269.8 L421.2 268.9 L422.1 267.6 M422.1 267.6 L421.2 266.6 L420.3 265.5 L419.2 264.5 L417.9 264.0 M417.9 264.0 L417.8 264.0 M409.2 273.4 L410.5 273.3 L411.9 273.3 L413.1 272.6 L414.5 272.7 M417.0 278.7 L416.9 278.2 M405.1 262.6 L406.0 264.3 L407.7 265.1 L409.5 264.7 L411.2 265.5 L412.8 264.7 L414.2 263.6 L416.0 264.4 L417.8 264.0 M425.6 269.6 L423.9 268.6 L422.1 267.6 M425.8 247.2 L425.7 248.9 L424.1 249.3 L424.1 250.8 L423.4 252.0 L422.1 252.7 L421.3 253.9 L419.9 254.3 L418.5 254.0 L418.3 255.4 L417.5 256.5 L417.4 257.9 L418.1 259.0 L417.9 260.5 L418.9 261.6 L418.8 263.0 L417.9 264.0 M403.7 256.7 L405.8 255.8 L406.3 253.6 L406.0 251.2 L408.0 249.9 L410.0 251.1 L412.3 250.5 L414.2 249.6 L415.9 248.3 M403.6 256.9 L403.7 256.7 M456.4 289.6 L458.1 291.0 L457.1 292.9 L457.3 294.7 L458.7 295.8 L457.8 297.7 L455.7 298.2 L456.9 299.9 L456.5 302.0 L454.9 302.7 L453.9 304.0 L452.3 304.6 L450.6 304.6 L449.9 306.0 L449.1 307.4 L447.6 308.2 L446.7 309.6 M443.6 308.0 L445.2 309.1 M446.7 309.6 L445.2 309.1 M427.8 318.3 L428.9 319.3 L430.3 319.0 L431.4 320.0 L432.8 319.7 L434.3 319.1 L435.6 320.0 L436.6 319.1 L438.0 318.8 M445.2 309.1 L443.6 309.7 L443.1 311.3 L442.8 312.9 L441.9 314.2 L440.7 315.5 L438.9 315.6 L438.3 317.1 L438.0 318.8 M432.1 329.5 L432.5 329.3 M432.5 329.3 L433.5 328.0 L433.2 326.4 L433.6 324.9 L434.4 323.6 L436.1 323.0 L436.3 321.3 L437.3 320.1 L438.0 318.8 M394.2 289.1 L392.7 288.6 L392.0 287.2 L391.8 285.7 L392.1 284.2 M394.2 289.1 L395.9 289.8 L397.6 290.2 L399.5 289.3 L401.1 290.7 M392.1 284.2 L393.8 283.1 L395.8 283.7 L397.3 284.8 L398.8 285.9 M401.1 290.7 L400.6 289.4 L400.3 288.1 L399.7 286.9 L398.8 285.9 M391.3 282.9 L392.1 284.2 M389.5 296.0 L390.6 294.3 L391.6 292.4 L393.8 291.4 L394.2 289.1 M401.3 290.8 L401.1 290.7 M398.9 280.1 L398.7 281.6 L398.0 283.0 L398.6 284.4 L398.8 285.9 M352.8 292.6 L351.4 293.3 L349.9 294.0 L349.7 295.6 L348.8 297.0 M340.8 282.5 L341.4 284.4 L342.3 286.2 L341.7 288.1 L340.4 289.7 L339.3 291.7 L341.0 293.3 L341.5 295.0 L342.4 296.6 M348.8 297.0 L347.4 298.5 L345.5 298.0 L344.0 297.2 L342.4 296.6 M326.0 290.3 L328.3 289.5 L330.7 289.7 L332.4 291.3 L334.1 293.0 L336.4 293.2 L338.6 293.6 L339.7 295.7 L341.5 297.3 M342.4 296.6 L341.5 297.3 M329.2 316.4 L328.1 315.5 L328.0 314.1 L328.7 312.9 L328.4 311.5 L327.1 311.3 L326.0 310.6 L324.8 310.1 L324.1 309.0 L323.7 306.7 L324.3 304.4 L323.4 302.3 L323.2 300.0 M329.2 316.4 L328.5 314.7 L328.3 312.9 L328.7 310.9 L330.6 310.1 L332.3 310.1 L333.6 309.0 L335.3 309.0 L336.9 309.0 M323.2 300.0 L324.9 301.3 L327.0 301.7 L328.2 303.5 L328.8 305.5 L331.0 305.3 L332.7 306.7 L334.6 306.3 L336.6 305.8 M336.9 309.0 L337.3 307.3 L336.6 305.8 M332.2 323.3 L329.2 316.4 M321.1 298.6 L321.9 299.7 L323.2 300.0 M345.9 317.3 L344.4 316.1 L342.8 315.1 L340.9 315.7 L339.0 315.7 L339.1 313.9 L338.3 312.2 L337.4 310.7 L336.9 309.0 M404.2 245.8 L404.1 247.8 L404.9 249.7 L403.8 251.4 L403.1 253.3 M404.2 245.8 L403.3 244.9 L402.6 243.8 L401.3 242.9 L400.0 243.7 L400.2 242.4 L400.6 241.1 L399.9 239.9 L398.7 239.2 M403.1 253.3 L401.1 253.4 L400.3 251.5 L398.5 251.3 L397.3 250.0 L397.1 248.3 L396.1 246.9 L396.2 245.1 L395.2 243.7 M398.7 239.2 L397.1 239.5 L396.1 240.7 L395.9 242.3 L395.2 243.7 M403.7 256.7 L403.3 255.0 L403.1 253.3 M409.4 244.3 L408.2 245.0 L407.0 245.7 L405.6 246.7 L404.2 245.8 M399.7 234.7 L399.9 237.1 L398.7 239.2 M387.1 248.6 L388.4 248.2 L389.7 248.5 L391.1 248.7 L392.4 248.2 L393.2 247.1 L394.0 246.0 L394.4 244.8 L395.2 243.7 M460.8 312.2 L459.6 312.7 L458.4 313.2 L457.2 313.7 L456.0 314.2 L455.0 313.1 L454.0 312.0 L452.5 312.1 L451.1 312.5 M460.8 312.2 L461.7 313.8 L460.3 315.1 L461.0 316.4 L461.5 317.7 L463.1 317.6 L464.5 318.4 L464.9 319.9 L466.2 320.8 M451.1 312.5 L451.1 314.0 L450.6 315.4 L449.1 315.5 L447.7 315.3 L446.8 317.4 L445.3 319.1 L444.5 320.2 L444.4 321.5 L444.3 322.8 L444.3 324.1 L445.1 325.1 L445.7 326.3 L447.2 326.3 L448.1 327.4 M466.2 320.8 L467.5 322.5 L466.7 324.5 L467.2 326.8 L465.3 328.0 L465.6 329.8 L465.5 331.7 L463.7 333.0 L464.2 335.1 M457.4 336.0 L455.2 335.9 L453.3 334.7 L451.7 333.3 L450.2 331.7 M457.4 336.0 L459.3 335.4 L460.9 336.5 L462.5 335.7 L464.2 335.1 M450.2 331.7 L450.9 330.4 L450.1 329.1 L448.9 328.5 L448.1 327.4 M465.0 307.5 L464.8 309.4 L464.4 311.2 L462.6 311.9 L460.8 312.2 M446.7 309.6 L447.1 311.0 L448.3 311.9 L449.7 312.2 L451.1 312.5 M478.8 322.3 L477.2 323.0 L475.5 322.6 L474.0 323.7 L472.3 323.6 L471.2 321.9 L469.2 322.3 L468.2 320.6 L466.2 320.8 M432.5 329.3 L433.8 328.9 L435.2 329.4 L436.5 329.1 L437.6 328.3 L437.8 329.7 L438.6 330.9 L439.9 331.4 L440.8 332.4 L442.7 330.8 L443.5 328.5 L444.9 328.4 L446.1 329.0 L446.9 327.8 L448.1 327.4 M466.5 337.0 L465.3 336.2 L464.2 335.1 M452.0 347.5 L453.4 346.4 L453.8 344.6 L454.1 342.8 L453.5 341.2 L453.6 339.4 L454.8 338.1 L456.0 336.9 L457.4 336.0 M440.0 342.3 L441.9 341.7 L443.4 340.6 L444.2 338.8 L445.3 337.2 L447.1 336.5 L448.3 335.0 L449.2 333.3 L450.2 331.7 M354.3 307.1 L353.1 305.3 M354.3 307.1 L354.4 309.3 M353.1 305.3 L351.0 304.8 L349.1 305.6 L347.0 305.9 L345.4 307.1 L343.4 306.6 L341.2 306.7 L339.9 305.1 L338.4 303.7 M354.4 309.3 L352.2 309.3 L350.2 308.6 L347.9 308.5 L346.0 307.5 L344.1 306.4 L342.1 305.4 L340.0 304.8 L337.9 304.3 M337.9 304.3 L338.4 303.7 M363.9 295.6 L362.0 297.1 L362.3 299.4 L362.6 301.5 L361.4 303.4 L359.6 304.2 L357.8 305.1 L355.9 305.9 L354.3 307.1 M348.8 297.0 L349.8 299.3 L349.8 301.8 L350.0 303.1 L350.8 304.1 L352.0 304.6 L353.1 305.3 M354.6 310.1 L354.4 309.3 M341.5 297.3 L339.7 298.2 L339.1 300.1 L337.8 301.7 L338.4 303.7 M336.6 305.8 L337.9 304.3" fill="none" stroke="#757575" stroke-width="1.4" stroke-linejoin="round"/>
<path d="M300.0 199.0 L298.9 198.6 L297.8 198.2 L296.7 198.6 L295.5 198.5 L294.7 197.3 L293.5 196.7 L292.2 196.9 L291.0 197.6 L290.3 196.4 L289.8 195.1 L289.6 193.6 L288.3 192.9 L287.6 191.7 L286.9 190.6 L286.8 189.2 L286.0 188.0 L285.4 186.4 L284.6 185.0 L283.3 184.0 L282.0 183.0 L280.4 182.2 L280.1 180.5 L279.3 179.0 L278.0 178.0 L278.1 176.3 L277.9 174.5 L277.1 172.9 L277.1 171.2 L276.1 169.7 L275.7 168.0 L274.6 166.6 L274.0 165.0 L274.1 163.0 L273.2 161.2 L273.3 159.2 L273.0 157.2 L272.9 155.2 L273.7 153.3 L275.3 152.0 L276.0 150.0 L277.5 148.0 L277.3 145.5 L277.5 143.2 L276.5 140.9 L275.1 138.7 L276.2 136.3 L277.9 134.5 L278.0 132.0 L276.0 132.3 L274.0 132.2 L272.3 131.2 L270.7 129.9 L269.5 128.4 L268.8 126.6 L267.1 125.6 L266.0 124.0 L266.3 122.1 L264.6 121.1 L264.1 119.6 L264.6 118.0 L264.1 116.5 L262.9 115.4 L262.0 114.2 L261.0 113.0 M264.2 305.9 L263.4 304.2 L262.5 302.6 L263.5 300.9 L263.5 299.0 L262.5 297.9 L262.5 296.4 L262.5 295.0 L262.5 293.6 L262.2 292.4 L261.4 291.3 L260.6 290.3 L259.8 289.4 L260.3 288.1 L260.1 286.8 L261.2 286.0 L261.6 284.7 L261.4 283.4 L260.9 282.2 L260.6 281.0 L260.7 279.7 L260.0 278.5 L259.5 277.2 L258.2 276.9 L257.2 275.9 L257.0 274.7 L256.7 273.6 L256.2 272.6 L255.7 271.5 L255.1 270.4 L254.6 269.4 L254.5 268.2 L254.5 267.0 L254.9 265.4 L255.4 263.9 L255.6 262.2 L256.5 260.8 L257.0 259.0 L258.7 258.0 L258.5 256.2 L258.1 254.5 L257.9 253.1 L258.8 251.9 L260.1 251.5 L261.1 250.6 L262.3 249.7 L262.9 248.3 L262.1 247.1 L261.6 245.7 L261.6 244.0 L262.6 242.6 L263.3 241.1 L264.5 239.9 L265.7 238.8 L267.1 237.9 L268.0 236.5 L268.7 235.0 L269.5 234.3 L270.3 233.7 L271.3 233.3 L272.3 232.9 L272.8 232.0 L273.2 231.0 L274.1 230.4 L274.8 229.6 L275.0 228.2 L275.1 226.7 L276.1 225.7 L277.2 224.8 L277.5 223.4 L278.4 222.4 L279.0 221.2 L279.6 220.0 L280.5 218.9 L281.7 218.2 L282.9 217.6 L284.2 217.1 L285.2 215.9 L286.0 214.6 L287.5 214.3 L289.0 214.4 L290.3 213.7 L291.7 213.2 L292.9 213.9 L294.3 214.4 L295.4 213.8 L296.7 213.4 L298.0 212.9 L299.0 212.0 L299.1 210.4 L299.3 208.7 L298.9 207.1 L298.7 205.4 L298.5 203.8 L298.8 202.1 L299.2 200.5 L300.0 199.0 M203.0 289.0 L203.9 288.3 L205.0 288.0 L206.1 288.0 L207.2 287.7 L208.3 287.3 L209.2 286.7 L210.2 286.2 L211.2 285.7 L212.4 285.4 L213.4 284.8 L213.9 283.7 L214.3 282.6 L216.2 282.2 L217.7 281.0 L219.2 279.9 L220.6 278.7 L222.4 278.8 L223.9 277.7 L225.6 277.3 L227.3 277.0 L228.3 275.0 L228.7 272.9 L230.8 272.9 L233.0 273.2 L234.7 271.8 L236.6 272.8 L237.9 271.3 L239.9 271.3 L241.6 270.3 L243.4 270.5 L245.3 270.5 L247.0 270.0 L248.0 269.8 L248.9 269.3 L249.8 268.6 L250.9 268.9 L251.9 268.6 L252.7 267.9 L253.7 267.8 L254.5 267.0 M300.0 199.0 L300.8 198.2 L301.2 197.2 L301.6 196.2 L302.0 195.2 L305.4 195.9 L308.8 196.3 L312.0 198.2 L315.6 197.6 L314.7 199.1 L314.1 200.7 L314.3 202.4 L314.8 204.0 L317.7 204.0 L320.3 205.3 L323.2 205.2 L326.0 205.6 L327.9 206.0 L329.6 206.9 L331.4 207.4 L333.2 208.0 L334.1 209.5 L335.0 211.0 L335.0 212.7 L335.6 214.4 L338.0 214.7 L340.4 214.4 L342.8 214.4 L345.2 214.4 L345.9 213.5 L346.6 212.6 L347.3 211.6 L348.4 211.2 L349.7 211.4 L350.9 211.7 L352.1 212.1 L353.2 212.8 L355.0 214.9 L356.2 217.4 L357.6 219.7 L359.6 221.6 L361.9 222.3 L364.2 222.9 L366.6 222.7 L369.0 223.0 L370.7 221.8 L372.1 220.4 L374.0 219.6 L376.0 219.0 L378.3 218.8 L380.6 218.0 L382.2 216.3 L383.0 214.0 L384.4 211.7 L385.9 209.5 L387.8 207.6 L390.0 206.0 L391.8 203.9 L393.5 201.8 L396.2 201.2 L399.0 201.0 L401.0 200.0 L402.9 198.8 L405.1 198.2 L407.0 197.0 L409.7 194.9 L411.0 191.8 L412.2 188.7 L414.0 186.0 L415.8 182.7 L418.3 179.9 L419.5 176.4 L421.0 173.0 L421.1 171.7 L420.9 170.4 L420.5 169.2 L420.0 168.0 L422.3 166.3 L424.1 164.1 L426.5 162.4 L428.0 160.0 L430.3 158.3 L432.8 156.9 L435.2 155.2 L437.0 153.0 L438.5 151.8 L440.0 150.5 L441.5 149.3 L443.0 148.0 L446.1 146.8 L449.0 145.3 L451.4 143.0 L454.0 141.0 L457.1 139.0 L460.8 138.4 L464.4 138.9 L468.0 139.0 L469.5 139.8 L471.2 140.2 L472.6 141.1 L474.0 142.0 L476.2 143.6 L478.4 145.2 L480.1 147.5 L483.0 148.0 L484.6 149.9 L486.5 151.6 L488.6 153.0 L491.0 154.0 L493.7 154.4 L496.1 155.5 L497.1 158.0 L499.0 160.0 L501.2 161.7 L502.9 163.9 L505.8 164.1 L508.0 166.0 L511.0 166.9 L514.0 167.4 L516.6 169.1 L519.0 171.0 L521.7 171.9 L524.3 173.1 L527.1 173.3 L530.0 173.3 L532.5 173.9 L534.9 174.6 L537.5 174.7 L540.0 175.2 L543.3 175.1 L546.6 175.3 L549.8 176.0 L553.0 176.7 L556.6 176.9 L560.1 177.0 L563.5 175.8 L567.0 175.2 L567.2 174.1 L567.7 173.1 L568.4 172.2 L569.0 171.3 L571.6 172.1 L574.2 171.9 L576.9 172.1 L579.5 172.4 L582.2 172.3 L584.7 171.0 L587.4 171.0 L590.0 170.3 L590.7 169.2 L591.0 168.0 L592.8 168.1 L594.4 168.8 L594.9 169.7 L595.5 170.6 L596.0 171.5 L596.5 172.4 L598.4 171.7 L600.2 171.0 L602.1 171.7 L604.0 172.4 L605.3 170.8 L606.7 169.3 L607.5 167.3 L608.3 165.4 L609.6 164.9 L610.9 164.9 L612.3 164.8 L613.6 164.5 L614.3 166.1 L615.7 167.1 L617.3 167.1 L618.8 166.4 L620.4 166.9 L622.0 166.6 L623.2 167.1 L624.1 168.1 L624.8 169.1 L625.3 170.3 L627.1 168.7 L629.3 167.5 L631.5 166.3 L634.0 166.0 L635.6 167.1 L637.3 168.0 L638.6 169.3 L640.3 170.3 L641.7 168.9 L643.4 168.0 L645.1 167.2 L646.7 166.0 L647.8 165.7 L648.9 165.7 L650.0 165.4 L651.0 165.0 L652.4 163.1 L654.2 161.6 L656.3 160.6 L658.4 159.6 L660.3 160.1 L662.2 160.0 L664.1 160.3 L666.0 160.7 L668.0 161.7 L670.2 161.9 L672.4 161.8 L674.4 162.8 L675.5 163.2 L676.7 163.3 L676.9 165.6 L677.0 167.9 L677.6 170.2 L678.9 172.2 L680.7 173.1 L682.2 174.5 L683.6 175.9 L684.4 177.8 L684.5 179.9 L684.0 181.8 L684.7 183.8 L685.6 185.6 L686.4 187.2 L687.6 188.6 L688.1 190.4 L687.8 192.2 L687.8 194.7 L686.0 196.4 L685.1 198.5 L683.3 200.0 L681.8 202.4 L679.4 204.0 L677.4 206.1 L676.7 208.9 L678.9 209.9 L681.0 211.0 L683.2 210.0 L685.6 210.0 L688.4 211.0 L691.3 211.8 L694.4 212.2 L696.7 214.4 L698.6 217.0 L700.6 219.6 L701.8 222.7 L703.3 225.6 L704.6 225.8 L705.9 226.0 L706.8 226.9 L707.8 227.8 L712.3 229.6 L717.0 231.1 L721.8 231.9 L726.7 231.1 L727.3 235.9 L726.5 240.6 L725.0 245.6 L727.8 250.0 L729.0 253.7 L730.5 257.4 L732.8 260.5 L734.7 264.0 L735.9 272.4 L737.2 280.7 L741.6 287.9 L747.2 294.3 L748.2 293.7 L749.1 293.2 L749.9 292.4 L751.0 292.0 M468.0 139.0 L469.0 138.3 L469.2 137.1 L470.2 136.4 L471.0 135.6 L471.1 133.6 L472.1 132.0 L472.9 130.2 L474.4 128.9 L475.2 128.0 L475.2 126.7 L475.8 125.8 L476.3 124.7 L477.0 123.6 L478.4 123.4 L478.6 122.2 L479.0 121.0 L478.4 119.7 L477.7 118.5 L477.8 117.0 L479.1 116.0 L479.9 115.1 L481.0 114.5 L482.2 114.0 L483.0 113.0 M696.7 214.4 L697.8 211.6 L697.9 208.6 L700.3 206.9 L702.8 205.3 L702.9 202.5 L703.7 199.9 L704.3 197.1 L703.3 194.4 L704.6 193.2 L706.4 193.3 L707.7 191.9 L709.6 192.4 L711.1 191.5 L712.5 190.6 L712.9 188.9 L714.4 187.8 L715.7 187.1 L717.1 187.2 L717.5 185.9 L717.7 184.6 L718.9 185.3 L720.2 184.6 L721.2 184.0 L722.2 183.3 L724.3 182.5 L726.3 181.3 L728.6 181.6 L730.8 182.0 L732.2 180.1 L734.4 179.3 L736.7 179.8 L738.9 178.9 L740.3 179.4 L741.5 180.2 L742.2 178.7 L743.8 178.4 L745.1 178.4 L746.5 178.0 L747.6 177.1 L747.8 175.6 L749.4 175.5 L751.0 176.0 M221.0 113.0 L221.5 114.5 L222.8 115.3 L223.7 116.5 L224.0 118.0 L225.5 118.4 L227.0 118.1 L228.5 118.6 L230.0 118.4 L231.6 118.6 L233.1 118.1 L234.6 118.5 L236.0 119.0 L237.3 119.1 L238.5 118.5 L239.7 118.2 L241.0 117.9 L242.2 117.6 L243.5 117.7 L244.6 116.9 L246.0 117.0 M203.0 181.0 L204.6 181.1 L206.2 181.1 L207.8 181.1 L209.4 180.9 L211.1 180.9 L212.7 181.5 L213.8 182.8 L215.0 184.0 L216.7 185.2 L218.2 186.6 L220.2 187.2 L222.0 188.3 L224.1 187.7 L226.3 187.7 L227.8 189.4 L230.0 190.0 L231.9 190.3 L233.9 190.3 L235.3 192.2 L237.6 191.6 L239.6 191.5 L241.4 192.4 L243.6 192.4 L245.0 194.0 L246.3 193.8 L247.5 193.4 L248.5 192.6 L249.8 192.2 L250.6 193.2 L251.7 193.8 L253.0 194.2 L254.0 195.0 L255.0 194.2 L256.3 194.3 L257.2 193.5 L258.2 192.8 L258.8 191.6 L260.1 191.4 L261.5 191.3 L262.0 190.0 L263.7 189.4 L265.3 190.0 L266.4 188.7 L267.5 187.4 L268.6 186.3 L270.0 185.5 L271.3 184.3 L271.0 182.5 L272.5 183.2 L273.9 184.2 L275.7 184.5 L276.8 186.0 L277.7 187.5 L278.6 188.9 L279.7 190.3 L280.0 192.0 L280.5 193.0 L281.4 193.7 L282.3 194.3 L283.4 194.6 L283.6 195.8 L284.4 196.6 L285.2 197.2 L286.0 198.0" fill="none" stroke="#666" stroke-width="1.4" stroke-linejoin="round"/>
<path d="M203.0 318.3 L212.8 320.7 L217.4 323.8 L222.1 321.4 L228.3 319.1 L236.1 315.2 L245.4 311.3 L250.0 308.6 L255.3 306.4 L260.7 305.5 L264.2 305.9 L275.0 305.0 L285.6 302.8 L290.0 301.5 L294.5 302.3 L303.0 304.0 L313.0 308.0 L322.0 314.0 L333.0 324.0 L344.0 340.0 L350.0 356.0 L352.0 364.0 L357.0 384.0 L368.0 393.0 L375.0 406.0 L384.0 414.0 L404.0 424.0 L413.0 427.0 L423.0 425.0 L436.0 416.0 L449.0 416.0 L455.0 409.0 L458.0 397.0 L462.0 387.0 L474.0 380.0 L493.0 382.0 L510.0 380.0 L523.0 376.0 L547.0 361.0 L555.0 356.0 L600.0 355.0 L660.0 356.0 L700.0 355.0 L722.0 350.0 L728.0 339.0 L740.0 325.0 L742.0 314.0 L751.0 289.0 L751.0 290.0 L751.0 446.0 L203.0 446.0 L203.0 318.0Z" fill="#c3d3d3"/>
<path d="M424 445 L428 440 L436 438 L444 441 L446 445Z" fill="#f2f2f2"/>
<circle cx="441.0" cy="403.0" r="8.5" fill="#0f6e38" fill-opacity=".9"/>
<circle cx="363.1" cy="386.9" r="8.0" fill="#0f6e38" fill-opacity=".9"/>
<circle cx="532.2" cy="353.4" r="7.0" fill="#0f6e38" fill-opacity=".9"/>
<circle cx="678.7" cy="340.7" r="5.3" fill="#0f6e38" fill-opacity=".9"/>
<circle cx="687.3" cy="334.7" r="5.3" fill="#0f6e38" fill-opacity=".9"/>
<circle cx="522.1" cy="351.4" r="24.5" fill="#1a8049" fill-opacity=".9" stroke="#fff" stroke-opacity=".9" stroke-width="1"/>
<circle cx="388.0" cy="284.0" r="21.0" fill="#1a8049" fill-opacity=".9" stroke="#fff" stroke-opacity=".9" stroke-width="1"/>
<circle cx="692.8" cy="347.0" r="17.7" fill="#1a8049" fill-opacity=".9" stroke="#fff" stroke-opacity=".9" stroke-width="1"/>
<circle cx="401.9" cy="365.0" r="17.5" fill="#1a8049" fill-opacity=".9" stroke="#fff" stroke-opacity=".9" stroke-width="1"/>
<circle cx="494.8" cy="234.5" r="17.2" fill="#1a8049" fill-opacity=".9" stroke="#fff" stroke-opacity=".9" stroke-width="1"/>
<circle cx="441.1" cy="410.4" r="16.3" fill="#1a8049" fill-opacity=".9" stroke="#fff" stroke-opacity=".9" stroke-width="1"/>
<circle cx="590.8" cy="304.1" r="15.3" fill="#1a8049" fill-opacity=".9" stroke="#fff" stroke-opacity=".9" stroke-width="1"/>
<circle cx="480.5" cy="377.2" r="12.5" fill="#1a8049" fill-opacity=".9" stroke="#fff" stroke-opacity=".9" stroke-width="1"/>
<circle cx="305.2" cy="298.6" r="12.2" fill="#1a8049" fill-opacity=".9" stroke="#fff" stroke-opacity=".9" stroke-width="1"/>
<circle cx="361.5" cy="377.5" r="11.0" fill="#1a8049" fill-opacity=".9" stroke="#fff" stroke-opacity=".9" stroke-width="1"/>
<circle cx="575.6" cy="235.9" r="9.4" fill="#1a8049" fill-opacity=".9" stroke="#fff" stroke-opacity=".9" stroke-width="1"/>
<circle cx="388.6" cy="299.6" r="9.2" fill="#1a8049" fill-opacity=".9" stroke="#fff" stroke-opacity=".9" stroke-width="1"/>
<circle cx="357.0" cy="346.5" r="9.0" fill="#1a8049" fill-opacity=".9" stroke="#fff" stroke-opacity=".9" stroke-width="1"/>
<circle cx="431.2" cy="419.1" r="9.0" fill="#1a8049" fill-opacity=".9" stroke="#fff" stroke-opacity=".9" stroke-width="1"/>
<circle cx="449.1" cy="183.7" r="8.6" fill="#1a8049" fill-opacity=".9" stroke="#fff" stroke-opacity=".9" stroke-width="1"/>
<circle cx="274.7" cy="302.2" r="8.6" fill="#1a8049" fill-opacity=".9" stroke="#fff" stroke-opacity=".9" stroke-width="1"/>
<circle cx="506.5" cy="359.7" r="8.6" fill="#1a8049" fill-opacity=".9" stroke="#fff" stroke-opacity=".9" stroke-width="1"/>
<circle cx="561.2" cy="233.7" r="8.4" fill="#1a8049" fill-opacity=".9" stroke="#fff" stroke-opacity=".9" stroke-width="1"/>
<circle cx="485.5" cy="191.8" r="8.1" fill="#1a8049" fill-opacity=".9" stroke="#fff" stroke-opacity=".9" stroke-width="1"/>
<circle cx="401.3" cy="293.8" r="8.1" fill="#1a8049" fill-opacity=".9" stroke="#fff" stroke-opacity=".9" stroke-width="1"/>
<circle cx="458.6" cy="383.5" r="8.0" fill="#1a8049" fill-opacity=".9" stroke="#fff" stroke-opacity=".9" stroke-width="1"/>
<circle cx="508.1" cy="369.0" r="7.8" fill="#1a8049" fill-opacity=".9" stroke="#fff" stroke-opacity=".9" stroke-width="1"/>
<circle cx="657.3" cy="356.0" r="7.7" fill="#1a8049" fill-opacity=".9" stroke="#fff" stroke-opacity=".9" stroke-width="1"/>
<circle cx="538.3" cy="295.3" r="7.5" fill="#1a8049" fill-opacity=".9" stroke="#fff" stroke-opacity=".9" stroke-width="1"/>
<circle cx="453.7" cy="344.0" r="7.4" fill="#1a8049" fill-opacity=".9" stroke="#fff" stroke-opacity=".9" stroke-width="1"/>
<circle cx="585.9" cy="206.8" r="7.2" fill="#1a8049" fill-opacity=".9" stroke="#fff" stroke-opacity=".9" stroke-width="1"/>
<circle cx="390.3" cy="306.5" r="7.0" fill="#1a8049" fill-opacity=".9" stroke="#fff" stroke-opacity=".9" stroke-width="1"/>
<circle cx="374.0" cy="387.6" r="7.0" fill="#1a8049" fill-opacity=".9" stroke="#fff" stroke-opacity=".9" stroke-width="1"/>
<circle cx="494.1" cy="362.0" r="7.0" fill="#1a8049" fill-opacity=".9" stroke="#fff" stroke-opacity=".9" stroke-width="1"/>
<circle cx="501.1" cy="372.1" r="7.0" fill="#1a8049" fill-opacity=".9" stroke="#fff" stroke-opacity=".9" stroke-width="1"/>
<circle cx="598.6" cy="353.6" r="7.0" fill="#1a8049" fill-opacity=".9" stroke="#fff" stroke-opacity=".9" stroke-width="1"/>
<circle cx="550.0" cy="355.0" r="7.0" fill="#1a8049" fill-opacity=".9" stroke="#fff" stroke-opacity=".9" stroke-width="1"/>
<circle cx="718.4" cy="345.1" r="6.9" fill="#1a8049" fill-opacity=".9" stroke="#fff" stroke-opacity=".9" stroke-width="1"/>
<circle cx="538.3" cy="295.4" r="6.8" fill="#1a8049" fill-opacity=".9" stroke="#fff" stroke-opacity=".9" stroke-width="1"/>
<circle cx="670.9" cy="348.0" r="6.7" fill="#1a8049" fill-opacity=".9" stroke="#fff" stroke-opacity=".9" stroke-width="1"/>
<circle cx="525.4" cy="288.8" r="6.6" fill="#1a8049" fill-opacity=".9" stroke="#fff" stroke-opacity=".9" stroke-width="1"/>
<circle cx="363.0" cy="389.0" r="6.6" fill="#1a8049" fill-opacity=".9" stroke="#fff" stroke-opacity=".9" stroke-width="1"/>
<circle cx="616.6" cy="217.2" r="6.5" fill="#1a8049" fill-opacity=".9" stroke="#fff" stroke-opacity=".9" stroke-width="1"/>
<circle cx="711.5" cy="276.8" r="6.5" fill="#1a8049" fill-opacity=".9" stroke="#fff" stroke-opacity=".9" stroke-width="1"/>
<circle cx="637.7" cy="350.9" r="6.5" fill="#1a8049" fill-opacity=".9" stroke="#fff" stroke-opacity=".9" stroke-width="1"/>
<circle cx="449.7" cy="322.5" r="6.4" fill="#1a8049" fill-opacity=".9" stroke="#fff" stroke-opacity=".9" stroke-width="1"/>
<circle cx="376.2" cy="387.0" r="6.2" fill="#1a8049" fill-opacity=".9" stroke="#fff" stroke-opacity=".9" stroke-width="1"/>
<circle cx="392.1" cy="326.7" r="6.1" fill="#1a8049" fill-opacity=".9" stroke="#fff" stroke-opacity=".9" stroke-width="1"/>
<circle cx="460.1" cy="301.0" r="6.1" fill="#1a8049" fill-opacity=".9" stroke="#fff" stroke-opacity=".9" stroke-width="1"/>
<circle cx="450.8" cy="324.2" r="6.1" fill="#1a8049" fill-opacity=".9" stroke="#fff" stroke-opacity=".9" stroke-width="1"/>
<circle cx="508.2" cy="287.6" r="6.1" fill="#1a8049" fill-opacity=".9" stroke="#fff" stroke-opacity=".9" stroke-width="1"/>
<circle cx="597.9" cy="220.6" r="6.0" fill="#1a8049" fill-opacity=".9" stroke="#fff" stroke-opacity=".9" stroke-width="1"/>
<circle cx="487.9" cy="358.9" r="5.9" fill="#1a8049" fill-opacity=".9" stroke="#fff" stroke-opacity=".9" stroke-width="1"/>
<circle cx="392.4" cy="327.4" r="5.8" fill="#1a8049" fill-opacity=".9" stroke="#fff" stroke-opacity=".9" stroke-width="1"/>
<circle cx="718.3" cy="260.4" r="5.7" fill="#1a8049" fill-opacity=".9" stroke="#fff" stroke-opacity=".9" stroke-width="1"/>
<circle cx="362.8" cy="363.6" r="5.5" fill="#1a8049" fill-opacity=".9" stroke="#fff" stroke-opacity=".9" stroke-width="1"/>
<circle cx="344.4" cy="284.4" r="5.4" fill="#1a8049" fill-opacity=".9" stroke="#fff" stroke-opacity=".9" stroke-width="1"/>
<circle cx="297.9" cy="294.9" r="5.4" fill="#1a8049" fill-opacity=".9" stroke="#fff" stroke-opacity=".9" stroke-width="1"/>
<circle cx="550.9" cy="350.3" r="5.4" fill="#1a8049" fill-opacity=".9" stroke="#fff" stroke-opacity=".9" stroke-width="1"/>
<circle cx="377.0" cy="399.2" r="5.3" fill="#1a8049" fill-opacity=".9" stroke="#fff" stroke-opacity=".9" stroke-width="1"/>
<circle cx="425.0" cy="405.5" r="5.3" fill="#1a8049" fill-opacity=".9" stroke="#fff" stroke-opacity=".9" stroke-width="1"/>
<circle cx="597.9" cy="225.3" r="5.2" fill="#1a8049" fill-opacity=".9" stroke="#fff" stroke-opacity=".9" stroke-width="1"/>
<circle cx="583.1" cy="323.0" r="5.2" fill="#1a8049" fill-opacity=".9" stroke="#fff" stroke-opacity=".9" stroke-width="1"/>
<circle cx="660.3" cy="280.7" r="5.2" fill="#1a8049" fill-opacity=".9" stroke="#fff" stroke-opacity=".9" stroke-width="1"/>
<circle cx="746.1" cy="294.7" r="5.2" fill="#1a8049" fill-opacity=".9" stroke="#fff" stroke-opacity=".9" stroke-width="1"/>
<circle cx="685.0" cy="336.6" r="5.2" fill="#1a8049" fill-opacity=".9" stroke="#fff" stroke-opacity=".9" stroke-width="1"/>
<circle cx="573.2" cy="208.9" r="4.9" fill="#1a8049" fill-opacity=".9" stroke="#fff" stroke-opacity=".9" stroke-width="1"/>
<circle cx="402.4" cy="315.2" r="4.9" fill="#1a8049" fill-opacity=".9" stroke="#fff" stroke-opacity=".9" stroke-width="1"/>
<circle cx="461.1" cy="264.3" r="4.9" fill="#1a8049" fill-opacity=".9" stroke="#fff" stroke-opacity=".9" stroke-width="1"/>
<circle cx="477.7" cy="329.1" r="4.9" fill="#1a8049" fill-opacity=".9" stroke="#fff" stroke-opacity=".9" stroke-width="1"/>
<circle cx="508.2" cy="298.6" r="4.9" fill="#1a8049" fill-opacity=".9" stroke="#fff" stroke-opacity=".9" stroke-width="1"/>
<circle cx="408.0" cy="350.4" r="4.9" fill="#1a8049" fill-opacity=".9" stroke="#fff" stroke-opacity=".9" stroke-width="1"/>
<circle cx="495.8" cy="341.4" r="4.9" fill="#1a8049" fill-opacity=".9" stroke="#fff" stroke-opacity=".9" stroke-width="1"/>
<circle cx="402.1" cy="315.1" r="4.8" fill="#1a8049" fill-opacity=".9" stroke="#fff" stroke-opacity=".9" stroke-width="1"/>
<circle cx="447.2" cy="307.1" r="4.8" fill="#1a8049" fill-opacity=".9" stroke="#fff" stroke-opacity=".9" stroke-width="1"/>
<circle cx="649.4" cy="182.9" r="4.7" fill="#1a8049" fill-opacity=".9" stroke="#fff" stroke-opacity=".9" stroke-width="1"/>
<circle cx="569.3" cy="250.5" r="4.7" fill="#1a8049" fill-opacity=".9" stroke="#fff" stroke-opacity=".9" stroke-width="1"/>
<circle cx="497.7" cy="299.6" r="4.7" fill="#1a8049" fill-opacity=".9" stroke="#fff" stroke-opacity=".9" stroke-width="1"/>
<circle cx="494.5" cy="342.3" r="4.7" fill="#1a8049" fill-opacity=".9" stroke="#fff" stroke-opacity=".9" stroke-width="1"/>
<circle cx="477.5" cy="329.5" r="4.7" fill="#1a8049" fill-opacity=".9" stroke="#fff" stroke-opacity=".9" stroke-width="1"/>
<circle cx="447.1" cy="307.1" r="4.6" fill="#1a8049" fill-opacity=".9" stroke="#fff" stroke-opacity=".9" stroke-width="1"/>
<circle cx="268.1" cy="298.0" r="4.4" fill="#1a8049" fill-opacity=".9" stroke="#fff" stroke-opacity=".9" stroke-width="1"/>
<circle cx="391.5" cy="272.5" r="4.4" fill="#1a8049" fill-opacity=".9" stroke="#fff" stroke-opacity=".9" stroke-width="1"/>
<circle cx="497.7" cy="299.8" r="4.4" fill="#1a8049" fill-opacity=".9" stroke="#fff" stroke-opacity=".9" stroke-width="1"/>
<circle cx="610.4" cy="234.9" r="4.4" fill="#1a8049" fill-opacity=".9" stroke="#fff" stroke-opacity=".9" stroke-width="1"/>
<circle cx="739.1" cy="302.0" r="4.4" fill="#1a8049" fill-opacity=".9" stroke="#fff" stroke-opacity=".9" stroke-width="1"/>
<circle cx="733.6" cy="324.6" r="4.4" fill="#1a8049" fill-opacity=".9" stroke="#fff" stroke-opacity=".9" stroke-width="1"/>
<circle cx="571.3" cy="299.6" r="4.3" fill="#1a8049" fill-opacity=".9" stroke="#fff" stroke-opacity=".9" stroke-width="1"/>
<circle cx="335.8" cy="279.7" r="4.2" fill="#1a8049" fill-opacity=".9" stroke="#fff" stroke-opacity=".9" stroke-width="1"/>
<circle cx="442.2" cy="253.3" r="4.2" fill="#1a8049" fill-opacity=".9" stroke="#fff" stroke-opacity=".9" stroke-width="1"/>
<circle cx="348.0" cy="352.3" r="4.2" fill="#1a8049" fill-opacity=".9" stroke="#fff" stroke-opacity=".9" stroke-width="1"/>
<circle cx="434.3" cy="313.8" r="4.2" fill="#1a8049" fill-opacity=".9" stroke="#fff" stroke-opacity=".9" stroke-width="1"/>
<circle cx="579.3" cy="352.0" r="4.2" fill="#1a8049" fill-opacity=".9" stroke="#fff" stroke-opacity=".9" stroke-width="1"/>
<circle cx="382.8" cy="272.0" r="4.1" fill="#1a8049" fill-opacity=".9" stroke="#fff" stroke-opacity=".9" stroke-width="1"/>
<circle cx="637.7" cy="207.6" r="3.9" fill="#1a8049" fill-opacity=".9" stroke="#fff" stroke-opacity=".9" stroke-width="1"/>
<circle cx="489.9" cy="280.7" r="3.9" fill="#1a8049" fill-opacity=".9" stroke="#fff" stroke-opacity=".9" stroke-width="1"/>
<circle cx="540.8" cy="272.9" r="3.9" fill="#1a8049" fill-opacity=".9" stroke="#fff" stroke-opacity=".9" stroke-width="1"/>
<circle cx="739.6" cy="306.7" r="3.9" fill="#1a8049" fill-opacity=".9" stroke="#fff" stroke-opacity=".9" stroke-width="1"/>
<circle cx="737.8" cy="312.9" r="3.9" fill="#1a8049" fill-opacity=".9" stroke="#fff" stroke-opacity=".9" stroke-width="1"/>
<circle cx="456.8" cy="323.5" r="3.9" fill="#1a8049" fill-opacity=".9" stroke="#fff" stroke-opacity=".9" stroke-width="1"/>
<circle cx="468.1" cy="322.5" r="3.9" fill="#1a8049" fill-opacity=".9" stroke="#fff" stroke-opacity=".9" stroke-width="1"/>
<circle cx="588.8" cy="351.7" r="3.9" fill="#1a8049" fill-opacity=".9" stroke="#fff" stroke-opacity=".9" stroke-width="1"/>
<circle cx="497.2" cy="350.3" r="3.9" fill="#1a8049" fill-opacity=".9" stroke="#fff" stroke-opacity=".9" stroke-width="1"/>
<circle cx="376.5" cy="285.2" r="3.8" fill="#1a8049" fill-opacity=".9" stroke="#fff" stroke-opacity=".9" stroke-width="1"/>
<circle cx="479.6" cy="178.8" r="3.7" fill="#1a8049" fill-opacity=".9" stroke="#fff" stroke-opacity=".9" stroke-width="1"/>
<circle cx="512.6" cy="221.8" r="3.7" fill="#1a8049" fill-opacity=".9" stroke="#fff" stroke-opacity=".9" stroke-width="1"/>
<circle cx="284.5" cy="291.2" r="3.7" fill="#1a8049" fill-opacity=".9" stroke="#fff" stroke-opacity=".9" stroke-width="1"/>
<circle cx="284.5" cy="298.6" r="3.7" fill="#1a8049" fill-opacity=".9" stroke="#fff" stroke-opacity=".9" stroke-width="1"/>
<circle cx="512.6" cy="223.0" r="3.7" fill="#1a8049" fill-opacity=".9" stroke="#fff" stroke-opacity=".9" stroke-width="1"/>
<circle cx="434.4" cy="313.2" r="3.7" fill="#1a8049" fill-opacity=".9" stroke="#fff" stroke-opacity=".9" stroke-width="1"/>
<circle cx="467.9" cy="321.8" r="3.7" fill="#1a8049" fill-opacity=".9" stroke="#fff" stroke-opacity=".9" stroke-width="1"/>
<circle cx="499.7" cy="271.7" r="3.7" fill="#1a8049" fill-opacity=".9" stroke="#fff" stroke-opacity=".9" stroke-width="1"/>
<circle cx="572.7" cy="286.4" r="3.6" fill="#1a8049" fill-opacity=".9" stroke="#fff" stroke-opacity=".9" stroke-width="1"/>
<circle cx="563.3" cy="294.7" r="3.6" fill="#1a8049" fill-opacity=".9" stroke="#fff" stroke-opacity=".9" stroke-width="1"/>
<circle cx="570.6" cy="299.4" r="3.6" fill="#1a8049" fill-opacity=".9" stroke="#fff" stroke-opacity=".9" stroke-width="1"/>
<circle cx="727.1" cy="279.4" r="3.6" fill="#1a8049" fill-opacity=".9" stroke="#fff" stroke-opacity=".9" stroke-width="1"/>
<circle cx="667.3" cy="343.1" r="3.6" fill="#1a8049" fill-opacity=".9" stroke="#fff" stroke-opacity=".9" stroke-width="1"/>
<circle cx="476.0" cy="299.6" r="3.6" fill="#1a8049" fill-opacity=".9" stroke="#fff" stroke-opacity=".9" stroke-width="1"/>
<circle cx="563.2" cy="295.3" r="3.6" fill="#1a8049" fill-opacity=".9" stroke="#fff" stroke-opacity=".9" stroke-width="1"/>
<circle cx="581.1" cy="223.9" r="3.6" fill="#1a8049" fill-opacity=".9" stroke="#fff" stroke-opacity=".9" stroke-width="1"/>
<circle cx="554.4" cy="252.8" r="3.6" fill="#1a8049" fill-opacity=".9" stroke="#fff" stroke-opacity=".9" stroke-width="1"/>
<circle cx="307.2" cy="204.5" r="3.5" fill="#1a8049" fill-opacity=".9" stroke="#fff" stroke-opacity=".9" stroke-width="1"/>
<circle cx="540.9" cy="346.8" r="3.5" fill="#1a8049" fill-opacity=".9" stroke="#fff" stroke-opacity=".9" stroke-width="1"/>
<circle cx="481.8" cy="166.6" r="3.4" fill="#1a8049" fill-opacity=".9" stroke="#fff" stroke-opacity=".9" stroke-width="1"/>
<circle cx="650.7" cy="189.9" r="3.4" fill="#1a8049" fill-opacity=".9" stroke="#fff" stroke-opacity=".9" stroke-width="1"/>
<circle cx="644.2" cy="198.5" r="3.4" fill="#1a8049" fill-opacity=".9" stroke="#fff" stroke-opacity=".9" stroke-width="1"/>
<circle cx="627.8" cy="184.2" r="3.4" fill="#1a8049" fill-opacity=".9" stroke="#fff" stroke-opacity=".9" stroke-width="1"/>
<circle cx="609.6" cy="191.5" r="3.4" fill="#1a8049" fill-opacity=".9" stroke="#fff" stroke-opacity=".9" stroke-width="1"/>
<circle cx="422.7" cy="302.7" r="3.4" fill="#1a8049" fill-opacity=".9" stroke="#fff" stroke-opacity=".9" stroke-width="1"/>
<circle cx="479.6" cy="291.2" r="3.4" fill="#1a8049" fill-opacity=".9" stroke="#fff" stroke-opacity=".9" stroke-width="1"/>
<circle cx="511.9" cy="271.0" r="3.4" fill="#1a8049" fill-opacity=".9" stroke="#fff" stroke-opacity=".9" stroke-width="1"/>
<circle cx="703.7" cy="259.6" r="3.4" fill="#1a8049" fill-opacity=".9" stroke="#fff" stroke-opacity=".9" stroke-width="1"/>
<circle cx="699.3" cy="292.1" r="3.4" fill="#1a8049" fill-opacity=".9" stroke="#fff" stroke-opacity=".9" stroke-width="1"/>
<circle cx="388.6" cy="410.2" r="3.4" fill="#1a8049" fill-opacity=".9" stroke="#fff" stroke-opacity=".9" stroke-width="1"/>
<circle cx="413.3" cy="422.2" r="3.4" fill="#1a8049" fill-opacity=".9" stroke="#fff" stroke-opacity=".9" stroke-width="1"/>
<circle cx="481.7" cy="334.8" r="3.4" fill="#1a8049" fill-opacity=".9" stroke="#fff" stroke-opacity=".9" stroke-width="1"/>
<circle cx="666.7" cy="343.3" r="3.3" fill="#1a8049" fill-opacity=".9" stroke="#fff" stroke-opacity=".9" stroke-width="1"/>
<circle cx="546.1" cy="197.9" r="3.2" fill="#1a8049" fill-opacity=".9" stroke="#fff" stroke-opacity=".9" stroke-width="1"/>
<circle cx="529.0" cy="254.6" r="3.2" fill="#1a8049" fill-opacity=".9" stroke="#fff" stroke-opacity=".9" stroke-width="1"/>
<circle cx="507.8" cy="326.7" r="3.2" fill="#1a8049" fill-opacity=".9" stroke="#fff" stroke-opacity=".9" stroke-width="1"/>
<circle cx="430.0" cy="386.5" r="3.2" fill="#1a8049" fill-opacity=".9" stroke="#fff" stroke-opacity=".9" stroke-width="1"/>
<circle cx="448.0" cy="393.0" r="3.2" fill="#1a8049" fill-opacity=".9" stroke="#fff" stroke-opacity=".9" stroke-width="1"/>
<circle cx="366.7" cy="338.0" r="3.2" fill="#1a8049" fill-opacity=".9" stroke="#fff" stroke-opacity=".9" stroke-width="1"/>
<circle cx="423.0" cy="303.2" r="3.2" fill="#1a8049" fill-opacity=".9" stroke="#fff" stroke-opacity=".9" stroke-width="1"/>
<circle cx="405.9" cy="286.3" r="3.2" fill="#1a8049" fill-opacity=".9" stroke="#fff" stroke-opacity=".9" stroke-width="1"/>
<circle cx="587.3" cy="309.0" r="3.2" fill="#1a8049" fill-opacity=".9" stroke="#fff" stroke-opacity=".9" stroke-width="1"/>
<circle cx="659.5" cy="175.6" r="3.1" fill="#1a8049" fill-opacity=".9" stroke="#fff" stroke-opacity=".9" stroke-width="1"/>
<circle cx="380.5" cy="298.5" r="3.1" fill="#1a8049" fill-opacity=".9" stroke="#fff" stroke-opacity=".9" stroke-width="1"/>
<circle cx="579.7" cy="272.9" r="3.1" fill="#1a8049" fill-opacity=".9" stroke="#fff" stroke-opacity=".9" stroke-width="1"/>
<circle cx="718.0" cy="289.0" r="3.1" fill="#1a8049" fill-opacity=".9" stroke="#fff" stroke-opacity=".9" stroke-width="1"/>
<circle cx="676.7" cy="329.3" r="3.1" fill="#1a8049" fill-opacity=".9" stroke="#fff" stroke-opacity=".9" stroke-width="1"/>
<circle cx="381.5" cy="333.5" r="3.1" fill="#1a8049" fill-opacity=".9" stroke="#fff" stroke-opacity=".9" stroke-width="1"/>
<circle cx="558.4" cy="350.9" r="3.1" fill="#1a8049" fill-opacity=".9" stroke="#fff" stroke-opacity=".9" stroke-width="1"/>
<circle cx="411.7" cy="281.7" r="3.0" fill="#1a8049" fill-opacity=".9" stroke="#fff" stroke-opacity=".9" stroke-width="1"/>
<circle cx="581.0" cy="225.3" r="3.0" fill="#1a8049" fill-opacity=".9" stroke="#fff" stroke-opacity=".9" stroke-width="1"/>
<circle cx="366.5" cy="337.7" r="3.0" fill="#1a8049" fill-opacity=".9" stroke="#fff" stroke-opacity=".9" stroke-width="1"/>
<circle cx="373.1" cy="373.4" r="3.0" fill="#1a8049" fill-opacity=".9" stroke="#fff" stroke-opacity=".9" stroke-width="1"/>
<circle cx="386.1" cy="402.3" r="3.0" fill="#1a8049" fill-opacity=".9" stroke="#fff" stroke-opacity=".9" stroke-width="1"/>
<circle cx="382.4" cy="337.7" r="3.0" fill="#1a8049" fill-opacity=".9" stroke="#fff" stroke-opacity=".9" stroke-width="1"/>
<circle cx="568.3" cy="349.9" r="3.0" fill="#1a8049" fill-opacity=".9" stroke="#fff" stroke-opacity=".9" stroke-width="1"/>
<circle cx="507.3" cy="323.7" r="3.0" fill="#1a8049" fill-opacity=".9" stroke="#fff" stroke-opacity=".9" stroke-width="1"/>
<circle cx="355.1" cy="362.0" r="3.0" fill="#1a8049" fill-opacity=".9" stroke="#fff" stroke-opacity=".9" stroke-width="1"/>
<circle cx="388.4" cy="408.2" r="3.0" fill="#1a8049" fill-opacity=".9" stroke="#fff" stroke-opacity=".9" stroke-width="1"/>
<circle cx="455.2" cy="152.4" r="2.9" fill="#1a8049" fill-opacity=".9" stroke="#fff" stroke-opacity=".9" stroke-width="1"/>
<circle cx="594.8" cy="211.5" r="2.9" fill="#1a8049" fill-opacity=".9" stroke="#fff" stroke-opacity=".9" stroke-width="1"/>
<circle cx="572.4" cy="219.8" r="2.9" fill="#1a8049" fill-opacity=".9" stroke="#fff" stroke-opacity=".9" stroke-width="1"/>
<circle cx="307.7" cy="232.1" r="2.9" fill="#1a8049" fill-opacity=".9" stroke="#fff" stroke-opacity=".9" stroke-width="1"/>
<circle cx="456.9" cy="321.8" r="2.9" fill="#1a8049" fill-opacity=".9" stroke="#fff" stroke-opacity=".9" stroke-width="1"/>
<circle cx="476.0" cy="299.1" r="2.9" fill="#1a8049" fill-opacity=".9" stroke="#fff" stroke-opacity=".9" stroke-width="1"/>
<circle cx="500.2" cy="264.3" r="2.9" fill="#1a8049" fill-opacity=".9" stroke="#fff" stroke-opacity=".9" stroke-width="1"/>
<circle cx="542.0" cy="260.2" r="2.9" fill="#1a8049" fill-opacity=".9" stroke="#fff" stroke-opacity=".9" stroke-width="1"/>
<circle cx="553.0" cy="252.9" r="2.9" fill="#1a8049" fill-opacity=".9" stroke="#fff" stroke-opacity=".9" stroke-width="1"/>
<circle cx="607.0" cy="252.6" r="2.9" fill="#1a8049" fill-opacity=".9" stroke="#fff" stroke-opacity=".9" stroke-width="1"/>
<circle cx="558.9" cy="274.7" r="2.9" fill="#1a8049" fill-opacity=".9" stroke="#fff" stroke-opacity=".9" stroke-width="1"/>
<circle cx="706.3" cy="246.1" r="2.9" fill="#1a8049" fill-opacity=".9" stroke="#fff" stroke-opacity=".9" stroke-width="1"/>
<circle cx="728.7" cy="309.0" r="2.9" fill="#1a8049" fill-opacity=".9" stroke="#fff" stroke-opacity=".9" stroke-width="1"/>
<circle cx="719.3" cy="314.5" r="2.9" fill="#1a8049" fill-opacity=".9" stroke="#fff" stroke-opacity=".9" stroke-width="1"/>
<circle cx="584.0" cy="293.0" r="2.8" fill="#1a8049" fill-opacity=".9" stroke="#fff" stroke-opacity=".9" stroke-width="1"/>
<circle cx="455.7" cy="167.3" r="2.7" fill="#1a8049" fill-opacity=".9" stroke="#fff" stroke-opacity=".9" stroke-width="1"/>
<circle cx="335.3" cy="232.6" r="2.7" fill="#1a8049" fill-opacity=".9" stroke="#fff" stroke-opacity=".9" stroke-width="1"/>
<circle cx="295.0" cy="265.6" r="2.7" fill="#1a8049" fill-opacity=".9" stroke="#fff" stroke-opacity=".9" stroke-width="1"/>
<circle cx="365.9" cy="287.1" r="2.7" fill="#1a8049" fill-opacity=".9" stroke="#fff" stroke-opacity=".9" stroke-width="1"/>
<circle cx="381.8" cy="332.7" r="2.7" fill="#1a8049" fill-opacity=".9" stroke="#fff" stroke-opacity=".9" stroke-width="1"/>
<circle cx="642.1" cy="226.1" r="2.6" fill="#1a8049" fill-opacity=".9" stroke="#fff" stroke-opacity=".9" stroke-width="1"/>
<circle cx="557.1" cy="251.3" r="2.6" fill="#1a8049" fill-opacity=".9" stroke="#fff" stroke-opacity=".9" stroke-width="1"/>
<circle cx="592.7" cy="277.3" r="2.6" fill="#1a8049" fill-opacity=".9" stroke="#fff" stroke-opacity=".9" stroke-width="1"/>
<circle cx="629.9" cy="282.5" r="2.6" fill="#1a8049" fill-opacity=".9" stroke="#fff" stroke-opacity=".9" stroke-width="1"/>
<circle cx="574.5" cy="304.0" r="2.6" fill="#1a8049" fill-opacity=".9" stroke="#fff" stroke-opacity=".9" stroke-width="1"/>
<circle cx="555.0" cy="312.4" r="2.6" fill="#1a8049" fill-opacity=".9" stroke="#fff" stroke-opacity=".9" stroke-width="1"/>
<circle cx="652.0" cy="305.1" r="2.6" fill="#1a8049" fill-opacity=".9" stroke="#fff" stroke-opacity=".9" stroke-width="1"/>
<circle cx="387.0" cy="403.0" r="2.6" fill="#1a8049" fill-opacity=".9" stroke="#fff" stroke-opacity=".9" stroke-width="1"/>
<circle cx="355.4" cy="359.6" r="2.6" fill="#1a8049" fill-opacity=".9" stroke="#fff" stroke-opacity=".9" stroke-width="1"/>
<circle cx="624.7" cy="349.6" r="2.6" fill="#1a8049" fill-opacity=".9" stroke="#fff" stroke-opacity=".9" stroke-width="1"/>
<circle cx="375.9" cy="292.1" r="2.5" fill="#1a8049" fill-opacity=".9" stroke="#fff" stroke-opacity=".9" stroke-width="1"/>
<circle cx="366.6" cy="286.9" r="2.5" fill="#1a8049" fill-opacity=".9" stroke="#fff" stroke-opacity=".9" stroke-width="1"/>
<circle cx="580.7" cy="317.7" r="2.5" fill="#1a8049" fill-opacity=".9" stroke="#fff" stroke-opacity=".9" stroke-width="1"/>
<circle cx="376.1" cy="262.6" r="2.4" fill="#1a8049" fill-opacity=".9" stroke="#fff" stroke-opacity=".9" stroke-width="1"/>
<circle cx="312.6" cy="286.8" r="2.4" fill="#1a8049" fill-opacity=".9" stroke="#fff" stroke-opacity=".9" stroke-width="1"/>
<circle cx="417.1" cy="272.2" r="2.4" fill="#1a8049" fill-opacity=".9" stroke="#fff" stroke-opacity=".9" stroke-width="1"/>
<circle cx="518.5" cy="259.5" r="2.4" fill="#1a8049" fill-opacity=".9" stroke="#fff" stroke-opacity=".9" stroke-width="1"/>
<circle cx="379.4" cy="261.9" r="2.4" fill="#1a8049" fill-opacity=".9" stroke="#fff" stroke-opacity=".9" stroke-width="1"/>
<circle cx="598.0" cy="321.7" r="2.4" fill="#1a8049" fill-opacity=".9" stroke="#fff" stroke-opacity=".9" stroke-width="1"/>
<circle cx="593.3" cy="277.7" r="2.4" fill="#1a8049" fill-opacity=".9" stroke="#fff" stroke-opacity=".9" stroke-width="1"/>
<circle cx="568.0" cy="303.7" r="2.4" fill="#1a8049" fill-opacity=".9" stroke="#fff" stroke-opacity=".9" stroke-width="1"/>
<circle cx="573.7" cy="305.0" r="2.4" fill="#1a8049" fill-opacity=".9" stroke="#fff" stroke-opacity=".9" stroke-width="1"/>
<circle cx="588.8" cy="182.9" r="2.3" fill="#1a8049" fill-opacity=".9" stroke="#fff" stroke-opacity=".9" stroke-width="1"/>
<circle cx="583.1" cy="261.2" r="2.3" fill="#1a8049" fill-opacity=".9" stroke="#fff" stroke-opacity=".9" stroke-width="1"/>
<circle cx="699.3" cy="282.5" r="2.3" fill="#1a8049" fill-opacity=".9" stroke="#fff" stroke-opacity=".9" stroke-width="1"/>
<circle cx="339.3" cy="323.5" r="2.3" fill="#1a8049" fill-opacity=".9" stroke="#fff" stroke-opacity=".9" stroke-width="1"/>
<circle cx="607.0" cy="338.7" r="2.3" fill="#1a8049" fill-opacity=".9" stroke="#fff" stroke-opacity=".9" stroke-width="1"/>
<circle cx="640.8" cy="338.4" r="2.3" fill="#1a8049" fill-opacity=".9" stroke="#fff" stroke-opacity=".9" stroke-width="1"/>
<circle cx="376.5" cy="262.4" r="2.3" fill="#1a8049" fill-opacity=".9" stroke="#fff" stroke-opacity=".9" stroke-width="1"/>
<circle cx="482.1" cy="323.4" r="2.3" fill="#1a8049" fill-opacity=".9" stroke="#fff" stroke-opacity=".9" stroke-width="1"/>
<circle cx="557.9" cy="350.3" r="2.3" fill="#1a8049" fill-opacity=".9" stroke="#fff" stroke-opacity=".9" stroke-width="1"/>
<circle cx="500.0" cy="190.0" r="2.2" fill="#1a8049" fill-opacity=".9" stroke="#fff" stroke-opacity=".9" stroke-width="1"/>
<circle cx="306.0" cy="255.8" r="2.2" fill="#1a8049" fill-opacity=".9" stroke="#fff" stroke-opacity=".9" stroke-width="1"/>
<circle cx="270.5" cy="255.8" r="2.2" fill="#1a8049" fill-opacity=".9" stroke="#fff" stroke-opacity=".9" stroke-width="1"/>
<circle cx="354.9" cy="267.5" r="2.2" fill="#1a8049" fill-opacity=".9" stroke="#fff" stroke-opacity=".9" stroke-width="1"/>
<circle cx="324.8" cy="292.5" r="2.2" fill="#1a8049" fill-opacity=".9" stroke="#fff" stroke-opacity=".9" stroke-width="1"/>
<circle cx="339.5" cy="323.5" r="2.2" fill="#1a8049" fill-opacity=".9" stroke="#fff" stroke-opacity=".9" stroke-width="1"/>
<circle cx="459.4" cy="236.2" r="2.2" fill="#1a8049" fill-opacity=".9" stroke="#fff" stroke-opacity=".9" stroke-width="1"/>
<circle cx="398.5" cy="257.5" r="2.2" fill="#1a8049" fill-opacity=".9" stroke="#fff" stroke-opacity=".9" stroke-width="1"/>
<circle cx="526.6" cy="232.6" r="2.2" fill="#1a8049" fill-opacity=".9" stroke="#fff" stroke-opacity=".9" stroke-width="1"/>
<circle cx="500.2" cy="309.6" r="2.2" fill="#1a8049" fill-opacity=".9" stroke="#fff" stroke-opacity=".9" stroke-width="1"/>
<circle cx="527.3" cy="319.4" r="2.2" fill="#1a8049" fill-opacity=".9" stroke="#fff" stroke-opacity=".9" stroke-width="1"/>
<circle cx="481.8" cy="323.0" r="2.2" fill="#1a8049" fill-opacity=".9" stroke="#fff" stroke-opacity=".9" stroke-width="1"/>
<circle cx="418.9" cy="340.2" r="2.2" fill="#1a8049" fill-opacity=".9" stroke="#fff" stroke-opacity=".9" stroke-width="1"/>
<circle cx="592.7" cy="292.3" r="2.2" fill="#1a8049" fill-opacity=".9" stroke="#fff" stroke-opacity=".9" stroke-width="1"/>
<circle cx="593.0" cy="298.7" r="2.2" fill="#1a8049" fill-opacity=".9" stroke="#fff" stroke-opacity=".9" stroke-width="1"/>
<circle cx="682.4" cy="328.7" r="2.2" fill="#1a8049" fill-opacity=".9" stroke="#fff" stroke-opacity=".9" stroke-width="1"/>
<circle cx="576.3" cy="201.1" r="2.1" fill="#1a8049" fill-opacity=".9" stroke="#fff" stroke-opacity=".9" stroke-width="1"/>
<circle cx="543.6" cy="334.8" r="2.1" fill="#1a8049" fill-opacity=".9" stroke="#fff" stroke-opacity=".9" stroke-width="1"/>
<circle cx="371.2" cy="278.2" r="2.1" fill="#1a8049" fill-opacity=".9" stroke="#fff" stroke-opacity=".9" stroke-width="1"/>
<circle cx="332.1" cy="291.2" r="2.0" fill="#1a8049" fill-opacity=".9" stroke="#fff" stroke-opacity=".9" stroke-width="1"/>
<circle cx="520.5" cy="316.9" r="2.0" fill="#1a8049" fill-opacity=".9" stroke="#fff" stroke-opacity=".9" stroke-width="1"/>
<circle cx="553.5" cy="233.8" r="2.0" fill="#1a8049" fill-opacity=".9" stroke="#fff" stroke-opacity=".9" stroke-width="1"/>
<circle cx="633.0" cy="230.5" r="2.0" fill="#1a8049" fill-opacity=".9" stroke="#fff" stroke-opacity=".9" stroke-width="1"/>
<circle cx="588.8" cy="231.8" r="2.0" fill="#1a8049" fill-opacity=".9" stroke="#fff" stroke-opacity=".9" stroke-width="1"/>
<circle cx="595.3" cy="240.9" r="2.0" fill="#1a8049" fill-opacity=".9" stroke="#fff" stroke-opacity=".9" stroke-width="1"/>
<circle cx="643.4" cy="249.2" r="2.0" fill="#1a8049" fill-opacity=".9" stroke="#fff" stroke-opacity=".9" stroke-width="1"/>
<circle cx="608.3" cy="268.7" r="2.0" fill="#1a8049" fill-opacity=".9" stroke="#fff" stroke-opacity=".9" stroke-width="1"/>
<circle cx="626.5" cy="286.4" r="2.0" fill="#1a8049" fill-opacity=".9" stroke="#fff" stroke-opacity=".9" stroke-width="1"/>
<circle cx="610.4" cy="322.8" r="2.0" fill="#1a8049" fill-opacity=".9" stroke="#fff" stroke-opacity=".9" stroke-width="1"/>
<circle cx="461.3" cy="364.8" r="2.0" fill="#1a8049" fill-opacity=".9" stroke="#fff" stroke-opacity=".9" stroke-width="1"/>
<circle cx="615.6" cy="350.1" r="2.0" fill="#1a8049" fill-opacity=".9" stroke="#fff" stroke-opacity=".9" stroke-width="1"/>
<circle cx="386.9" cy="265.5" r="2.0" fill="#1a8049" fill-opacity=".9" stroke="#fff" stroke-opacity=".9" stroke-width="1"/>
<circle cx="520.1" cy="316.7" r="1.9" fill="#1a8049" fill-opacity=".9" stroke="#fff" stroke-opacity=".9" stroke-width="1"/>
<circle cx="438.0" cy="392.5" r="1.9" fill="#1a8049" fill-opacity=".9" stroke="#fff" stroke-opacity=".9" stroke-width="1"/>
<circle cx="618.2" cy="181.1" r="1.8" fill="#1a8049" fill-opacity=".9" stroke="#fff" stroke-opacity=".9" stroke-width="1"/>
<circle cx="575.3" cy="185.5" r="1.8" fill="#1a8049" fill-opacity=".9" stroke="#fff" stroke-opacity=".9" stroke-width="1"/>
<circle cx="622.0" cy="287.7" r="1.8" fill="#1a8049" fill-opacity=".9" stroke="#fff" stroke-opacity=".9" stroke-width="1"/>
<circle cx="703.2" cy="285.6" r="1.8" fill="#1a8049" fill-opacity=".9" stroke="#fff" stroke-opacity=".9" stroke-width="1"/>
<circle cx="695.9" cy="271.6" r="1.8" fill="#1a8049" fill-opacity=".9" stroke="#fff" stroke-opacity=".9" stroke-width="1"/>
<circle cx="363.4" cy="274.4" r="1.8" fill="#1a8049" fill-opacity=".9" stroke="#fff" stroke-opacity=".9" stroke-width="1"/>
<circle cx="533.0" cy="326.2" r="1.8" fill="#1a8049" fill-opacity=".9" stroke="#fff" stroke-opacity=".9" stroke-width="1"/>
<circle cx="641.0" cy="338.0" r="1.8" fill="#1a8049" fill-opacity=".9" stroke="#fff" stroke-opacity=".9" stroke-width="1"/>
<circle cx="410.6" cy="366.4" r="1.8" fill="#1a8049" fill-opacity=".9" stroke="#fff" stroke-opacity=".9" stroke-width="1"/>
<circle cx="431.0" cy="188.6" r="1.7" fill="#1a8049" fill-opacity=".9" stroke="#fff" stroke-opacity=".9" stroke-width="1"/>
<circle cx="297.2" cy="247.7" r="1.7" fill="#1a8049" fill-opacity=".9" stroke="#fff" stroke-opacity=".9" stroke-width="1"/>
<circle cx="363.4" cy="274.6" r="1.7" fill="#1a8049" fill-opacity=".9" stroke="#fff" stroke-opacity=".9" stroke-width="1"/>
<circle cx="370.8" cy="257.0" r="1.7" fill="#1a8049" fill-opacity=".9" stroke="#fff" stroke-opacity=".9" stroke-width="1"/>
<circle cx="337.0" cy="288.0" r="1.7" fill="#1a8049" fill-opacity=".9" stroke="#fff" stroke-opacity=".9" stroke-width="1"/>
<circle cx="434.4" cy="236.7" r="1.7" fill="#1a8049" fill-opacity=".9" stroke="#fff" stroke-opacity=".9" stroke-width="1"/>
<circle cx="441.0" cy="268.5" r="1.7" fill="#1a8049" fill-opacity=".9" stroke="#fff" stroke-opacity=".9" stroke-width="1"/>
<circle cx="395.0" cy="265.5" r="1.7" fill="#1a8049" fill-opacity=".9" stroke="#fff" stroke-opacity=".9" stroke-width="1"/>
<circle cx="640.9982881218011" cy="308.49713252403376" r="1.7" fill="#1a8049" fill-opacity=".9" stroke="#fff" stroke-opacity=".9" stroke-width="1"/>
<circle cx="538.3644955330703" cy="309.95409175582324" r="1.6" fill="#1a8049" fill-opacity=".9" stroke="#fff" stroke-opacity=".9" stroke-width="1"/>
<circle cx="629.2732008323644" cy="308.052073341417" r="1.6" fill="#1a8049" fill-opacity=".9" stroke="#fff" stroke-opacity=".9" stroke-width="1"/>
<circle cx="668.6" cy="192.5" r="1.6" fill="#1a8049" fill-opacity=".9" stroke="#fff" stroke-opacity=".9" stroke-width="1"/>
<circle cx="692.4802256367126" cy="298.1004360942213" r="2.1" fill="#fff" fill-opacity=".7"/><circle cx="692.4802256367126" cy="298.1004360942213" r="1.6" fill="#1f8a4c"/>
<circle cx="372.5545375888537" cy="343.749906748442" r="2.1" fill="#fff" fill-opacity=".7"/><circle cx="372.5545375888537" cy="343.749906748442" r="1.6" fill="#1f8a4c"/>
<circle cx="656.2242313465086" cy="315.3826352536446" r="2.0" fill="#fff" fill-opacity=".7"/><circle cx="656.2242313465086" cy="315.3826352536446" r="1.5" fill="#1f8a4c"/>
<circle cx="627.9468286404249" cy="329.21507254669353" r="2.0" fill="#fff" fill-opacity=".7"/><circle cx="627.9468286404249" cy="329.21507254669353" r="1.5" fill="#1f8a4c"/>
<circle cx="316.59262669604783" cy="277.45513655470654" r="2.0" fill="#fff" fill-opacity=".7"/><circle cx="316.59262669604783" cy="277.45513655470654" r="1.5" fill="#1f8a4c"/>
<circle cx="696.0031931001433" cy="307.5269266885815" r="2.0" fill="#fff" fill-opacity=".7"/><circle cx="696.0031931001433" cy="307.5269266885815" r="1.5" fill="#1f8a4c"/>
<circle cx="629.4589305107787" cy="298.5605129181847" r="2.0" fill="#fff" fill-opacity=".7"/><circle cx="629.4589305107787" cy="298.5605129181847" r="1.5" fill="#1f8a4c"/>
<circle cx="452.0" cy="187.3" r="2.0" fill="#fff" fill-opacity=".7"/><circle cx="452.0" cy="187.3" r="1.5" fill="#1f8a4c"/>
<circle cx="640.8" cy="214.9" r="2.0" fill="#fff" fill-opacity=".7"/><circle cx="640.8" cy="214.9" r="1.5" fill="#1f8a4c"/>
<circle cx="652.5" cy="259.0" r="2.0" fill="#fff" fill-opacity=".7"/><circle cx="652.5" cy="259.0" r="1.5" fill="#1f8a4c"/>
<circle cx="614.3" cy="328.0" r="2.0" fill="#fff" fill-opacity=".7"/><circle cx="614.3" cy="328.0" r="1.5" fill="#1f8a4c"/>
<circle cx="440.3" cy="376.5" r="2.0" fill="#fff" fill-opacity=".7"/><circle cx="440.3" cy="376.5" r="1.5" fill="#1f8a4c"/>
<circle cx="602.0" cy="208.0" r="2.0" fill="#fff" fill-opacity=".7"/><circle cx="602.0" cy="208.0" r="1.5" fill="#1f8a4c"/>
<circle cx="357.08430709427483" cy="320.4659775381788" r="2.0" fill="#fff" fill-opacity=".7"/><circle cx="357.08430709427483" cy="320.4659775381788" r="1.5" fill="#1f8a4c"/>
<circle cx="667.4978254770476" cy="181.57444319976412" r="2.0" fill="#fff" fill-opacity=".7"/><circle cx="667.4978254770476" cy="181.57444319976412" r="1.5" fill="#1f8a4c"/>
<circle cx="663.6186716457283" cy="295.55002506370363" r="1.9" fill="#fff" fill-opacity=".7"/><circle cx="663.6186716457283" cy="295.55002506370363" r="1.4" fill="#1f8a4c"/>
<circle cx="570.6922623711966" cy="331.6486401969771" r="1.9" fill="#fff" fill-opacity=".7"/><circle cx="570.6922623711966" cy="331.6486401969771" r="1.4" fill="#1f8a4c"/>
<circle cx="489.42502760454033" cy="323.2596805509029" r="1.9" fill="#fff" fill-opacity=".7"/><circle cx="489.42502760454033" cy="323.2596805509029" r="1.4" fill="#1f8a4c"/>
<circle cx="331.1936562837716" cy="270.42970231990677" r="1.9" fill="#fff" fill-opacity=".7"/><circle cx="331.1936562837716" cy="270.42970231990677" r="1.4" fill="#1f8a4c"/>
<circle cx="588.3" cy="246.7" r="1.9" fill="#fff" fill-opacity=".7"/><circle cx="588.3" cy="246.7" r="1.4" fill="#1f8a4c"/>
<circle cx="540.4897839746505" cy="326.5820972358084" r="1.9" fill="#fff" fill-opacity=".7"/><circle cx="540.4897839746505" cy="326.5820972358084" r="1.4" fill="#1f8a4c"/>
<circle cx="273.49241855236875" cy="248.2929015906537" r="1.9" fill="#fff" fill-opacity=".7"/><circle cx="273.49241855236875" cy="248.2929015906537" r="1.4" fill="#1f8a4c"/>
<circle cx="393.2004486388479" cy="394.3758664947581" r="1.8" fill="#fff" fill-opacity=".7"/><circle cx="393.2004486388479" cy="394.3758664947581" r="1.3" fill="#1f8a4c"/>
<circle cx="393.08094505865574" cy="236.84062067637703" r="1.8" fill="#fff" fill-opacity=".7"/><circle cx="393.08094505865574" cy="236.84062067637703" r="1.3" fill="#1f8a4c"/>
<circle cx="617.9508267373595" cy="192.8495361945936" r="1.8" fill="#fff" fill-opacity=".7"/><circle cx="617.9508267373595" cy="192.8495361945936" r="1.3" fill="#1f8a4c"/>
<circle cx="270.88015568083074" cy="281.7662084402299" r="1.8" fill="#fff" fill-opacity=".7"/><circle cx="270.88015568083074" cy="281.7662084402299" r="1.3" fill="#1f8a4c"/>
<circle cx="556.3266218592248" cy="300.57685521846054" r="1.8" fill="#fff" fill-opacity=".7"/><circle cx="556.3266218592248" cy="300.57685521846054" r="1.3" fill="#1f8a4c"/>
<circle cx="301.6" cy="220.4" r="1.8" fill="#fff" fill-opacity=".7"/><circle cx="301.6" cy="220.4" r="1.3" fill="#1f8a4c"/>
<circle cx="601.8" cy="207.6" r="1.8" fill="#fff" fill-opacity=".7"/><circle cx="601.8" cy="207.6" r="1.3" fill="#1f8a4c"/>
<circle cx="619.5808966864317" cy="304.91273094678206" r="1.8" fill="#fff" fill-opacity=".7"/><circle cx="619.5808966864317" cy="304.91273094678206" r="1.3" fill="#1f8a4c"/>
<circle cx="419.375006916811" cy="348.400895994953" r="1.8" fill="#fff" fill-opacity=".7"/><circle cx="419.375006916811" cy="348.400895994953" r="1.3" fill="#1f8a4c"/>
<circle cx="560.8086793960913" cy="306.735960718266" r="1.8" fill="#fff" fill-opacity=".7"/><circle cx="560.8086793960913" cy="306.735960718266" r="1.3" fill="#1f8a4c"/>
<circle cx="661.3975944358033" cy="307.97271710609004" r="1.7" fill="#fff" fill-opacity=".7"/><circle cx="661.3975944358033" cy="307.97271710609004" r="1.2" fill="#1f8a4c"/>
<circle cx="561.0608918381206" cy="335.98386977248106" r="1.7" fill="#fff" fill-opacity=".7"/><circle cx="561.0608918381206" cy="335.98386977248106" r="1.2" fill="#1f8a4c"/>
<circle cx="524.6" cy="203.5" r="1.7" fill="#fff" fill-opacity=".7"/><circle cx="524.6" cy="203.5" r="1.2" fill="#1f8a4c"/>
<circle cx="571.385634412007" cy="324.3200667911756" r="1.7" fill="#fff" fill-opacity=".7"/><circle cx="571.385634412007" cy="324.3200667911756" r="1.2" fill="#1f8a4c"/>
<circle cx="660.5665137684446" cy="212.08149609146557" r="1.7" fill="#fff" fill-opacity=".7"/><circle cx="660.5665137684446" cy="212.08149609146557" r="1.2" fill="#1f8a4c"/>
<circle cx="634.4792209441109" cy="251.96202062627336" r="1.7" fill="#fff" fill-opacity=".7"/><circle cx="634.4792209441109" cy="251.96202062627336" r="1.2" fill="#1f8a4c"/>
<circle cx="691.1299468409422" cy="275.55086520389665" r="1.6" fill="#fff" fill-opacity=".7"/><circle cx="691.1299468409422" cy="275.55086520389665" r="1.1" fill="#1f8a4c"/>
<circle cx="470.5817513089838" cy="198.1883935671409" r="1.6" fill="#fff" fill-opacity=".7"/><circle cx="470.5817513089838" cy="198.1883935671409" r="1.1" fill="#1f8a4c"/>
<circle cx="438.25205845799735" cy="215.41785516756423" r="1.6" fill="#fff" fill-opacity=".7"/><circle cx="438.25205845799735" cy="215.41785516756423" r="1.1" fill="#1f8a4c"/>
<circle cx="281.28285334608955" cy="245.35445615519293" r="1.6" fill="#fff" fill-opacity=".7"/><circle cx="281.28285334608955" cy="245.35445615519293" r="1.1" fill="#1f8a4c"/>
<circle cx="617.865412985331" cy="296.14495936157175" r="1.5" fill="#fff" fill-opacity=".7"/><circle cx="617.865412985331" cy="296.14495936157175" r="1.0" fill="#1f8a4c"/>
<circle cx="348.9705377303335" cy="227.09212582881418" r="1.5" fill="#fff" fill-opacity=".7"/><circle cx="348.9705377303335" cy="227.09212582881418" r="1.0" fill="#1f8a4c"/>
<circle cx="548.5282466549654" cy="317.88663698308045" r="1.5" fill="#fff" fill-opacity=".7"/><circle cx="548.5282466549654" cy="317.88663698308045" r="1.0" fill="#1f8a4c"/>
<circle cx="680.4519431961796" cy="233.8607516108218" r="1.5" fill="#fff" fill-opacity=".7"/><circle cx="680.4519431961796" cy="233.8607516108218" r="1.0" fill="#1f8a4c"/>
<circle cx="610.8072870567289" cy="176.99770244309758" r="1.5" fill="#fff" fill-opacity=".7"/><circle cx="610.8072870567289" cy="176.99770244309758" r="1.0" fill="#1f8a4c"/>
<circle cx="674.6" cy="223.2" r="1.5" fill="#fff" fill-opacity=".7"/><circle cx="674.6" cy="223.2" r="1.0" fill="#1f8a4c"/>
<circle cx="457.67045370631473" cy="202.49385716901955" r="1.5" fill="#fff" fill-opacity=".7"/><circle cx="457.67045370631473" cy="202.49385716901955" r="1.0" fill="#1f8a4c"/>
<circle cx="552.9133623448643" cy="284.7136985197928" r="1.5" fill="#fff" fill-opacity=".7"/><circle cx="552.9133623448643" cy="284.7136985197928" r="1.0" fill="#1f8a4c"/>
<circle cx="374.40213937763224" cy="324.79201225778513" r="1.5" fill="#fff" fill-opacity=".7"/><circle cx="374.40213937763224" cy="324.79201225778513" r="1.0" fill="#1f8a4c"/>
<circle cx="423.3973429842565" cy="379.3472930368197" r="1.4" fill="#fff" fill-opacity=".7"/><circle cx="423.3973429842565" cy="379.3472930368197" r="0.9" fill="#1f8a4c"/>
<circle cx="405.4555127614024" cy="391.3358830693018" r="1.4" fill="#fff" fill-opacity=".7"/><circle cx="405.4555127614024" cy="391.3358830693018" r="0.9" fill="#1f8a4c"/>
<circle cx="469.6" cy="151.9" r="1.4" fill="#fff" fill-opacity=".7"/><circle cx="469.6" cy="151.9" r="0.9" fill="#1f8a4c"/>
<circle cx="491.1" cy="160.0" r="1.3" fill="#fff" fill-opacity=".7"/><circle cx="491.1" cy="160.0" r="0.8" fill="#1f8a4c"/>
<circle cx="430.0" cy="169.7" r="1.3" fill="#fff" fill-opacity=".7"/><circle cx="430.0" cy="169.7" r="0.8" fill="#1f8a4c"/>
<circle cx="436.6" cy="165.8" r="1.3" fill="#fff" fill-opacity=".7"/><circle cx="436.6" cy="165.8" r="0.8" fill="#1f8a4c"/>
<circle cx="465.5" cy="172.0" r="1.3" fill="#fff" fill-opacity=".7"/><circle cx="465.5" cy="172.0" r="0.8" fill="#1f8a4c"/>
<circle cx="453.2" cy="215.5" r="1.3" fill="#fff" fill-opacity=".7"/><circle cx="453.2" cy="215.5" r="0.8" fill="#1f8a4c"/>
<circle cx="661.3" cy="169.0" r="1.3" fill="#fff" fill-opacity=".7"/><circle cx="661.3" cy="169.0" r="0.8" fill="#1f8a4c"/>
<circle cx="661.6" cy="198.5" r="1.3" fill="#fff" fill-opacity=".7"/><circle cx="661.6" cy="198.5" r="0.8" fill="#1f8a4c"/>
<circle cx="603.0" cy="193.3" r="1.3" fill="#fff" fill-opacity=".7"/><circle cx="603.0" cy="193.3" r="0.8" fill="#1f8a4c"/>
</svg>
<div class="abs" style="left:205px;top:431px;width:175px;height:13px;background:rgba(255,255,255,.85)"></div>
<div class="t" style="left:208px;top:433px;font-size:10.8px;color:#555;letter-spacing:.12px">© 2021 Mapbox © OpenStreetMap</div>
</body></html>
